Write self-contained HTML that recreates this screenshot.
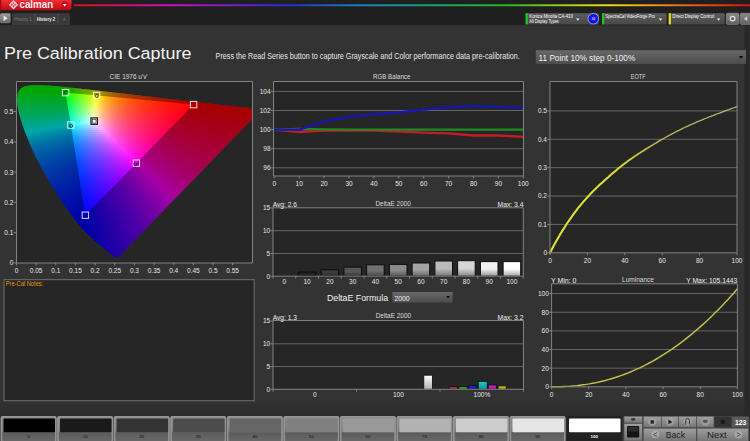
<!DOCTYPE html>
<html lang="en"><head><meta charset="utf-8"><title>Pre Calibration Capture</title>
<style>
html,body{margin:0;padding:0;background:#333333;overflow:hidden}
svg{display:block;font-family:"Liberation Sans", sans-serif}
</style></head>
<body>
<svg width="750" height="441" viewBox="0 0 750 441">
<defs>
<linearGradient id="botg" x1="0" y1="0" x2="0" y2="1"><stop offset="0" stop-color="#333333"/><stop offset="1" stop-color="#2a2a2a"/></linearGradient>
<linearGradient id="rain" x1="74" y1="0" x2="750" y2="0" gradientUnits="userSpaceOnUse"><stop offset="0" stop-color="#e01020"/><stop offset="0.15" stop-color="#d010c0"/><stop offset="0.24" stop-color="#7020d0"/><stop offset="0.32" stop-color="#2030d0"/><stop offset="0.42" stop-color="#2080c0"/><stop offset="0.50" stop-color="#10a090"/><stop offset="0.64" stop-color="#20c020"/><stop offset="0.72" stop-color="#a0d010"/><stop offset="0.79" stop-color="#f0e010"/><stop offset="0.90" stop-color="#f07010"/><stop offset="1" stop-color="#e01010"/></linearGradient>
<linearGradient id="redg" x1="0" y1="0" x2="0" y2="1"><stop offset="0" stop-color="#f03038"/><stop offset="0.5" stop-color="#e01822"/><stop offset="1" stop-color="#b80c14"/></linearGradient>
<linearGradient id="playg" x1="0" y1="0" x2="0" y2="1"><stop offset="0" stop-color="#9a9a9a"/><stop offset="1" stop-color="#6a6a6a"/></linearGradient>
<linearGradient id="mbg" x1="0" y1="0" x2="0" y2="1"><stop offset="0" stop-color="#5c5c5c"/><stop offset="1" stop-color="#484848"/></linearGradient>
<linearGradient id="tbg" x1="0" y1="0" x2="0" y2="1"><stop offset="0" stop-color="#8a8a8a"/><stop offset="1" stop-color="#606060"/></linearGradient>
<linearGradient id="ddg" x1="0" y1="0" x2="0" y2="1"><stop offset="0" stop-color="#686868"/><stop offset="1" stop-color="#4c4c4c"/></linearGradient>
<clipPath id="plotclip"><rect x="16.5" y="81.5" width="236.0" height="181.5"/></clipPath>
<clipPath id="locclip" clip-path="url(#plotclip)"><path d="M117.4 258.0L116.3 258.1L115.1 257.6L114.2 257.0L113.4 256.3L112.6 255.6L111.8 254.9L110.9 254.2L110.1 253.5L109.2 252.8L108.4 252.1L107.5 251.4L106.7 250.7L105.8 250.0L105.0 249.3L104.2 248.6L103.3 247.9L102.5 247.2L101.6 246.5L100.8 245.8L100.0 245.1L99.1 244.4L98.3 243.7L97.5 243.0L96.7 242.3L95.8 241.6L95.0 240.9L94.2 240.2L93.4 239.5L92.6 238.7L91.8 238.0L91.0 237.3L90.2 236.6L89.4 235.8L88.7 235.1L87.9 234.3L87.2 233.6L86.4 232.8L85.7 232.0L84.9 231.3L84.2 230.5L83.5 229.7L82.8 229.0L82.1 228.2L81.4 227.4L80.7 226.6L80.0 225.8L79.3 225.0L78.7 224.2L78.0 223.4L77.3 222.6L76.7 221.8L76.0 221.0L75.4 220.2L74.8 219.4L74.1 218.5L73.5 217.7L72.9 216.9L72.2 216.1L71.6 215.3L71.0 214.4L70.4 213.6L69.8 212.8L69.2 212.0L68.6 211.1L68.0 210.3L67.4 209.5L66.8 208.6L66.2 207.8L65.6 207.0L65.0 206.1L64.4 205.3L63.8 204.4L63.3 203.6L62.7 202.7L62.1 201.9L61.6 201.1L61.0 200.2L60.4 199.4L59.9 198.5L59.3 197.7L58.8 196.8L58.2 196.0L57.7 195.1L57.1 194.2L56.6 193.4L56.1 192.5L55.5 191.7L55.0 190.8L54.5 190.0L53.9 189.1L53.4 188.2L52.9 187.4L52.4 186.5L51.9 185.6L51.3 184.8L50.8 183.9L50.3 183.1L49.8 182.2L49.3 181.3L48.8 180.5L48.3 179.6L47.7 178.7L47.2 177.9L46.7 177.0L46.2 176.1L45.7 175.2L45.2 174.4L44.7 173.5L44.2 172.6L43.7 171.8L43.2 170.9L42.8 170.0L42.3 169.1L41.8 168.3L41.3 167.4L40.8 166.5L40.4 165.6L39.9 164.7L39.4 163.9L39.0 163.0L38.5 162.1L38.0 161.2L37.6 160.3L37.1 159.4L36.7 158.6L36.2 157.7L35.8 156.8L35.4 155.9L34.9 155.0L34.5 154.1L34.1 153.2L33.7 152.3L33.3 151.4L32.8 150.5L32.4 149.6L32.0 148.7L31.6 147.8L31.2 146.9L30.8 146.0L30.4 145.1L30.0 144.2L29.7 143.3L29.3 142.4L28.9 141.5L28.5 140.6L28.1 139.7L27.8 138.8L27.4 137.9L27.0 137.0L26.7 136.1L26.3 135.1L26.0 134.2L25.6 133.3L25.3 132.4L24.9 131.5L24.6 130.6L24.2 129.7L23.9 128.7L23.6 127.8L23.3 126.9L22.9 126.0L22.6 125.1L22.3 124.1L22.0 123.2L21.7 122.3L21.4 121.4L21.1 120.5L20.8 119.5L20.6 118.6L20.3 117.7L20.0 116.7L19.8 115.8L19.5 114.9L19.3 113.9L19.0 113.0L18.8 112.1L18.6 111.1L18.4 110.2L18.2 109.3L18.0 108.3L17.8 107.4L17.7 106.4L17.5 105.5L17.4 104.5L17.3 103.6L17.2 102.6L17.1 101.7L17.1 100.7L17.0 99.8L17.1 98.8L17.1 97.9L17.2 96.9L17.3 96.0L17.4 95.0L17.7 94.1L17.9 93.2L18.3 92.2L18.7 91.3L19.2 90.4L19.9 89.6L20.6 88.8L21.4 88.1L22.3 87.5L23.4 87.0L24.5 86.5L25.6 86.1L26.8 85.9L28.0 85.7L29.2 85.5L30.5 85.4L31.7 85.3L32.9 85.3L34.2 85.2L35.4 85.2L36.6 85.2L37.9 85.2L39.1 85.2L40.3 85.2L41.6 85.3L42.8 85.3L44.0 85.4L45.3 85.4L46.5 85.5L47.7 85.6L49.0 85.6L50.2 85.7L51.4 85.8L52.6 85.9L53.9 86.0L55.1 86.1L56.3 86.2L57.6 86.3L58.8 86.4L60.0 86.6L61.2 86.7L62.5 86.8L63.7 86.9L64.9 87.0L66.1 87.2L67.4 87.3L68.6 87.4L69.8 87.5L71.0 87.7L72.2 87.8L73.5 87.9L74.7 88.1L75.9 88.2L77.1 88.3L78.4 88.5L79.6 88.6L80.8 88.7L82.0 88.9L83.2 89.0L84.5 89.2L85.7 89.3L86.9 89.4L88.1 89.6L89.3 89.7L90.6 89.8L91.8 90.0L93.0 90.1L94.2 90.3L95.5 90.4L96.7 90.5L97.9 90.7L99.1 90.8L100.3 91.0L101.6 91.1L102.8 91.2L104.0 91.4L105.2 91.5L106.4 91.7L107.7 91.8L108.9 92.0L110.1 92.1L111.3 92.2L112.5 92.4L113.8 92.5L115.0 92.7L116.2 92.8L117.4 92.9L118.7 93.1L119.9 93.2L121.1 93.4L122.3 93.5L123.5 93.6L124.8 93.8L126.0 93.9L127.2 94.1L128.4 94.2L129.6 94.3L130.9 94.5L132.1 94.6L133.3 94.8L134.5 94.9L135.7 95.0L137.0 95.2L138.2 95.3L139.4 95.5L140.6 95.6L141.8 95.7L143.1 95.9L144.3 96.0L145.5 96.2L146.7 96.3L148.0 96.4L149.2 96.6L150.4 96.7L151.6 96.9L152.8 97.0L154.1 97.2L155.3 97.3L156.5 97.4L157.7 97.6L158.9 97.7L160.2 97.9L161.4 98.0L162.6 98.1L163.8 98.3L165.0 98.4L166.3 98.6L167.5 98.7L168.7 98.8L169.9 99.0L171.1 99.1L172.4 99.3L173.6 99.4L174.8 99.6L176.0 99.7L177.3 99.8L178.5 100.0L179.7 100.1L180.9 100.3L182.1 100.4L183.4 100.5L184.6 100.7L185.8 100.8L187.0 101.0L188.2 101.1L189.5 101.2L190.7 101.4L191.9 101.5L193.1 101.7L194.3 101.8L195.6 101.9L196.8 102.1L198.0 102.2L199.2 102.4L200.5 102.5L201.7 102.6L202.9 102.8L204.1 102.9L205.3 103.1L206.6 103.2L207.8 103.3L209.0 103.5L210.2 103.6L211.4 103.8L212.7 103.9L213.9 104.0L215.1 104.2L216.3 104.3L217.5 104.5L218.8 104.6L220.0 104.8L221.2 104.9L222.4 105.0L223.6 105.2L224.9 105.3L226.1 105.5L227.3 105.6L228.5 105.7L229.8 105.9L231.0 106.0L232.2 106.2L233.4 106.3L234.6 106.4L235.9 106.6L237.1 106.7L238.3 106.9L239.5 107.0L240.7 107.1L242.0 107.3L243.2 107.4L244.4 107.6L245.6 107.7L246.8 107.8L248.1 108.0L249.3 108.1L250.5 108.3L251.7 108.4L252.9 108.5L254.2 108.7L255.4 108.8L256.6 109.0L257.8 109.1L259.1 109.3L260.3 109.4L261.5 109.5Z"/></clipPath>
<linearGradient id="r0" gradientUnits="userSpaceOnUse" x1="25.5" y1="0" x2="54.5" y2="0"><stop offset="0.000" stop-color="#00ff00"/><stop offset="0.125" stop-color="#00ff00"/><stop offset="0.250" stop-color="#00ff00"/><stop offset="0.375" stop-color="#00ff00"/><stop offset="0.500" stop-color="#00ff00"/><stop offset="0.625" stop-color="#00ff00"/><stop offset="0.750" stop-color="#00ff00"/><stop offset="0.875" stop-color="#00ff00"/><stop offset="1.000" stop-color="#00ff00"/></linearGradient>
<linearGradient id="r1" gradientUnits="userSpaceOnUse" x1="21.0" y1="0" x2="74.5" y2="0"><stop offset="0.000" stop-color="#00ff00"/><stop offset="0.071" stop-color="#00ff00"/><stop offset="0.143" stop-color="#00ff00"/><stop offset="0.214" stop-color="#00ff00"/><stop offset="0.286" stop-color="#00ff00"/><stop offset="0.357" stop-color="#00ff00"/><stop offset="0.429" stop-color="#00ff00"/><stop offset="0.500" stop-color="#00ff00"/><stop offset="0.571" stop-color="#00ff00"/><stop offset="0.643" stop-color="#00ff00"/><stop offset="0.714" stop-color="#00ff00"/><stop offset="0.786" stop-color="#00ff00"/><stop offset="0.857" stop-color="#12ff00"/><stop offset="0.929" stop-color="#2dff00"/><stop offset="1.000" stop-color="#49ff00"/></linearGradient>
<linearGradient id="r2" gradientUnits="userSpaceOnUse" x1="19.0" y1="0" x2="92.5" y2="0"><stop offset="0.000" stop-color="#00ff05"/><stop offset="0.053" stop-color="#00ff03"/><stop offset="0.105" stop-color="#00ff01"/><stop offset="0.158" stop-color="#00ff00"/><stop offset="0.211" stop-color="#00ff00"/><stop offset="0.263" stop-color="#00ff00"/><stop offset="0.316" stop-color="#00ff00"/><stop offset="0.368" stop-color="#00ff00"/><stop offset="0.421" stop-color="#00ff00"/><stop offset="0.474" stop-color="#00ff00"/><stop offset="0.526" stop-color="#00ff00"/><stop offset="0.579" stop-color="#00ff00"/><stop offset="0.632" stop-color="#04ff00"/><stop offset="0.684" stop-color="#22ff00"/><stop offset="0.737" stop-color="#3eff00"/><stop offset="0.789" stop-color="#5aff00"/><stop offset="0.842" stop-color="#77ff00"/><stop offset="0.895" stop-color="#95ff00"/><stop offset="0.947" stop-color="#b4ff00"/><stop offset="1.000" stop-color="#d5ff00"/></linearGradient>
<linearGradient id="r3" gradientUnits="userSpaceOnUse" x1="17.5" y1="0" x2="110.0" y2="0"><stop offset="0.000" stop-color="#00ff11"/><stop offset="0.042" stop-color="#00ff10"/><stop offset="0.083" stop-color="#00ff0e"/><stop offset="0.125" stop-color="#00ff0c"/><stop offset="0.167" stop-color="#00ff0a"/><stop offset="0.208" stop-color="#00ff08"/><stop offset="0.250" stop-color="#00ff06"/><stop offset="0.292" stop-color="#00ff03"/><stop offset="0.333" stop-color="#00ff01"/><stop offset="0.375" stop-color="#00ff00"/><stop offset="0.417" stop-color="#00ff00"/><stop offset="0.458" stop-color="#00ff00"/><stop offset="0.500" stop-color="#00ff00"/><stop offset="0.542" stop-color="#13ff00"/><stop offset="0.583" stop-color="#30ff00"/><stop offset="0.625" stop-color="#4cff00"/><stop offset="0.667" stop-color="#69ff00"/><stop offset="0.708" stop-color="#87ff00"/><stop offset="0.750" stop-color="#a6ff00"/><stop offset="0.792" stop-color="#c6ff00"/><stop offset="0.833" stop-color="#e8ff00"/><stop offset="0.875" stop-color="#fff300"/><stop offset="0.917" stop-color="#ffd500"/><stop offset="0.958" stop-color="#ffbc00"/><stop offset="1.000" stop-color="#ffa700"/></linearGradient>
<linearGradient id="r4" gradientUnits="userSpaceOnUse" x1="17.0" y1="0" x2="127.5" y2="0"><stop offset="0.000" stop-color="#00ff1c"/><stop offset="0.036" stop-color="#00ff1b"/><stop offset="0.071" stop-color="#00ff19"/><stop offset="0.107" stop-color="#00ff18"/><stop offset="0.143" stop-color="#00ff16"/><stop offset="0.179" stop-color="#00ff14"/><stop offset="0.214" stop-color="#00ff13"/><stop offset="0.250" stop-color="#00ff11"/><stop offset="0.286" stop-color="#00ff0f"/><stop offset="0.321" stop-color="#00ff0d"/><stop offset="0.357" stop-color="#00ff0a"/><stop offset="0.393" stop-color="#00ff08"/><stop offset="0.429" stop-color="#00ff05"/><stop offset="0.464" stop-color="#16ff02"/><stop offset="0.500" stop-color="#34ff00"/><stop offset="0.536" stop-color="#52ff00"/><stop offset="0.571" stop-color="#70ff00"/><stop offset="0.607" stop-color="#8fff00"/><stop offset="0.643" stop-color="#b0ff00"/><stop offset="0.679" stop-color="#d2ff00"/><stop offset="0.714" stop-color="#f6ff00"/><stop offset="0.750" stop-color="#ffe500"/><stop offset="0.786" stop-color="#ffc800"/><stop offset="0.821" stop-color="#ffb100"/><stop offset="0.857" stop-color="#ff9d00"/><stop offset="0.893" stop-color="#ff8d00"/><stop offset="0.929" stop-color="#ff7e00"/><stop offset="0.964" stop-color="#ff7100"/><stop offset="1.000" stop-color="#ff6600"/></linearGradient>
<linearGradient id="r5" gradientUnits="userSpaceOnUse" x1="16.5" y1="0" x2="145.0" y2="0"><stop offset="0.000" stop-color="#00ff26"/><stop offset="0.030" stop-color="#00ff25"/><stop offset="0.061" stop-color="#00ff24"/><stop offset="0.091" stop-color="#00ff23"/><stop offset="0.121" stop-color="#00ff22"/><stop offset="0.152" stop-color="#00ff20"/><stop offset="0.182" stop-color="#00ff1f"/><stop offset="0.212" stop-color="#00ff1d"/><stop offset="0.242" stop-color="#00ff1c"/><stop offset="0.273" stop-color="#00ff1a"/><stop offset="0.303" stop-color="#00ff18"/><stop offset="0.333" stop-color="#00ff17"/><stop offset="0.364" stop-color="#00ff15"/><stop offset="0.394" stop-color="#0aff13"/><stop offset="0.424" stop-color="#29ff10"/><stop offset="0.455" stop-color="#47ff0e"/><stop offset="0.485" stop-color="#65ff0b"/><stop offset="0.515" stop-color="#84ff08"/><stop offset="0.545" stop-color="#a4ff05"/><stop offset="0.576" stop-color="#c6ff01"/><stop offset="0.606" stop-color="#e9ff00"/><stop offset="0.636" stop-color="#fff000"/><stop offset="0.667" stop-color="#ffd200"/><stop offset="0.697" stop-color="#ffb900"/><stop offset="0.727" stop-color="#ffa400"/><stop offset="0.758" stop-color="#ff9200"/><stop offset="0.788" stop-color="#ff8300"/><stop offset="0.818" stop-color="#ff7500"/><stop offset="0.848" stop-color="#ff6a00"/><stop offset="0.879" stop-color="#ff5f00"/><stop offset="0.909" stop-color="#ff5600"/><stop offset="0.939" stop-color="#ff4e00"/><stop offset="0.970" stop-color="#ff4600"/><stop offset="1.000" stop-color="#ff3f00"/></linearGradient>
<linearGradient id="r6" gradientUnits="userSpaceOnUse" x1="16.5" y1="0" x2="162.0" y2="0"><stop offset="0.000" stop-color="#00ff30"/><stop offset="0.027" stop-color="#00ff30"/><stop offset="0.054" stop-color="#00ff2f"/><stop offset="0.081" stop-color="#00ff2e"/><stop offset="0.108" stop-color="#00ff2d"/><stop offset="0.135" stop-color="#00ff2c"/><stop offset="0.162" stop-color="#00ff2b"/><stop offset="0.189" stop-color="#00ff29"/><stop offset="0.216" stop-color="#00ff28"/><stop offset="0.243" stop-color="#00ff27"/><stop offset="0.270" stop-color="#00ff25"/><stop offset="0.297" stop-color="#00ff24"/><stop offset="0.324" stop-color="#00ff22"/><stop offset="0.351" stop-color="#0cff21"/><stop offset="0.378" stop-color="#2bff1f"/><stop offset="0.405" stop-color="#4aff1d"/><stop offset="0.432" stop-color="#69ff1b"/><stop offset="0.459" stop-color="#89ff19"/><stop offset="0.486" stop-color="#aaff17"/><stop offset="0.514" stop-color="#cdff14"/><stop offset="0.541" stop-color="#f2ff11"/><stop offset="0.568" stop-color="#ffe80d"/><stop offset="0.595" stop-color="#ffca09"/><stop offset="0.622" stop-color="#ffb205"/><stop offset="0.649" stop-color="#ff9d02"/><stop offset="0.676" stop-color="#ff8c00"/><stop offset="0.703" stop-color="#ff7d00"/><stop offset="0.730" stop-color="#ff7000"/><stop offset="0.757" stop-color="#ff6500"/><stop offset="0.784" stop-color="#ff5b00"/><stop offset="0.811" stop-color="#ff5200"/><stop offset="0.838" stop-color="#ff4900"/><stop offset="0.865" stop-color="#ff4200"/><stop offset="0.892" stop-color="#ff3b00"/><stop offset="0.919" stop-color="#ff3500"/><stop offset="0.946" stop-color="#ff2f00"/><stop offset="0.973" stop-color="#ff2a00"/><stop offset="1.000" stop-color="#ff2500"/></linearGradient>
<linearGradient id="r7" gradientUnits="userSpaceOnUse" x1="16.5" y1="0" x2="179.5" y2="0"><stop offset="0.000" stop-color="#00ff3a"/><stop offset="0.024" stop-color="#00ff3a"/><stop offset="0.049" stop-color="#00ff39"/><stop offset="0.073" stop-color="#00ff38"/><stop offset="0.098" stop-color="#00ff38"/><stop offset="0.122" stop-color="#00ff37"/><stop offset="0.146" stop-color="#00ff36"/><stop offset="0.171" stop-color="#00ff35"/><stop offset="0.195" stop-color="#00ff34"/><stop offset="0.220" stop-color="#00ff33"/><stop offset="0.244" stop-color="#00ff32"/><stop offset="0.268" stop-color="#00ff31"/><stop offset="0.293" stop-color="#00ff30"/><stop offset="0.317" stop-color="#0eff2f"/><stop offset="0.341" stop-color="#2eff2e"/><stop offset="0.366" stop-color="#4eff2c"/><stop offset="0.390" stop-color="#6eff2b"/><stop offset="0.415" stop-color="#8fff29"/><stop offset="0.439" stop-color="#b1ff27"/><stop offset="0.463" stop-color="#d6ff26"/><stop offset="0.488" stop-color="#fcff24"/><stop offset="0.512" stop-color="#ffde1d"/><stop offset="0.537" stop-color="#ffc218"/><stop offset="0.561" stop-color="#ffaa13"/><stop offset="0.585" stop-color="#ff960f"/><stop offset="0.610" stop-color="#ff860c"/><stop offset="0.634" stop-color="#ff7709"/><stop offset="0.659" stop-color="#ff6b06"/><stop offset="0.683" stop-color="#ff6004"/><stop offset="0.707" stop-color="#ff5602"/><stop offset="0.732" stop-color="#ff4d00"/><stop offset="0.756" stop-color="#ff4500"/><stop offset="0.780" stop-color="#ff3e00"/><stop offset="0.805" stop-color="#ff3700"/><stop offset="0.829" stop-color="#ff3100"/><stop offset="0.854" stop-color="#ff2c00"/><stop offset="0.878" stop-color="#ff2700"/><stop offset="0.902" stop-color="#ff2200"/><stop offset="0.927" stop-color="#ff1d00"/><stop offset="0.951" stop-color="#ff1900"/><stop offset="0.976" stop-color="#ff1500"/><stop offset="1.000" stop-color="#ff1100"/></linearGradient>
<linearGradient id="r8" gradientUnits="userSpaceOnUse" x1="16.5" y1="0" x2="197.0" y2="0"><stop offset="0.000" stop-color="#00ff45"/><stop offset="0.022" stop-color="#00ff44"/><stop offset="0.043" stop-color="#00ff44"/><stop offset="0.065" stop-color="#00ff43"/><stop offset="0.087" stop-color="#00ff43"/><stop offset="0.109" stop-color="#00ff42"/><stop offset="0.130" stop-color="#00ff42"/><stop offset="0.152" stop-color="#00ff41"/><stop offset="0.174" stop-color="#00ff41"/><stop offset="0.196" stop-color="#00ff40"/><stop offset="0.217" stop-color="#00ff3f"/><stop offset="0.239" stop-color="#00ff3f"/><stop offset="0.261" stop-color="#00ff3e"/><stop offset="0.283" stop-color="#05ff3d"/><stop offset="0.304" stop-color="#27ff3c"/><stop offset="0.326" stop-color="#46ff3c"/><stop offset="0.348" stop-color="#66ff3b"/><stop offset="0.370" stop-color="#87ff3a"/><stop offset="0.391" stop-color="#a9ff39"/><stop offset="0.413" stop-color="#cdff37"/><stop offset="0.435" stop-color="#f3ff36"/><stop offset="0.457" stop-color="#ffe530"/><stop offset="0.478" stop-color="#ffc728"/><stop offset="0.500" stop-color="#ffae22"/><stop offset="0.522" stop-color="#ff9a1d"/><stop offset="0.543" stop-color="#ff8919"/><stop offset="0.565" stop-color="#ff7a15"/><stop offset="0.587" stop-color="#ff6d12"/><stop offset="0.609" stop-color="#ff620f"/><stop offset="0.630" stop-color="#ff580c"/><stop offset="0.652" stop-color="#ff4f0a"/><stop offset="0.674" stop-color="#ff4608"/><stop offset="0.696" stop-color="#ff3f06"/><stop offset="0.717" stop-color="#ff3804"/><stop offset="0.739" stop-color="#ff3203"/><stop offset="0.761" stop-color="#ff2d01"/><stop offset="0.783" stop-color="#ff2700"/><stop offset="0.804" stop-color="#ff2200"/><stop offset="0.826" stop-color="#ff1e00"/><stop offset="0.848" stop-color="#ff1a00"/><stop offset="0.870" stop-color="#ff1600"/><stop offset="0.891" stop-color="#ff1200"/><stop offset="0.913" stop-color="#ff0e00"/><stop offset="0.935" stop-color="#ff0b00"/><stop offset="0.957" stop-color="#ff0700"/><stop offset="0.978" stop-color="#ff0400"/><stop offset="1.000" stop-color="#ff0000"/></linearGradient>
<linearGradient id="r9" gradientUnits="userSpaceOnUse" x1="16.5" y1="0" x2="214.0" y2="0"><stop offset="0.000" stop-color="#00ff4f"/><stop offset="0.020" stop-color="#00ff4f"/><stop offset="0.040" stop-color="#00ff4e"/><stop offset="0.060" stop-color="#00ff4e"/><stop offset="0.080" stop-color="#00ff4e"/><stop offset="0.100" stop-color="#00ff4e"/><stop offset="0.120" stop-color="#00ff4e"/><stop offset="0.140" stop-color="#00ff4d"/><stop offset="0.160" stop-color="#00ff4d"/><stop offset="0.180" stop-color="#00ff4d"/><stop offset="0.200" stop-color="#00ff4c"/><stop offset="0.220" stop-color="#00ff4c"/><stop offset="0.240" stop-color="#00ff4c"/><stop offset="0.260" stop-color="#06ff4b"/><stop offset="0.280" stop-color="#28ff4b"/><stop offset="0.300" stop-color="#48ff4b"/><stop offset="0.320" stop-color="#69ff4a"/><stop offset="0.340" stop-color="#8bff4a"/><stop offset="0.360" stop-color="#aeff49"/><stop offset="0.380" stop-color="#d3ff49"/><stop offset="0.400" stop-color="#faff48"/><stop offset="0.420" stop-color="#ffdf3f"/><stop offset="0.440" stop-color="#ffc136"/><stop offset="0.460" stop-color="#ffa92f"/><stop offset="0.480" stop-color="#ff9529"/><stop offset="0.500" stop-color="#ff8424"/><stop offset="0.520" stop-color="#ff751f"/><stop offset="0.540" stop-color="#ff691b"/><stop offset="0.560" stop-color="#ff5e18"/><stop offset="0.580" stop-color="#ff5415"/><stop offset="0.600" stop-color="#ff4b12"/><stop offset="0.620" stop-color="#ff4310"/><stop offset="0.640" stop-color="#ff3c0e"/><stop offset="0.660" stop-color="#ff350c"/><stop offset="0.680" stop-color="#ff2f0a"/><stop offset="0.700" stop-color="#ff2a08"/><stop offset="0.720" stop-color="#ff2407"/><stop offset="0.740" stop-color="#ff2005"/><stop offset="0.760" stop-color="#ff1b04"/><stop offset="0.780" stop-color="#ff1702"/><stop offset="0.800" stop-color="#ff1301"/><stop offset="0.820" stop-color="#ff0f00"/><stop offset="0.840" stop-color="#ff0c00"/><stop offset="0.860" stop-color="#ff0800"/><stop offset="0.880" stop-color="#ff0500"/><stop offset="0.900" stop-color="#ff0100"/><stop offset="0.920" stop-color="#ff0000"/><stop offset="0.940" stop-color="#ff0000"/><stop offset="0.960" stop-color="#ff0000"/><stop offset="0.980" stop-color="#ff0000"/><stop offset="1.000" stop-color="#ff0000"/></linearGradient>
<linearGradient id="r10" gradientUnits="userSpaceOnUse" x1="16.5" y1="0" x2="231.5" y2="0"><stop offset="0.000" stop-color="#00ff59"/><stop offset="0.019" stop-color="#00ff59"/><stop offset="0.037" stop-color="#00ff59"/><stop offset="0.056" stop-color="#00ff59"/><stop offset="0.074" stop-color="#00ff59"/><stop offset="0.093" stop-color="#00ff59"/><stop offset="0.111" stop-color="#00ff59"/><stop offset="0.130" stop-color="#00ff59"/><stop offset="0.148" stop-color="#00ff59"/><stop offset="0.167" stop-color="#00ff5a"/><stop offset="0.185" stop-color="#00ff5a"/><stop offset="0.204" stop-color="#00ff5a"/><stop offset="0.222" stop-color="#00ff5a"/><stop offset="0.241" stop-color="#07ff5a"/><stop offset="0.259" stop-color="#29ff5a"/><stop offset="0.278" stop-color="#4aff5a"/><stop offset="0.296" stop-color="#6cff5a"/><stop offset="0.315" stop-color="#8fff5a"/><stop offset="0.333" stop-color="#b4ff5b"/><stop offset="0.352" stop-color="#daff5b"/><stop offset="0.370" stop-color="#fffb59"/><stop offset="0.389" stop-color="#ffd74d"/><stop offset="0.407" stop-color="#ffba43"/><stop offset="0.426" stop-color="#ffa33a"/><stop offset="0.444" stop-color="#ff8f33"/><stop offset="0.463" stop-color="#ff7f2e"/><stop offset="0.481" stop-color="#ff7129"/><stop offset="0.500" stop-color="#ff6424"/><stop offset="0.519" stop-color="#ff5921"/><stop offset="0.537" stop-color="#ff501d"/><stop offset="0.556" stop-color="#ff471a"/><stop offset="0.574" stop-color="#ff3f17"/><stop offset="0.593" stop-color="#ff3815"/><stop offset="0.611" stop-color="#ff3213"/><stop offset="0.630" stop-color="#ff2c11"/><stop offset="0.648" stop-color="#ff260f"/><stop offset="0.667" stop-color="#ff210d"/><stop offset="0.685" stop-color="#ff1d0b"/><stop offset="0.704" stop-color="#ff180a"/><stop offset="0.722" stop-color="#ff1408"/><stop offset="0.741" stop-color="#ff1007"/><stop offset="0.759" stop-color="#ff0c06"/><stop offset="0.778" stop-color="#ff0904"/><stop offset="0.796" stop-color="#ff0503"/><stop offset="0.815" stop-color="#ff0202"/><stop offset="0.833" stop-color="#ff0001"/><stop offset="0.852" stop-color="#ff0000"/><stop offset="0.870" stop-color="#ff0000"/><stop offset="0.889" stop-color="#ff0000"/><stop offset="0.907" stop-color="#ff0000"/><stop offset="0.926" stop-color="#ff0000"/><stop offset="0.944" stop-color="#ff0000"/><stop offset="0.963" stop-color="#ff0000"/><stop offset="0.981" stop-color="#ff0000"/><stop offset="1.000" stop-color="#ff0000"/></linearGradient>
<linearGradient id="r11" gradientUnits="userSpaceOnUse" x1="17.0" y1="0" x2="249.0" y2="0"><stop offset="0.000" stop-color="#00ff63"/><stop offset="0.017" stop-color="#00ff64"/><stop offset="0.034" stop-color="#00ff64"/><stop offset="0.052" stop-color="#00ff64"/><stop offset="0.069" stop-color="#00ff65"/><stop offset="0.086" stop-color="#00ff65"/><stop offset="0.103" stop-color="#00ff65"/><stop offset="0.121" stop-color="#00ff66"/><stop offset="0.138" stop-color="#00ff66"/><stop offset="0.155" stop-color="#00ff67"/><stop offset="0.172" stop-color="#00ff67"/><stop offset="0.190" stop-color="#00ff68"/><stop offset="0.207" stop-color="#00ff68"/><stop offset="0.224" stop-color="#0bff69"/><stop offset="0.241" stop-color="#2eff69"/><stop offset="0.259" stop-color="#50ff6a"/><stop offset="0.276" stop-color="#72ff6b"/><stop offset="0.293" stop-color="#96ff6b"/><stop offset="0.310" stop-color="#bcff6c"/><stop offset="0.328" stop-color="#e4ff6d"/><stop offset="0.345" stop-color="#fff068"/><stop offset="0.362" stop-color="#ffce5a"/><stop offset="0.379" stop-color="#ffb24e"/><stop offset="0.397" stop-color="#ff9c45"/><stop offset="0.414" stop-color="#ff893e"/><stop offset="0.431" stop-color="#ff7937"/><stop offset="0.448" stop-color="#ff6b32"/><stop offset="0.466" stop-color="#ff5f2d"/><stop offset="0.483" stop-color="#ff5528"/><stop offset="0.500" stop-color="#ff4b25"/><stop offset="0.517" stop-color="#ff4321"/><stop offset="0.534" stop-color="#ff3c1e"/><stop offset="0.552" stop-color="#ff351c"/><stop offset="0.569" stop-color="#ff2e19"/><stop offset="0.586" stop-color="#ff2917"/><stop offset="0.603" stop-color="#ff2315"/><stop offset="0.621" stop-color="#ff1e13"/><stop offset="0.638" stop-color="#ff1a11"/><stop offset="0.655" stop-color="#ff150f"/><stop offset="0.672" stop-color="#ff110e"/><stop offset="0.690" stop-color="#ff0d0c"/><stop offset="0.707" stop-color="#ff0a0b"/><stop offset="0.724" stop-color="#ff0609"/><stop offset="0.741" stop-color="#ff0208"/><stop offset="0.759" stop-color="#ff0007"/><stop offset="0.776" stop-color="#ff0006"/><stop offset="0.793" stop-color="#ff0005"/><stop offset="0.810" stop-color="#ff0004"/><stop offset="0.828" stop-color="#ff0003"/><stop offset="0.845" stop-color="#ff0002"/><stop offset="0.862" stop-color="#ff0001"/><stop offset="0.879" stop-color="#ff0000"/><stop offset="0.897" stop-color="#ff0000"/><stop offset="0.914" stop-color="#ff0000"/><stop offset="0.931" stop-color="#ff0000"/><stop offset="0.948" stop-color="#ff0000"/><stop offset="0.966" stop-color="#ff0000"/><stop offset="0.983" stop-color="#ff0000"/><stop offset="1.000" stop-color="#ff0000"/></linearGradient>
<linearGradient id="r12" gradientUnits="userSpaceOnUse" x1="17.0" y1="0" x2="253.0" y2="0"><stop offset="0.000" stop-color="#00ff6e"/><stop offset="0.017" stop-color="#00ff6e"/><stop offset="0.034" stop-color="#00ff6f"/><stop offset="0.051" stop-color="#00ff70"/><stop offset="0.068" stop-color="#00ff70"/><stop offset="0.085" stop-color="#00ff71"/><stop offset="0.102" stop-color="#00ff72"/><stop offset="0.119" stop-color="#00ff72"/><stop offset="0.136" stop-color="#00ff73"/><stop offset="0.153" stop-color="#00ff74"/><stop offset="0.169" stop-color="#00ff75"/><stop offset="0.186" stop-color="#00ff76"/><stop offset="0.203" stop-color="#00ff77"/><stop offset="0.220" stop-color="#08ff78"/><stop offset="0.237" stop-color="#2cff79"/><stop offset="0.254" stop-color="#4eff7a"/><stop offset="0.271" stop-color="#72ff7b"/><stop offset="0.288" stop-color="#96ff7d"/><stop offset="0.305" stop-color="#bdff7e"/><stop offset="0.322" stop-color="#e5ff80"/><stop offset="0.339" stop-color="#ffee79"/><stop offset="0.356" stop-color="#ffcc69"/><stop offset="0.373" stop-color="#ffb05c"/><stop offset="0.390" stop-color="#ff9a52"/><stop offset="0.407" stop-color="#ff8749"/><stop offset="0.424" stop-color="#ff7742"/><stop offset="0.441" stop-color="#ff693b"/><stop offset="0.458" stop-color="#ff5d36"/><stop offset="0.475" stop-color="#ff5331"/><stop offset="0.492" stop-color="#ff4a2d"/><stop offset="0.508" stop-color="#ff4129"/><stop offset="0.525" stop-color="#ff3a26"/><stop offset="0.542" stop-color="#ff3323"/><stop offset="0.559" stop-color="#ff2d20"/><stop offset="0.576" stop-color="#ff271d"/><stop offset="0.593" stop-color="#ff221b"/><stop offset="0.610" stop-color="#ff1d19"/><stop offset="0.627" stop-color="#ff1817"/><stop offset="0.644" stop-color="#ff1415"/><stop offset="0.661" stop-color="#ff1013"/><stop offset="0.678" stop-color="#ff0c12"/><stop offset="0.695" stop-color="#ff0810"/><stop offset="0.712" stop-color="#ff040f"/><stop offset="0.729" stop-color="#ff000d"/><stop offset="0.746" stop-color="#ff000c"/><stop offset="0.763" stop-color="#ff000b"/><stop offset="0.780" stop-color="#ff000a"/><stop offset="0.797" stop-color="#ff0009"/><stop offset="0.814" stop-color="#ff0007"/><stop offset="0.831" stop-color="#ff0006"/><stop offset="0.847" stop-color="#ff0005"/><stop offset="0.864" stop-color="#ff0005"/><stop offset="0.881" stop-color="#ff0004"/><stop offset="0.898" stop-color="#ff0003"/><stop offset="0.915" stop-color="#ff0002"/><stop offset="0.932" stop-color="#ff0001"/><stop offset="0.949" stop-color="#ff0000"/><stop offset="0.966" stop-color="#ff0000"/><stop offset="0.983" stop-color="#ff0000"/><stop offset="1.000" stop-color="#ff0000"/></linearGradient>
<linearGradient id="r13" gradientUnits="userSpaceOnUse" x1="17.5" y1="0" x2="253.0" y2="0"><stop offset="0.000" stop-color="#00ff79"/><stop offset="0.017" stop-color="#00ff79"/><stop offset="0.034" stop-color="#00ff7a"/><stop offset="0.051" stop-color="#00ff7b"/><stop offset="0.068" stop-color="#00ff7c"/><stop offset="0.085" stop-color="#00ff7d"/><stop offset="0.102" stop-color="#00ff7e"/><stop offset="0.119" stop-color="#00ff7f"/><stop offset="0.136" stop-color="#00ff80"/><stop offset="0.153" stop-color="#00ff81"/><stop offset="0.169" stop-color="#00ff83"/><stop offset="0.186" stop-color="#00ff84"/><stop offset="0.203" stop-color="#00ff86"/><stop offset="0.220" stop-color="#09ff87"/><stop offset="0.237" stop-color="#2dff89"/><stop offset="0.254" stop-color="#50ff8a"/><stop offset="0.271" stop-color="#74ff8c"/><stop offset="0.288" stop-color="#9aff8e"/><stop offset="0.305" stop-color="#c1ff91"/><stop offset="0.322" stop-color="#ebff93"/><stop offset="0.339" stop-color="#ffe989"/><stop offset="0.356" stop-color="#ffc777"/><stop offset="0.373" stop-color="#ffac69"/><stop offset="0.390" stop-color="#ff965d"/><stop offset="0.407" stop-color="#ff8354"/><stop offset="0.424" stop-color="#ff744c"/><stop offset="0.441" stop-color="#ff6645"/><stop offset="0.458" stop-color="#ff5a3f"/><stop offset="0.475" stop-color="#ff5039"/><stop offset="0.492" stop-color="#ff4735"/><stop offset="0.508" stop-color="#ff3f31"/><stop offset="0.525" stop-color="#ff372d"/><stop offset="0.542" stop-color="#ff312a"/><stop offset="0.559" stop-color="#ff2a26"/><stop offset="0.576" stop-color="#ff2524"/><stop offset="0.593" stop-color="#ff2021"/><stop offset="0.610" stop-color="#ff1b1f"/><stop offset="0.627" stop-color="#ff161c"/><stop offset="0.644" stop-color="#ff121a"/><stop offset="0.661" stop-color="#ff0e19"/><stop offset="0.678" stop-color="#ff0a17"/><stop offset="0.695" stop-color="#ff0615"/><stop offset="0.712" stop-color="#ff0214"/><stop offset="0.729" stop-color="#ff0012"/><stop offset="0.746" stop-color="#ff0011"/><stop offset="0.763" stop-color="#ff000f"/><stop offset="0.780" stop-color="#ff000e"/><stop offset="0.797" stop-color="#ff000d"/><stop offset="0.814" stop-color="#ff000c"/><stop offset="0.831" stop-color="#ff000b"/><stop offset="0.847" stop-color="#ff000a"/><stop offset="0.864" stop-color="#ff0009"/><stop offset="0.881" stop-color="#ff0008"/><stop offset="0.898" stop-color="#ff0007"/><stop offset="0.915" stop-color="#ff0006"/><stop offset="0.932" stop-color="#ff0005"/><stop offset="0.949" stop-color="#ff0004"/><stop offset="0.966" stop-color="#ff0004"/><stop offset="0.983" stop-color="#ff0003"/><stop offset="1.000" stop-color="#ff0002"/></linearGradient>
<linearGradient id="r14" gradientUnits="userSpaceOnUse" x1="18.0" y1="0" x2="253.0" y2="0"><stop offset="0.000" stop-color="#00ff83"/><stop offset="0.017" stop-color="#00ff85"/><stop offset="0.034" stop-color="#00ff86"/><stop offset="0.051" stop-color="#00ff87"/><stop offset="0.068" stop-color="#00ff88"/><stop offset="0.085" stop-color="#00ff89"/><stop offset="0.102" stop-color="#00ff8b"/><stop offset="0.119" stop-color="#00ff8c"/><stop offset="0.136" stop-color="#00ff8e"/><stop offset="0.153" stop-color="#00ff8f"/><stop offset="0.169" stop-color="#00ff91"/><stop offset="0.186" stop-color="#00ff93"/><stop offset="0.203" stop-color="#00ff95"/><stop offset="0.220" stop-color="#09ff97"/><stop offset="0.237" stop-color="#2eff99"/><stop offset="0.254" stop-color="#52ff9b"/><stop offset="0.271" stop-color="#77ff9e"/><stop offset="0.288" stop-color="#9dffa1"/><stop offset="0.305" stop-color="#c5ffa4"/><stop offset="0.322" stop-color="#f0ffa7"/><stop offset="0.339" stop-color="#ffe498"/><stop offset="0.356" stop-color="#ffc285"/><stop offset="0.373" stop-color="#ffa875"/><stop offset="0.390" stop-color="#ff9269"/><stop offset="0.407" stop-color="#ff805e"/><stop offset="0.424" stop-color="#ff7056"/><stop offset="0.441" stop-color="#ff634e"/><stop offset="0.458" stop-color="#ff5847"/><stop offset="0.475" stop-color="#ff4d42"/><stop offset="0.492" stop-color="#ff443d"/><stop offset="0.508" stop-color="#ff3c38"/><stop offset="0.525" stop-color="#ff3534"/><stop offset="0.542" stop-color="#ff2e30"/><stop offset="0.559" stop-color="#ff282d"/><stop offset="0.576" stop-color="#ff232a"/><stop offset="0.593" stop-color="#ff1e27"/><stop offset="0.610" stop-color="#ff1924"/><stop offset="0.627" stop-color="#ff1422"/><stop offset="0.644" stop-color="#ff1020"/><stop offset="0.661" stop-color="#ff0c1e"/><stop offset="0.678" stop-color="#ff081c"/><stop offset="0.695" stop-color="#ff041a"/><stop offset="0.712" stop-color="#ff0018"/><stop offset="0.729" stop-color="#ff0017"/><stop offset="0.746" stop-color="#ff0015"/><stop offset="0.763" stop-color="#ff0014"/><stop offset="0.780" stop-color="#ff0013"/><stop offset="0.797" stop-color="#ff0011"/><stop offset="0.814" stop-color="#ff0010"/><stop offset="0.831" stop-color="#ff000f"/><stop offset="0.847" stop-color="#ff000e"/><stop offset="0.864" stop-color="#ff000d"/><stop offset="0.881" stop-color="#ff000c"/><stop offset="0.898" stop-color="#ff000b"/><stop offset="0.915" stop-color="#ff000a"/><stop offset="0.932" stop-color="#ff0009"/><stop offset="0.949" stop-color="#ff0008"/><stop offset="0.966" stop-color="#ff0007"/><stop offset="0.983" stop-color="#ff0006"/><stop offset="1.000" stop-color="#ff0006"/></linearGradient>
<linearGradient id="r15" gradientUnits="userSpaceOnUse" x1="18.5" y1="0" x2="253.0" y2="0"><stop offset="0.000" stop-color="#00ff8f"/><stop offset="0.017" stop-color="#00ff90"/><stop offset="0.034" stop-color="#00ff91"/><stop offset="0.051" stop-color="#00ff93"/><stop offset="0.068" stop-color="#00ff94"/><stop offset="0.085" stop-color="#00ff96"/><stop offset="0.102" stop-color="#00ff98"/><stop offset="0.119" stop-color="#00ff9a"/><stop offset="0.136" stop-color="#00ff9c"/><stop offset="0.153" stop-color="#00ff9e"/><stop offset="0.169" stop-color="#00ffa0"/><stop offset="0.186" stop-color="#00ffa2"/><stop offset="0.203" stop-color="#00ffa5"/><stop offset="0.220" stop-color="#0affa7"/><stop offset="0.237" stop-color="#30ffaa"/><stop offset="0.254" stop-color="#54ffad"/><stop offset="0.271" stop-color="#7affb0"/><stop offset="0.288" stop-color="#a1ffb4"/><stop offset="0.305" stop-color="#caffb8"/><stop offset="0.322" stop-color="#f6ffbc"/><stop offset="0.339" stop-color="#ffdea8"/><stop offset="0.356" stop-color="#ffbd93"/><stop offset="0.373" stop-color="#ffa382"/><stop offset="0.390" stop-color="#ff8e74"/><stop offset="0.407" stop-color="#ff7c69"/><stop offset="0.424" stop-color="#ff6d5f"/><stop offset="0.441" stop-color="#ff6057"/><stop offset="0.458" stop-color="#ff5550"/><stop offset="0.475" stop-color="#ff4b4a"/><stop offset="0.492" stop-color="#ff4244"/><stop offset="0.508" stop-color="#ff3a3f"/><stop offset="0.525" stop-color="#ff333b"/><stop offset="0.542" stop-color="#ff2c37"/><stop offset="0.559" stop-color="#ff2633"/><stop offset="0.576" stop-color="#ff2130"/><stop offset="0.593" stop-color="#ff1c2d"/><stop offset="0.610" stop-color="#ff172a"/><stop offset="0.627" stop-color="#ff1228"/><stop offset="0.644" stop-color="#ff0e25"/><stop offset="0.661" stop-color="#ff0a23"/><stop offset="0.678" stop-color="#ff0621"/><stop offset="0.695" stop-color="#ff021f"/><stop offset="0.712" stop-color="#ff001d"/><stop offset="0.729" stop-color="#ff001b"/><stop offset="0.746" stop-color="#ff001a"/><stop offset="0.763" stop-color="#ff0018"/><stop offset="0.780" stop-color="#ff0017"/><stop offset="0.797" stop-color="#ff0015"/><stop offset="0.814" stop-color="#ff0014"/><stop offset="0.831" stop-color="#ff0013"/><stop offset="0.847" stop-color="#ff0012"/><stop offset="0.864" stop-color="#ff0011"/><stop offset="0.881" stop-color="#ff0010"/><stop offset="0.898" stop-color="#ff000e"/><stop offset="0.915" stop-color="#ff000d"/><stop offset="0.932" stop-color="#ff000d"/><stop offset="0.949" stop-color="#ff000c"/><stop offset="0.966" stop-color="#ff000b"/><stop offset="0.983" stop-color="#ff000a"/><stop offset="1.000" stop-color="#ff0009"/></linearGradient>
<linearGradient id="r16" gradientUnits="userSpaceOnUse" x1="19.0" y1="0" x2="253.0" y2="0"><stop offset="0.000" stop-color="#00ff9a"/><stop offset="0.017" stop-color="#00ff9c"/><stop offset="0.034" stop-color="#00ff9d"/><stop offset="0.051" stop-color="#00ff9f"/><stop offset="0.068" stop-color="#00ffa1"/><stop offset="0.085" stop-color="#00ffa3"/><stop offset="0.102" stop-color="#00ffa5"/><stop offset="0.119" stop-color="#00ffa7"/><stop offset="0.136" stop-color="#00ffaa"/><stop offset="0.153" stop-color="#00ffac"/><stop offset="0.169" stop-color="#00ffaf"/><stop offset="0.186" stop-color="#00ffb2"/><stop offset="0.203" stop-color="#00ffb5"/><stop offset="0.220" stop-color="#0bffb8"/><stop offset="0.237" stop-color="#31ffbb"/><stop offset="0.254" stop-color="#56ffbf"/><stop offset="0.271" stop-color="#7cffc3"/><stop offset="0.288" stop-color="#a4ffc8"/><stop offset="0.305" stop-color="#cfffcc"/><stop offset="0.322" stop-color="#fcffd1"/><stop offset="0.339" stop-color="#ffd9b7"/><stop offset="0.356" stop-color="#ffb9a0"/><stop offset="0.373" stop-color="#ff9f8e"/><stop offset="0.390" stop-color="#ff8a7f"/><stop offset="0.407" stop-color="#ff7973"/><stop offset="0.424" stop-color="#ff6a69"/><stop offset="0.441" stop-color="#ff5d60"/><stop offset="0.458" stop-color="#ff5258"/><stop offset="0.475" stop-color="#ff4852"/><stop offset="0.492" stop-color="#ff3f4c"/><stop offset="0.508" stop-color="#ff3747"/><stop offset="0.525" stop-color="#ff3042"/><stop offset="0.542" stop-color="#ff2a3d"/><stop offset="0.559" stop-color="#ff243a"/><stop offset="0.576" stop-color="#ff1f36"/><stop offset="0.593" stop-color="#ff1a33"/><stop offset="0.610" stop-color="#ff1530"/><stop offset="0.627" stop-color="#ff102d"/><stop offset="0.644" stop-color="#ff0c2a"/><stop offset="0.661" stop-color="#ff0828"/><stop offset="0.678" stop-color="#ff0426"/><stop offset="0.695" stop-color="#ff0024"/><stop offset="0.712" stop-color="#ff0022"/><stop offset="0.729" stop-color="#ff0020"/><stop offset="0.746" stop-color="#ff001e"/><stop offset="0.763" stop-color="#ff001d"/><stop offset="0.780" stop-color="#ff001b"/><stop offset="0.797" stop-color="#ff001a"/><stop offset="0.814" stop-color="#ff0018"/><stop offset="0.831" stop-color="#ff0017"/><stop offset="0.847" stop-color="#ff0016"/><stop offset="0.864" stop-color="#ff0014"/><stop offset="0.881" stop-color="#ff0013"/><stop offset="0.898" stop-color="#ff0012"/><stop offset="0.915" stop-color="#ff0011"/><stop offset="0.932" stop-color="#ff0010"/><stop offset="0.949" stop-color="#ff000f"/><stop offset="0.966" stop-color="#ff000e"/><stop offset="0.983" stop-color="#ff000d"/><stop offset="1.000" stop-color="#ff000c"/></linearGradient>
<linearGradient id="r17" gradientUnits="userSpaceOnUse" x1="19.5" y1="0" x2="253.0" y2="0"><stop offset="0.000" stop-color="#00ffa6"/><stop offset="0.017" stop-color="#00ffa8"/><stop offset="0.034" stop-color="#00ffaa"/><stop offset="0.051" stop-color="#00ffac"/><stop offset="0.068" stop-color="#00ffae"/><stop offset="0.085" stop-color="#00ffb0"/><stop offset="0.102" stop-color="#00ffb3"/><stop offset="0.119" stop-color="#00ffb5"/><stop offset="0.136" stop-color="#00ffb8"/><stop offset="0.153" stop-color="#00ffbb"/><stop offset="0.169" stop-color="#00ffbe"/><stop offset="0.186" stop-color="#00ffc2"/><stop offset="0.203" stop-color="#00ffc5"/><stop offset="0.220" stop-color="#0cffc9"/><stop offset="0.237" stop-color="#33ffcd"/><stop offset="0.254" stop-color="#59ffd2"/><stop offset="0.271" stop-color="#80ffd7"/><stop offset="0.288" stop-color="#a8ffdc"/><stop offset="0.305" stop-color="#d4ffe2"/><stop offset="0.322" stop-color="#fffce5"/><stop offset="0.339" stop-color="#ffd3c6"/><stop offset="0.356" stop-color="#ffb4ae"/><stop offset="0.373" stop-color="#ff9b9a"/><stop offset="0.390" stop-color="#ff868b"/><stop offset="0.407" stop-color="#ff757e"/><stop offset="0.424" stop-color="#ff6673"/><stop offset="0.441" stop-color="#ff5a69"/><stop offset="0.458" stop-color="#ff4f61"/><stop offset="0.475" stop-color="#ff455a"/><stop offset="0.492" stop-color="#ff3d53"/><stop offset="0.508" stop-color="#ff354e"/><stop offset="0.525" stop-color="#ff2e49"/><stop offset="0.542" stop-color="#ff2844"/><stop offset="0.559" stop-color="#ff2240"/><stop offset="0.576" stop-color="#ff1c3c"/><stop offset="0.593" stop-color="#ff1738"/><stop offset="0.610" stop-color="#ff1335"/><stop offset="0.627" stop-color="#ff0e32"/><stop offset="0.644" stop-color="#ff0a30"/><stop offset="0.661" stop-color="#ff062d"/><stop offset="0.678" stop-color="#ff022b"/><stop offset="0.695" stop-color="#ff0028"/><stop offset="0.712" stop-color="#ff0026"/><stop offset="0.729" stop-color="#ff0024"/><stop offset="0.746" stop-color="#ff0023"/><stop offset="0.763" stop-color="#ff0021"/><stop offset="0.780" stop-color="#ff001f"/><stop offset="0.797" stop-color="#ff001e"/><stop offset="0.814" stop-color="#ff001c"/><stop offset="0.831" stop-color="#ff001b"/><stop offset="0.847" stop-color="#ff0019"/><stop offset="0.864" stop-color="#ff0018"/><stop offset="0.881" stop-color="#ff0017"/><stop offset="0.898" stop-color="#ff0016"/><stop offset="0.915" stop-color="#ff0015"/><stop offset="0.932" stop-color="#ff0014"/><stop offset="0.949" stop-color="#ff0012"/><stop offset="0.966" stop-color="#ff0012"/><stop offset="0.983" stop-color="#ff0011"/><stop offset="1.000" stop-color="#ff0010"/></linearGradient>
<linearGradient id="r18" gradientUnits="userSpaceOnUse" x1="20.0" y1="0" x2="252.0" y2="0"><stop offset="0.000" stop-color="#00ffb1"/><stop offset="0.017" stop-color="#00ffb4"/><stop offset="0.034" stop-color="#00ffb6"/><stop offset="0.052" stop-color="#00ffb9"/><stop offset="0.069" stop-color="#00ffbb"/><stop offset="0.086" stop-color="#00ffbe"/><stop offset="0.103" stop-color="#00ffc1"/><stop offset="0.121" stop-color="#00ffc4"/><stop offset="0.138" stop-color="#00ffc8"/><stop offset="0.155" stop-color="#00ffcb"/><stop offset="0.172" stop-color="#00ffcf"/><stop offset="0.190" stop-color="#00ffd3"/><stop offset="0.207" stop-color="#00ffd7"/><stop offset="0.224" stop-color="#14ffdc"/><stop offset="0.241" stop-color="#3bffe1"/><stop offset="0.259" stop-color="#62ffe6"/><stop offset="0.276" stop-color="#8bffec"/><stop offset="0.293" stop-color="#b6fff3"/><stop offset="0.310" stop-color="#e4fffa"/><stop offset="0.328" stop-color="#ffebed"/><stop offset="0.345" stop-color="#ffc5cd"/><stop offset="0.362" stop-color="#ffa8b5"/><stop offset="0.379" stop-color="#ff90a1"/><stop offset="0.397" stop-color="#ff7d91"/><stop offset="0.414" stop-color="#ff6d84"/><stop offset="0.431" stop-color="#ff5f79"/><stop offset="0.448" stop-color="#ff536f"/><stop offset="0.466" stop-color="#ff4966"/><stop offset="0.483" stop-color="#ff3f5f"/><stop offset="0.500" stop-color="#ff3758"/><stop offset="0.517" stop-color="#ff3053"/><stop offset="0.534" stop-color="#ff294d"/><stop offset="0.552" stop-color="#ff2349"/><stop offset="0.569" stop-color="#ff1d44"/><stop offset="0.586" stop-color="#ff1840"/><stop offset="0.603" stop-color="#ff133d"/><stop offset="0.621" stop-color="#ff0f39"/><stop offset="0.638" stop-color="#ff0a36"/><stop offset="0.655" stop-color="#ff0633"/><stop offset="0.672" stop-color="#ff0231"/><stop offset="0.690" stop-color="#ff002e"/><stop offset="0.707" stop-color="#ff002c"/><stop offset="0.724" stop-color="#ff002a"/><stop offset="0.741" stop-color="#ff0028"/><stop offset="0.759" stop-color="#ff0026"/><stop offset="0.776" stop-color="#ff0024"/><stop offset="0.793" stop-color="#ff0022"/><stop offset="0.810" stop-color="#ff0021"/><stop offset="0.828" stop-color="#ff001f"/><stop offset="0.845" stop-color="#ff001e"/><stop offset="0.862" stop-color="#ff001c"/><stop offset="0.879" stop-color="#ff001b"/><stop offset="0.897" stop-color="#ff001a"/><stop offset="0.914" stop-color="#ff0018"/><stop offset="0.931" stop-color="#ff0017"/><stop offset="0.948" stop-color="#ff0016"/><stop offset="0.966" stop-color="#ff0015"/><stop offset="0.983" stop-color="#ff0014"/><stop offset="1.000" stop-color="#ff0013"/></linearGradient>
<linearGradient id="r19" gradientUnits="userSpaceOnUse" x1="21.0" y1="0" x2="250.0" y2="0"><stop offset="0.000" stop-color="#00ffbe"/><stop offset="0.017" stop-color="#00ffc1"/><stop offset="0.034" stop-color="#00ffc3"/><stop offset="0.052" stop-color="#00ffc6"/><stop offset="0.069" stop-color="#00ffc9"/><stop offset="0.086" stop-color="#00ffcc"/><stop offset="0.103" stop-color="#00ffd0"/><stop offset="0.121" stop-color="#00ffd3"/><stop offset="0.138" stop-color="#00ffd7"/><stop offset="0.155" stop-color="#00ffdb"/><stop offset="0.172" stop-color="#00ffe0"/><stop offset="0.190" stop-color="#00ffe4"/><stop offset="0.207" stop-color="#00ffe9"/><stop offset="0.224" stop-color="#14ffef"/><stop offset="0.241" stop-color="#3cfff4"/><stop offset="0.259" stop-color="#64fffb"/><stop offset="0.276" stop-color="#8bfdff"/><stop offset="0.293" stop-color="#b1f6ff"/><stop offset="0.310" stop-color="#d7eeff"/><stop offset="0.328" stop-color="#fee7ff"/><stop offset="0.345" stop-color="#ffc3de"/><stop offset="0.362" stop-color="#ffa6c4"/><stop offset="0.379" stop-color="#ff8faf"/><stop offset="0.397" stop-color="#ff7b9e"/><stop offset="0.414" stop-color="#ff6b90"/><stop offset="0.431" stop-color="#ff5e84"/><stop offset="0.448" stop-color="#ff5279"/><stop offset="0.466" stop-color="#ff4770"/><stop offset="0.483" stop-color="#ff3e68"/><stop offset="0.500" stop-color="#ff3661"/><stop offset="0.517" stop-color="#ff2f5b"/><stop offset="0.534" stop-color="#ff2855"/><stop offset="0.552" stop-color="#ff2250"/><stop offset="0.569" stop-color="#ff1c4b"/><stop offset="0.586" stop-color="#ff1747"/><stop offset="0.603" stop-color="#ff1243"/><stop offset="0.621" stop-color="#ff0e40"/><stop offset="0.638" stop-color="#ff093c"/><stop offset="0.655" stop-color="#ff0539"/><stop offset="0.672" stop-color="#ff0136"/><stop offset="0.690" stop-color="#ff0034"/><stop offset="0.707" stop-color="#ff0031"/><stop offset="0.724" stop-color="#ff002f"/><stop offset="0.741" stop-color="#ff002d"/><stop offset="0.759" stop-color="#ff002b"/><stop offset="0.776" stop-color="#ff0029"/><stop offset="0.793" stop-color="#ff0027"/><stop offset="0.810" stop-color="#ff0025"/><stop offset="0.828" stop-color="#ff0024"/><stop offset="0.845" stop-color="#ff0022"/><stop offset="0.862" stop-color="#ff0020"/><stop offset="0.879" stop-color="#ff001f"/><stop offset="0.897" stop-color="#ff001e"/><stop offset="0.914" stop-color="#ff001c"/><stop offset="0.931" stop-color="#ff001b"/><stop offset="0.948" stop-color="#ff001a"/><stop offset="0.966" stop-color="#ff0019"/><stop offset="0.983" stop-color="#ff0018"/><stop offset="1.000" stop-color="#ff0017"/></linearGradient>
<linearGradient id="r20" gradientUnits="userSpaceOnUse" x1="21.5" y1="0" x2="248.0" y2="0"><stop offset="0.000" stop-color="#00ffca"/><stop offset="0.018" stop-color="#00ffcd"/><stop offset="0.035" stop-color="#00ffd1"/><stop offset="0.053" stop-color="#00ffd4"/><stop offset="0.070" stop-color="#00ffd7"/><stop offset="0.088" stop-color="#00ffdb"/><stop offset="0.105" stop-color="#00ffdf"/><stop offset="0.123" stop-color="#00ffe3"/><stop offset="0.140" stop-color="#00ffe8"/><stop offset="0.158" stop-color="#00ffec"/><stop offset="0.175" stop-color="#00fff1"/><stop offset="0.193" stop-color="#00fff7"/><stop offset="0.211" stop-color="#00fffd"/><stop offset="0.228" stop-color="#1afbff"/><stop offset="0.246" stop-color="#40f5ff"/><stop offset="0.263" stop-color="#65eeff"/><stop offset="0.281" stop-color="#89e8ff"/><stop offset="0.298" stop-color="#ace1ff"/><stop offset="0.316" stop-color="#d0daff"/><stop offset="0.333" stop-color="#f4d2ff"/><stop offset="0.351" stop-color="#ffb8e8"/><stop offset="0.368" stop-color="#ff9dcd"/><stop offset="0.386" stop-color="#ff86b7"/><stop offset="0.404" stop-color="#ff74a6"/><stop offset="0.421" stop-color="#ff6597"/><stop offset="0.439" stop-color="#ff588a"/><stop offset="0.456" stop-color="#ff4c80"/><stop offset="0.474" stop-color="#ff4276"/><stop offset="0.491" stop-color="#ff396e"/><stop offset="0.509" stop-color="#ff3167"/><stop offset="0.526" stop-color="#ff2a60"/><stop offset="0.544" stop-color="#ff245a"/><stop offset="0.561" stop-color="#ff1e55"/><stop offset="0.579" stop-color="#ff1950"/><stop offset="0.596" stop-color="#ff134c"/><stop offset="0.614" stop-color="#ff0f48"/><stop offset="0.632" stop-color="#ff0a44"/><stop offset="0.649" stop-color="#ff0640"/><stop offset="0.667" stop-color="#ff023d"/><stop offset="0.684" stop-color="#ff003a"/><stop offset="0.702" stop-color="#ff0037"/><stop offset="0.719" stop-color="#ff0035"/><stop offset="0.737" stop-color="#ff0032"/><stop offset="0.754" stop-color="#ff0030"/><stop offset="0.772" stop-color="#ff002e"/><stop offset="0.789" stop-color="#ff002c"/><stop offset="0.807" stop-color="#ff002a"/><stop offset="0.825" stop-color="#ff0028"/><stop offset="0.842" stop-color="#ff0027"/><stop offset="0.860" stop-color="#ff0025"/><stop offset="0.877" stop-color="#ff0023"/><stop offset="0.895" stop-color="#ff0022"/><stop offset="0.912" stop-color="#ff0021"/><stop offset="0.930" stop-color="#ff001f"/><stop offset="0.947" stop-color="#ff001e"/><stop offset="0.965" stop-color="#ff001d"/><stop offset="0.982" stop-color="#ff001c"/><stop offset="1.000" stop-color="#ff001a"/></linearGradient>
<linearGradient id="r21" gradientUnits="userSpaceOnUse" x1="22.0" y1="0" x2="246.5" y2="0"><stop offset="0.000" stop-color="#00ffd7"/><stop offset="0.018" stop-color="#00ffdb"/><stop offset="0.035" stop-color="#00ffde"/><stop offset="0.053" stop-color="#00ffe2"/><stop offset="0.070" stop-color="#00ffe6"/><stop offset="0.088" stop-color="#00ffea"/><stop offset="0.105" stop-color="#00ffee"/><stop offset="0.123" stop-color="#00fff3"/><stop offset="0.140" stop-color="#00fff8"/><stop offset="0.158" stop-color="#00fffd"/><stop offset="0.175" stop-color="#00fbff"/><stop offset="0.193" stop-color="#00f6ff"/><stop offset="0.211" stop-color="#00f0ff"/><stop offset="0.228" stop-color="#16eaff"/><stop offset="0.246" stop-color="#3ae3ff"/><stop offset="0.263" stop-color="#5cddff"/><stop offset="0.281" stop-color="#7ed7ff"/><stop offset="0.298" stop-color="#9fd0ff"/><stop offset="0.316" stop-color="#c1c9ff"/><stop offset="0.333" stop-color="#e2c2ff"/><stop offset="0.351" stop-color="#ffb7fa"/><stop offset="0.368" stop-color="#ff9bdd"/><stop offset="0.386" stop-color="#ff85c6"/><stop offset="0.404" stop-color="#ff73b3"/><stop offset="0.421" stop-color="#ff63a3"/><stop offset="0.439" stop-color="#ff5695"/><stop offset="0.456" stop-color="#ff4b8a"/><stop offset="0.474" stop-color="#ff4180"/><stop offset="0.491" stop-color="#ff3877"/><stop offset="0.509" stop-color="#ff306f"/><stop offset="0.526" stop-color="#ff2968"/><stop offset="0.544" stop-color="#ff2362"/><stop offset="0.561" stop-color="#ff1d5c"/><stop offset="0.579" stop-color="#ff1757"/><stop offset="0.596" stop-color="#ff1252"/><stop offset="0.614" stop-color="#ff0e4e"/><stop offset="0.632" stop-color="#ff094a"/><stop offset="0.649" stop-color="#ff0546"/><stop offset="0.667" stop-color="#ff0043"/><stop offset="0.684" stop-color="#ff0040"/><stop offset="0.702" stop-color="#ff003d"/><stop offset="0.719" stop-color="#ff003a"/><stop offset="0.737" stop-color="#ff0038"/><stop offset="0.754" stop-color="#ff0035"/><stop offset="0.772" stop-color="#ff0033"/><stop offset="0.789" stop-color="#ff0031"/><stop offset="0.807" stop-color="#ff002f"/><stop offset="0.825" stop-color="#ff002d"/><stop offset="0.842" stop-color="#ff002b"/><stop offset="0.860" stop-color="#ff0029"/><stop offset="0.877" stop-color="#ff0028"/><stop offset="0.895" stop-color="#ff0026"/><stop offset="0.912" stop-color="#ff0025"/><stop offset="0.930" stop-color="#ff0023"/><stop offset="0.947" stop-color="#ff0022"/><stop offset="0.965" stop-color="#ff0020"/><stop offset="0.982" stop-color="#ff001f"/><stop offset="1.000" stop-color="#ff001e"/></linearGradient>
<linearGradient id="r22" gradientUnits="userSpaceOnUse" x1="23.0" y1="0" x2="244.5" y2="0"><stop offset="0.000" stop-color="#00ffe5"/><stop offset="0.018" stop-color="#00ffe9"/><stop offset="0.036" stop-color="#00ffed"/><stop offset="0.054" stop-color="#00fff1"/><stop offset="0.071" stop-color="#00fff5"/><stop offset="0.089" stop-color="#00fffa"/><stop offset="0.107" stop-color="#00ffff"/><stop offset="0.125" stop-color="#00faff"/><stop offset="0.143" stop-color="#00f4ff"/><stop offset="0.161" stop-color="#00efff"/><stop offset="0.179" stop-color="#00e9ff"/><stop offset="0.196" stop-color="#00e4ff"/><stop offset="0.214" stop-color="#00deff"/><stop offset="0.232" stop-color="#1dd8ff"/><stop offset="0.250" stop-color="#3ed2ff"/><stop offset="0.268" stop-color="#5fccff"/><stop offset="0.286" stop-color="#7fc5ff"/><stop offset="0.304" stop-color="#9fbfff"/><stop offset="0.321" stop-color="#bfb8ff"/><stop offset="0.339" stop-color="#deb1ff"/><stop offset="0.357" stop-color="#feaaff"/><stop offset="0.375" stop-color="#ff90e3"/><stop offset="0.393" stop-color="#ff7ccc"/><stop offset="0.411" stop-color="#ff6bb9"/><stop offset="0.429" stop-color="#ff5ca9"/><stop offset="0.446" stop-color="#ff509b"/><stop offset="0.464" stop-color="#ff458f"/><stop offset="0.482" stop-color="#ff3b85"/><stop offset="0.500" stop-color="#ff337c"/><stop offset="0.518" stop-color="#ff2b74"/><stop offset="0.536" stop-color="#ff256d"/><stop offset="0.554" stop-color="#ff1e66"/><stop offset="0.571" stop-color="#ff1961"/><stop offset="0.589" stop-color="#ff135b"/><stop offset="0.607" stop-color="#ff0e56"/><stop offset="0.625" stop-color="#ff0a52"/><stop offset="0.643" stop-color="#ff054e"/><stop offset="0.661" stop-color="#ff014a"/><stop offset="0.679" stop-color="#ff0047"/><stop offset="0.696" stop-color="#ff0043"/><stop offset="0.714" stop-color="#ff0040"/><stop offset="0.732" stop-color="#ff003e"/><stop offset="0.750" stop-color="#ff003b"/><stop offset="0.768" stop-color="#ff0038"/><stop offset="0.786" stop-color="#ff0036"/><stop offset="0.804" stop-color="#ff0034"/><stop offset="0.821" stop-color="#ff0032"/><stop offset="0.839" stop-color="#ff0030"/><stop offset="0.857" stop-color="#ff002e"/><stop offset="0.875" stop-color="#ff002c"/><stop offset="0.893" stop-color="#ff002a"/><stop offset="0.911" stop-color="#ff0029"/><stop offset="0.929" stop-color="#ff0027"/><stop offset="0.946" stop-color="#ff0026"/><stop offset="0.964" stop-color="#ff0024"/><stop offset="0.982" stop-color="#ff0023"/><stop offset="1.000" stop-color="#ff0022"/></linearGradient>
<linearGradient id="r23" gradientUnits="userSpaceOnUse" x1="23.5" y1="0" x2="242.5" y2="0"><stop offset="0.000" stop-color="#00fff3"/><stop offset="0.018" stop-color="#00fff7"/><stop offset="0.036" stop-color="#00fffb"/><stop offset="0.055" stop-color="#00feff"/><stop offset="0.073" stop-color="#00f9ff"/><stop offset="0.091" stop-color="#00f4ff"/><stop offset="0.109" stop-color="#00efff"/><stop offset="0.127" stop-color="#00eaff"/><stop offset="0.145" stop-color="#00e5ff"/><stop offset="0.164" stop-color="#00dfff"/><stop offset="0.182" stop-color="#00daff"/><stop offset="0.200" stop-color="#00d4ff"/><stop offset="0.218" stop-color="#00ceff"/><stop offset="0.236" stop-color="#20c9ff"/><stop offset="0.255" stop-color="#40c3ff"/><stop offset="0.273" stop-color="#5fbcff"/><stop offset="0.291" stop-color="#7db6ff"/><stop offset="0.309" stop-color="#9cafff"/><stop offset="0.327" stop-color="#baa9ff"/><stop offset="0.345" stop-color="#d8a2ff"/><stop offset="0.364" stop-color="#f79bff"/><stop offset="0.382" stop-color="#ff88ea"/><stop offset="0.400" stop-color="#ff74d3"/><stop offset="0.418" stop-color="#ff64bf"/><stop offset="0.436" stop-color="#ff56af"/><stop offset="0.455" stop-color="#ff4aa1"/><stop offset="0.473" stop-color="#ff3f95"/><stop offset="0.491" stop-color="#ff368a"/><stop offset="0.509" stop-color="#ff2e81"/><stop offset="0.527" stop-color="#ff2779"/><stop offset="0.545" stop-color="#ff2072"/><stop offset="0.564" stop-color="#ff1a6b"/><stop offset="0.582" stop-color="#ff1565"/><stop offset="0.600" stop-color="#ff1060"/><stop offset="0.618" stop-color="#ff0b5b"/><stop offset="0.636" stop-color="#ff0656"/><stop offset="0.655" stop-color="#ff0152"/><stop offset="0.673" stop-color="#ff004e"/><stop offset="0.691" stop-color="#ff004a"/><stop offset="0.709" stop-color="#ff0047"/><stop offset="0.727" stop-color="#ff0044"/><stop offset="0.745" stop-color="#ff0041"/><stop offset="0.764" stop-color="#ff003e"/><stop offset="0.782" stop-color="#ff003c"/><stop offset="0.800" stop-color="#ff0039"/><stop offset="0.818" stop-color="#ff0037"/><stop offset="0.836" stop-color="#ff0035"/><stop offset="0.855" stop-color="#ff0033"/><stop offset="0.873" stop-color="#ff0031"/><stop offset="0.891" stop-color="#ff002f"/><stop offset="0.909" stop-color="#ff002d"/><stop offset="0.927" stop-color="#ff002c"/><stop offset="0.945" stop-color="#ff002a"/><stop offset="0.964" stop-color="#ff0028"/><stop offset="0.982" stop-color="#ff0027"/><stop offset="1.000" stop-color="#ff0026"/></linearGradient>
<linearGradient id="r24" gradientUnits="userSpaceOnUse" x1="24.5" y1="0" x2="240.5" y2="0"><stop offset="0.000" stop-color="#00fdff"/><stop offset="0.019" stop-color="#00f8ff"/><stop offset="0.037" stop-color="#00f4ff"/><stop offset="0.056" stop-color="#00efff"/><stop offset="0.074" stop-color="#00eaff"/><stop offset="0.093" stop-color="#00e5ff"/><stop offset="0.111" stop-color="#00e0ff"/><stop offset="0.130" stop-color="#00dbff"/><stop offset="0.148" stop-color="#00d6ff"/><stop offset="0.167" stop-color="#00d1ff"/><stop offset="0.185" stop-color="#00cbff"/><stop offset="0.204" stop-color="#00c5ff"/><stop offset="0.222" stop-color="#04c0ff"/><stop offset="0.241" stop-color="#25baff"/><stop offset="0.259" stop-color="#44b4ff"/><stop offset="0.278" stop-color="#61aeff"/><stop offset="0.296" stop-color="#7fa8ff"/><stop offset="0.315" stop-color="#9ca1ff"/><stop offset="0.333" stop-color="#b89bff"/><stop offset="0.352" stop-color="#d594ff"/><stop offset="0.370" stop-color="#f38dff"/><stop offset="0.389" stop-color="#ff7eef"/><stop offset="0.407" stop-color="#ff6bd8"/><stop offset="0.426" stop-color="#ff5cc4"/><stop offset="0.444" stop-color="#ff4fb4"/><stop offset="0.463" stop-color="#ff43a6"/><stop offset="0.481" stop-color="#ff3a9a"/><stop offset="0.500" stop-color="#ff318f"/><stop offset="0.519" stop-color="#ff2986"/><stop offset="0.537" stop-color="#ff227d"/><stop offset="0.556" stop-color="#ff1c76"/><stop offset="0.574" stop-color="#ff166f"/><stop offset="0.593" stop-color="#ff1169"/><stop offset="0.611" stop-color="#ff0c64"/><stop offset="0.630" stop-color="#ff075e"/><stop offset="0.648" stop-color="#ff025a"/><stop offset="0.667" stop-color="#ff0055"/><stop offset="0.685" stop-color="#ff0052"/><stop offset="0.704" stop-color="#ff004e"/><stop offset="0.722" stop-color="#ff004a"/><stop offset="0.741" stop-color="#ff0047"/><stop offset="0.759" stop-color="#ff0044"/><stop offset="0.778" stop-color="#ff0041"/><stop offset="0.796" stop-color="#ff003f"/><stop offset="0.815" stop-color="#ff003c"/><stop offset="0.833" stop-color="#ff003a"/><stop offset="0.852" stop-color="#ff0038"/><stop offset="0.870" stop-color="#ff0036"/><stop offset="0.889" stop-color="#ff0034"/><stop offset="0.907" stop-color="#ff0032"/><stop offset="0.926" stop-color="#ff0030"/><stop offset="0.944" stop-color="#ff002e"/><stop offset="0.963" stop-color="#ff002c"/><stop offset="0.981" stop-color="#ff002b"/><stop offset="1.000" stop-color="#ff0029"/></linearGradient>
<linearGradient id="r25" gradientUnits="userSpaceOnUse" x1="25.0" y1="0" x2="238.5" y2="0"><stop offset="0.000" stop-color="#00f0ff"/><stop offset="0.019" stop-color="#00ebff"/><stop offset="0.037" stop-color="#00e7ff"/><stop offset="0.056" stop-color="#00e2ff"/><stop offset="0.074" stop-color="#00ddff"/><stop offset="0.093" stop-color="#00d8ff"/><stop offset="0.111" stop-color="#00d4ff"/><stop offset="0.130" stop-color="#00cfff"/><stop offset="0.148" stop-color="#00c9ff"/><stop offset="0.167" stop-color="#00c4ff"/><stop offset="0.185" stop-color="#00bfff"/><stop offset="0.204" stop-color="#00baff"/><stop offset="0.222" stop-color="#00b4ff"/><stop offset="0.241" stop-color="#21aeff"/><stop offset="0.259" stop-color="#3ea9ff"/><stop offset="0.278" stop-color="#5aa3ff"/><stop offset="0.296" stop-color="#759dff"/><stop offset="0.315" stop-color="#9097ff"/><stop offset="0.333" stop-color="#ac90ff"/><stop offset="0.352" stop-color="#c78aff"/><stop offset="0.370" stop-color="#e283ff"/><stop offset="0.389" stop-color="#fe7dff"/><stop offset="0.407" stop-color="#ff6be7"/><stop offset="0.426" stop-color="#ff5bd2"/><stop offset="0.444" stop-color="#ff4ec1"/><stop offset="0.463" stop-color="#ff43b2"/><stop offset="0.481" stop-color="#ff39a5"/><stop offset="0.500" stop-color="#ff3099"/><stop offset="0.519" stop-color="#ff288f"/><stop offset="0.537" stop-color="#ff2186"/><stop offset="0.556" stop-color="#ff1b7e"/><stop offset="0.574" stop-color="#ff1577"/><stop offset="0.593" stop-color="#ff1071"/><stop offset="0.611" stop-color="#ff0b6b"/><stop offset="0.630" stop-color="#ff0666"/><stop offset="0.648" stop-color="#ff0161"/><stop offset="0.667" stop-color="#ff005c"/><stop offset="0.685" stop-color="#ff0058"/><stop offset="0.704" stop-color="#ff0054"/><stop offset="0.722" stop-color="#ff0050"/><stop offset="0.741" stop-color="#ff004d"/><stop offset="0.759" stop-color="#ff004a"/><stop offset="0.778" stop-color="#ff0047"/><stop offset="0.796" stop-color="#ff0044"/><stop offset="0.815" stop-color="#ff0041"/><stop offset="0.833" stop-color="#ff003f"/><stop offset="0.852" stop-color="#ff003c"/><stop offset="0.870" stop-color="#ff003a"/><stop offset="0.889" stop-color="#ff0038"/><stop offset="0.907" stop-color="#ff0036"/><stop offset="0.926" stop-color="#ff0034"/><stop offset="0.944" stop-color="#ff0032"/><stop offset="0.963" stop-color="#ff0031"/><stop offset="0.981" stop-color="#ff002f"/><stop offset="1.000" stop-color="#ff002d"/></linearGradient>
<linearGradient id="r26" gradientUnits="userSpaceOnUse" x1="26.0" y1="0" x2="236.5" y2="0"><stop offset="0.000" stop-color="#00e3ff"/><stop offset="0.019" stop-color="#00deff"/><stop offset="0.038" stop-color="#00daff"/><stop offset="0.057" stop-color="#00d5ff"/><stop offset="0.075" stop-color="#00d0ff"/><stop offset="0.094" stop-color="#00ccff"/><stop offset="0.113" stop-color="#00c7ff"/><stop offset="0.132" stop-color="#00c2ff"/><stop offset="0.151" stop-color="#00bdff"/><stop offset="0.170" stop-color="#00b8ff"/><stop offset="0.189" stop-color="#00b2ff"/><stop offset="0.208" stop-color="#00adff"/><stop offset="0.226" stop-color="#08a8ff"/><stop offset="0.245" stop-color="#26a2ff"/><stop offset="0.264" stop-color="#419cff"/><stop offset="0.283" stop-color="#5c97ff"/><stop offset="0.302" stop-color="#7791ff"/><stop offset="0.321" stop-color="#918bff"/><stop offset="0.340" stop-color="#ab84ff"/><stop offset="0.358" stop-color="#c57eff"/><stop offset="0.377" stop-color="#df78ff"/><stop offset="0.396" stop-color="#fa71ff"/><stop offset="0.415" stop-color="#ff62eb"/><stop offset="0.434" stop-color="#ff53d7"/><stop offset="0.453" stop-color="#ff47c5"/><stop offset="0.472" stop-color="#ff3cb6"/><stop offset="0.491" stop-color="#ff33a9"/><stop offset="0.509" stop-color="#ff2b9e"/><stop offset="0.528" stop-color="#ff2393"/><stop offset="0.547" stop-color="#ff1c8a"/><stop offset="0.566" stop-color="#ff1682"/><stop offset="0.585" stop-color="#ff117b"/><stop offset="0.604" stop-color="#ff0b75"/><stop offset="0.623" stop-color="#ff066f"/><stop offset="0.642" stop-color="#ff0169"/><stop offset="0.660" stop-color="#ff0064"/><stop offset="0.679" stop-color="#ff005f"/><stop offset="0.698" stop-color="#ff005b"/><stop offset="0.717" stop-color="#ff0057"/><stop offset="0.736" stop-color="#ff0053"/><stop offset="0.755" stop-color="#ff0050"/><stop offset="0.774" stop-color="#ff004d"/><stop offset="0.792" stop-color="#ff004a"/><stop offset="0.811" stop-color="#ff0047"/><stop offset="0.830" stop-color="#ff0044"/><stop offset="0.849" stop-color="#ff0042"/><stop offset="0.868" stop-color="#ff003f"/><stop offset="0.887" stop-color="#ff003d"/><stop offset="0.906" stop-color="#ff003b"/><stop offset="0.925" stop-color="#ff0039"/><stop offset="0.943" stop-color="#ff0037"/><stop offset="0.962" stop-color="#ff0035"/><stop offset="0.981" stop-color="#ff0033"/><stop offset="1.000" stop-color="#ff0031"/></linearGradient>
<linearGradient id="r27" gradientUnits="userSpaceOnUse" x1="26.5" y1="0" x2="234.5" y2="0"><stop offset="0.000" stop-color="#00d7ff"/><stop offset="0.019" stop-color="#00d3ff"/><stop offset="0.038" stop-color="#00ceff"/><stop offset="0.058" stop-color="#00caff"/><stop offset="0.077" stop-color="#00c5ff"/><stop offset="0.096" stop-color="#00c0ff"/><stop offset="0.115" stop-color="#00bbff"/><stop offset="0.135" stop-color="#00b7ff"/><stop offset="0.154" stop-color="#00b2ff"/><stop offset="0.173" stop-color="#00adff"/><stop offset="0.192" stop-color="#00a7ff"/><stop offset="0.212" stop-color="#00a2ff"/><stop offset="0.231" stop-color="#0c9dff"/><stop offset="0.250" stop-color="#2897ff"/><stop offset="0.269" stop-color="#4392ff"/><stop offset="0.288" stop-color="#5c8cff"/><stop offset="0.308" stop-color="#7686ff"/><stop offset="0.327" stop-color="#8f80ff"/><stop offset="0.346" stop-color="#a87aff"/><stop offset="0.365" stop-color="#c174ff"/><stop offset="0.385" stop-color="#db6dff"/><stop offset="0.404" stop-color="#f467ff"/><stop offset="0.423" stop-color="#ff5bf1"/><stop offset="0.442" stop-color="#ff4ddc"/><stop offset="0.462" stop-color="#ff41ca"/><stop offset="0.481" stop-color="#ff37bb"/><stop offset="0.500" stop-color="#ff2eae"/><stop offset="0.519" stop-color="#ff26a2"/><stop offset="0.538" stop-color="#ff1f98"/><stop offset="0.558" stop-color="#ff188f"/><stop offset="0.577" stop-color="#ff1287"/><stop offset="0.596" stop-color="#ff0d7f"/><stop offset="0.615" stop-color="#ff0779"/><stop offset="0.635" stop-color="#ff0272"/><stop offset="0.654" stop-color="#ff006d"/><stop offset="0.673" stop-color="#ff0068"/><stop offset="0.692" stop-color="#ff0063"/><stop offset="0.712" stop-color="#ff005f"/><stop offset="0.731" stop-color="#ff005a"/><stop offset="0.750" stop-color="#ff0057"/><stop offset="0.769" stop-color="#ff0053"/><stop offset="0.788" stop-color="#ff0050"/><stop offset="0.808" stop-color="#ff004d"/><stop offset="0.827" stop-color="#ff004a"/><stop offset="0.846" stop-color="#ff0047"/><stop offset="0.865" stop-color="#ff0044"/><stop offset="0.885" stop-color="#ff0042"/><stop offset="0.904" stop-color="#ff0040"/><stop offset="0.923" stop-color="#ff003d"/><stop offset="0.942" stop-color="#ff003b"/><stop offset="0.962" stop-color="#ff0039"/><stop offset="0.981" stop-color="#ff0037"/><stop offset="1.000" stop-color="#ff0035"/></linearGradient>
<linearGradient id="r28" gradientUnits="userSpaceOnUse" x1="27.5" y1="0" x2="232.5" y2="0"><stop offset="0.000" stop-color="#00ccff"/><stop offset="0.019" stop-color="#00c7ff"/><stop offset="0.038" stop-color="#00c3ff"/><stop offset="0.058" stop-color="#00bfff"/><stop offset="0.077" stop-color="#00baff"/><stop offset="0.096" stop-color="#00b6ff"/><stop offset="0.115" stop-color="#00b1ff"/><stop offset="0.135" stop-color="#00acff"/><stop offset="0.154" stop-color="#00a7ff"/><stop offset="0.173" stop-color="#00a3ff"/><stop offset="0.192" stop-color="#009eff"/><stop offset="0.212" stop-color="#0098ff"/><stop offset="0.231" stop-color="#0b93ff"/><stop offset="0.250" stop-color="#268eff"/><stop offset="0.269" stop-color="#3f89ff"/><stop offset="0.288" stop-color="#5883ff"/><stop offset="0.308" stop-color="#707dff"/><stop offset="0.327" stop-color="#8878ff"/><stop offset="0.346" stop-color="#9f72ff"/><stop offset="0.365" stop-color="#b76cff"/><stop offset="0.385" stop-color="#cf66ff"/><stop offset="0.404" stop-color="#e75fff"/><stop offset="0.423" stop-color="#ff59ff"/><stop offset="0.442" stop-color="#ff4be9"/><stop offset="0.462" stop-color="#ff3fd6"/><stop offset="0.481" stop-color="#ff35c6"/><stop offset="0.500" stop-color="#ff2cb8"/><stop offset="0.519" stop-color="#ff24ac"/><stop offset="0.538" stop-color="#ff1da1"/><stop offset="0.558" stop-color="#ff1798"/><stop offset="0.577" stop-color="#ff118f"/><stop offset="0.596" stop-color="#ff0b87"/><stop offset="0.615" stop-color="#ff0680"/><stop offset="0.635" stop-color="#ff017a"/><stop offset="0.654" stop-color="#ff0074"/><stop offset="0.673" stop-color="#ff006e"/><stop offset="0.692" stop-color="#ff0069"/><stop offset="0.712" stop-color="#ff0065"/><stop offset="0.731" stop-color="#ff0060"/><stop offset="0.750" stop-color="#ff005c"/><stop offset="0.769" stop-color="#ff0059"/><stop offset="0.788" stop-color="#ff0055"/><stop offset="0.808" stop-color="#ff0052"/><stop offset="0.827" stop-color="#ff004f"/><stop offset="0.846" stop-color="#ff004c"/><stop offset="0.865" stop-color="#ff0049"/><stop offset="0.885" stop-color="#ff0047"/><stop offset="0.904" stop-color="#ff0044"/><stop offset="0.923" stop-color="#ff0042"/><stop offset="0.942" stop-color="#ff0040"/><stop offset="0.962" stop-color="#ff003e"/><stop offset="0.981" stop-color="#ff003c"/><stop offset="1.000" stop-color="#ff003a"/></linearGradient>
<linearGradient id="r29" gradientUnits="userSpaceOnUse" x1="28.5" y1="0" x2="230.5" y2="0"><stop offset="0.000" stop-color="#00c1ff"/><stop offset="0.020" stop-color="#00bdff"/><stop offset="0.039" stop-color="#00b9ff"/><stop offset="0.059" stop-color="#00b4ff"/><stop offset="0.078" stop-color="#00b0ff"/><stop offset="0.098" stop-color="#00abff"/><stop offset="0.118" stop-color="#00a7ff"/><stop offset="0.137" stop-color="#00a2ff"/><stop offset="0.157" stop-color="#009dff"/><stop offset="0.176" stop-color="#0098ff"/><stop offset="0.196" stop-color="#0093ff"/><stop offset="0.216" stop-color="#008eff"/><stop offset="0.235" stop-color="#1189ff"/><stop offset="0.255" stop-color="#2a84ff"/><stop offset="0.275" stop-color="#437fff"/><stop offset="0.294" stop-color="#5a79ff"/><stop offset="0.314" stop-color="#7174ff"/><stop offset="0.333" stop-color="#886eff"/><stop offset="0.353" stop-color="#9f68ff"/><stop offset="0.373" stop-color="#b662ff"/><stop offset="0.392" stop-color="#cd5cff"/><stop offset="0.412" stop-color="#e456ff"/><stop offset="0.431" stop-color="#fc50ff"/><stop offset="0.451" stop-color="#ff44ed"/><stop offset="0.471" stop-color="#ff39da"/><stop offset="0.490" stop-color="#ff2fca"/><stop offset="0.510" stop-color="#ff27bc"/><stop offset="0.529" stop-color="#ff1fb0"/><stop offset="0.549" stop-color="#ff18a5"/><stop offset="0.569" stop-color="#ff129b"/><stop offset="0.588" stop-color="#ff0c93"/><stop offset="0.608" stop-color="#ff078b"/><stop offset="0.627" stop-color="#ff0184"/><stop offset="0.647" stop-color="#ff007d"/><stop offset="0.667" stop-color="#ff0077"/><stop offset="0.686" stop-color="#ff0072"/><stop offset="0.706" stop-color="#ff006d"/><stop offset="0.725" stop-color="#ff0068"/><stop offset="0.745" stop-color="#ff0063"/><stop offset="0.765" stop-color="#ff005f"/><stop offset="0.784" stop-color="#ff005c"/><stop offset="0.804" stop-color="#ff0058"/><stop offset="0.824" stop-color="#ff0055"/><stop offset="0.843" stop-color="#ff0052"/><stop offset="0.863" stop-color="#ff004f"/><stop offset="0.882" stop-color="#ff004c"/><stop offset="0.902" stop-color="#ff0049"/><stop offset="0.922" stop-color="#ff0047"/><stop offset="0.941" stop-color="#ff0044"/><stop offset="0.961" stop-color="#ff0042"/><stop offset="0.980" stop-color="#ff0040"/><stop offset="1.000" stop-color="#ff003e"/></linearGradient>
<linearGradient id="r30" gradientUnits="userSpaceOnUse" x1="29.0" y1="0" x2="229.0" y2="0"><stop offset="0.000" stop-color="#00b8ff"/><stop offset="0.020" stop-color="#00b4ff"/><stop offset="0.040" stop-color="#00afff"/><stop offset="0.060" stop-color="#00abff"/><stop offset="0.080" stop-color="#00a7ff"/><stop offset="0.100" stop-color="#00a2ff"/><stop offset="0.120" stop-color="#009eff"/><stop offset="0.140" stop-color="#0099ff"/><stop offset="0.160" stop-color="#0094ff"/><stop offset="0.180" stop-color="#008fff"/><stop offset="0.200" stop-color="#008aff"/><stop offset="0.220" stop-color="#0085ff"/><stop offset="0.240" stop-color="#1480ff"/><stop offset="0.260" stop-color="#2d7bff"/><stop offset="0.280" stop-color="#4476ff"/><stop offset="0.300" stop-color="#5b70ff"/><stop offset="0.320" stop-color="#726bff"/><stop offset="0.340" stop-color="#8865ff"/><stop offset="0.360" stop-color="#9e5fff"/><stop offset="0.380" stop-color="#b55aff"/><stop offset="0.400" stop-color="#cb54ff"/><stop offset="0.420" stop-color="#e24dff"/><stop offset="0.440" stop-color="#f847ff"/><stop offset="0.460" stop-color="#ff3df0"/><stop offset="0.480" stop-color="#ff32de"/><stop offset="0.500" stop-color="#ff29cd"/><stop offset="0.520" stop-color="#ff21bf"/><stop offset="0.540" stop-color="#ff1ab3"/><stop offset="0.560" stop-color="#ff13a8"/><stop offset="0.580" stop-color="#ff0d9e"/><stop offset="0.600" stop-color="#ff0796"/><stop offset="0.620" stop-color="#ff028e"/><stop offset="0.640" stop-color="#ff0087"/><stop offset="0.660" stop-color="#ff0080"/><stop offset="0.680" stop-color="#ff007a"/><stop offset="0.700" stop-color="#ff0074"/><stop offset="0.720" stop-color="#ff006f"/><stop offset="0.740" stop-color="#ff006b"/><stop offset="0.760" stop-color="#ff0066"/><stop offset="0.780" stop-color="#ff0062"/><stop offset="0.800" stop-color="#ff005e"/><stop offset="0.820" stop-color="#ff005b"/><stop offset="0.840" stop-color="#ff0057"/><stop offset="0.860" stop-color="#ff0054"/><stop offset="0.880" stop-color="#ff0051"/><stop offset="0.900" stop-color="#ff004e"/><stop offset="0.920" stop-color="#ff004b"/><stop offset="0.940" stop-color="#ff0049"/><stop offset="0.960" stop-color="#ff0046"/><stop offset="0.980" stop-color="#ff0044"/><stop offset="1.000" stop-color="#ff0042"/></linearGradient>
<linearGradient id="r31" gradientUnits="userSpaceOnUse" x1="30.0" y1="0" x2="227.0" y2="0"><stop offset="0.000" stop-color="#00afff"/><stop offset="0.020" stop-color="#00abff"/><stop offset="0.040" stop-color="#00a6ff"/><stop offset="0.060" stop-color="#00a2ff"/><stop offset="0.080" stop-color="#009eff"/><stop offset="0.100" stop-color="#0099ff"/><stop offset="0.120" stop-color="#0095ff"/><stop offset="0.140" stop-color="#0091ff"/><stop offset="0.160" stop-color="#008cff"/><stop offset="0.180" stop-color="#0087ff"/><stop offset="0.200" stop-color="#0083ff"/><stop offset="0.220" stop-color="#007eff"/><stop offset="0.240" stop-color="#1479ff"/><stop offset="0.260" stop-color="#2b74ff"/><stop offset="0.280" stop-color="#416fff"/><stop offset="0.300" stop-color="#5769ff"/><stop offset="0.320" stop-color="#6c64ff"/><stop offset="0.340" stop-color="#825fff"/><stop offset="0.360" stop-color="#9759ff"/><stop offset="0.380" stop-color="#ac54ff"/><stop offset="0.400" stop-color="#c14eff"/><stop offset="0.420" stop-color="#d648ff"/><stop offset="0.440" stop-color="#ec42ff"/><stop offset="0.460" stop-color="#ff3bfd"/><stop offset="0.480" stop-color="#ff31e9"/><stop offset="0.500" stop-color="#ff28d9"/><stop offset="0.520" stop-color="#ff20ca"/><stop offset="0.540" stop-color="#ff18bd"/><stop offset="0.560" stop-color="#ff12b2"/><stop offset="0.580" stop-color="#ff0ca7"/><stop offset="0.600" stop-color="#ff069e"/><stop offset="0.620" stop-color="#ff0096"/><stop offset="0.640" stop-color="#ff008e"/><stop offset="0.660" stop-color="#ff0087"/><stop offset="0.680" stop-color="#ff0081"/><stop offset="0.700" stop-color="#ff007b"/><stop offset="0.720" stop-color="#ff0076"/><stop offset="0.740" stop-color="#ff0071"/><stop offset="0.760" stop-color="#ff006c"/><stop offset="0.780" stop-color="#ff0068"/><stop offset="0.800" stop-color="#ff0064"/><stop offset="0.820" stop-color="#ff0060"/><stop offset="0.840" stop-color="#ff005d"/><stop offset="0.860" stop-color="#ff0059"/><stop offset="0.880" stop-color="#ff0056"/><stop offset="0.900" stop-color="#ff0053"/><stop offset="0.920" stop-color="#ff0050"/><stop offset="0.940" stop-color="#ff004e"/><stop offset="0.960" stop-color="#ff004b"/><stop offset="0.980" stop-color="#ff0049"/><stop offset="1.000" stop-color="#ff0046"/></linearGradient>
<linearGradient id="r32" gradientUnits="userSpaceOnUse" x1="31.0" y1="0" x2="225.0" y2="0"><stop offset="0.000" stop-color="#00a6ff"/><stop offset="0.020" stop-color="#00a2ff"/><stop offset="0.041" stop-color="#009eff"/><stop offset="0.061" stop-color="#009aff"/><stop offset="0.082" stop-color="#0095ff"/><stop offset="0.102" stop-color="#0091ff"/><stop offset="0.122" stop-color="#008dff"/><stop offset="0.143" stop-color="#0088ff"/><stop offset="0.163" stop-color="#0084ff"/><stop offset="0.184" stop-color="#007fff"/><stop offset="0.204" stop-color="#007aff"/><stop offset="0.224" stop-color="#0075ff"/><stop offset="0.245" stop-color="#1871ff"/><stop offset="0.265" stop-color="#2f6cff"/><stop offset="0.286" stop-color="#4467ff"/><stop offset="0.306" stop-color="#5961ff"/><stop offset="0.327" stop-color="#6e5cff"/><stop offset="0.347" stop-color="#8357ff"/><stop offset="0.367" stop-color="#9751ff"/><stop offset="0.388" stop-color="#ac4cff"/><stop offset="0.408" stop-color="#c046ff"/><stop offset="0.429" stop-color="#d540ff"/><stop offset="0.449" stop-color="#e93aff"/><stop offset="0.469" stop-color="#fe34ff"/><stop offset="0.490" stop-color="#ff2aed"/><stop offset="0.510" stop-color="#ff22dc"/><stop offset="0.531" stop-color="#ff1acd"/><stop offset="0.551" stop-color="#ff13c0"/><stop offset="0.571" stop-color="#ff0db5"/><stop offset="0.592" stop-color="#ff07aa"/><stop offset="0.612" stop-color="#ff01a1"/><stop offset="0.633" stop-color="#ff0099"/><stop offset="0.653" stop-color="#ff0091"/><stop offset="0.673" stop-color="#ff008a"/><stop offset="0.694" stop-color="#ff0084"/><stop offset="0.714" stop-color="#ff007e"/><stop offset="0.735" stop-color="#ff0079"/><stop offset="0.755" stop-color="#ff0074"/><stop offset="0.776" stop-color="#ff006f"/><stop offset="0.796" stop-color="#ff006b"/><stop offset="0.816" stop-color="#ff0067"/><stop offset="0.837" stop-color="#ff0063"/><stop offset="0.857" stop-color="#ff005f"/><stop offset="0.878" stop-color="#ff005c"/><stop offset="0.898" stop-color="#ff0059"/><stop offset="0.918" stop-color="#ff0056"/><stop offset="0.939" stop-color="#ff0053"/><stop offset="0.959" stop-color="#ff0050"/><stop offset="0.980" stop-color="#ff004d"/><stop offset="1.000" stop-color="#ff004b"/></linearGradient>
<linearGradient id="r33" gradientUnits="userSpaceOnUse" x1="32.0" y1="0" x2="223.0" y2="0"><stop offset="0.000" stop-color="#009eff"/><stop offset="0.021" stop-color="#009aff"/><stop offset="0.042" stop-color="#0096ff"/><stop offset="0.062" stop-color="#0091ff"/><stop offset="0.083" stop-color="#008dff"/><stop offset="0.104" stop-color="#0089ff"/><stop offset="0.125" stop-color="#0085ff"/><stop offset="0.146" stop-color="#0080ff"/><stop offset="0.167" stop-color="#007cff"/><stop offset="0.188" stop-color="#0077ff"/><stop offset="0.208" stop-color="#0072ff"/><stop offset="0.229" stop-color="#056eff"/><stop offset="0.250" stop-color="#1d69ff"/><stop offset="0.271" stop-color="#3264ff"/><stop offset="0.292" stop-color="#475fff"/><stop offset="0.312" stop-color="#5b5aff"/><stop offset="0.333" stop-color="#6f55ff"/><stop offset="0.354" stop-color="#834fff"/><stop offset="0.375" stop-color="#974aff"/><stop offset="0.396" stop-color="#ab44ff"/><stop offset="0.417" stop-color="#bf3fff"/><stop offset="0.438" stop-color="#d339ff"/><stop offset="0.458" stop-color="#e733ff"/><stop offset="0.479" stop-color="#fb2dff"/><stop offset="0.500" stop-color="#ff24ef"/><stop offset="0.521" stop-color="#ff1cdf"/><stop offset="0.542" stop-color="#ff15d0"/><stop offset="0.562" stop-color="#ff0ec3"/><stop offset="0.583" stop-color="#ff08b8"/><stop offset="0.604" stop-color="#ff02ae"/><stop offset="0.625" stop-color="#ff00a4"/><stop offset="0.646" stop-color="#ff009c"/><stop offset="0.667" stop-color="#ff0094"/><stop offset="0.688" stop-color="#ff008d"/><stop offset="0.708" stop-color="#ff0087"/><stop offset="0.729" stop-color="#ff0081"/><stop offset="0.750" stop-color="#ff007b"/><stop offset="0.771" stop-color="#ff0076"/><stop offset="0.792" stop-color="#ff0072"/><stop offset="0.812" stop-color="#ff006d"/><stop offset="0.833" stop-color="#ff0069"/><stop offset="0.854" stop-color="#ff0065"/><stop offset="0.875" stop-color="#ff0062"/><stop offset="0.896" stop-color="#ff005e"/><stop offset="0.917" stop-color="#ff005b"/><stop offset="0.938" stop-color="#ff0058"/><stop offset="0.958" stop-color="#ff0055"/><stop offset="0.979" stop-color="#ff0052"/><stop offset="1.000" stop-color="#ff0050"/></linearGradient>
<linearGradient id="r34" gradientUnits="userSpaceOnUse" x1="33.0" y1="0" x2="221.0" y2="0"><stop offset="0.000" stop-color="#0096ff"/><stop offset="0.021" stop-color="#0092ff"/><stop offset="0.043" stop-color="#008eff"/><stop offset="0.064" stop-color="#008aff"/><stop offset="0.085" stop-color="#0086ff"/><stop offset="0.106" stop-color="#0081ff"/><stop offset="0.128" stop-color="#007dff"/><stop offset="0.149" stop-color="#0079ff"/><stop offset="0.170" stop-color="#0074ff"/><stop offset="0.191" stop-color="#0070ff"/><stop offset="0.213" stop-color="#006bff"/><stop offset="0.234" stop-color="#0b66ff"/><stop offset="0.255" stop-color="#2162ff"/><stop offset="0.277" stop-color="#355dff"/><stop offset="0.298" stop-color="#4a58ff"/><stop offset="0.319" stop-color="#5d53ff"/><stop offset="0.340" stop-color="#714dff"/><stop offset="0.362" stop-color="#8448ff"/><stop offset="0.383" stop-color="#9843ff"/><stop offset="0.404" stop-color="#ab3dff"/><stop offset="0.426" stop-color="#be38ff"/><stop offset="0.447" stop-color="#d232ff"/><stop offset="0.468" stop-color="#e52cff"/><stop offset="0.489" stop-color="#f926ff"/><stop offset="0.511" stop-color="#ff1ef2"/><stop offset="0.532" stop-color="#ff16e2"/><stop offset="0.553" stop-color="#ff0fd3"/><stop offset="0.574" stop-color="#ff09c6"/><stop offset="0.596" stop-color="#ff02bb"/><stop offset="0.617" stop-color="#ff00b0"/><stop offset="0.638" stop-color="#ff00a7"/><stop offset="0.660" stop-color="#ff009f"/><stop offset="0.681" stop-color="#ff0097"/><stop offset="0.702" stop-color="#ff0090"/><stop offset="0.723" stop-color="#ff008a"/><stop offset="0.745" stop-color="#ff0084"/><stop offset="0.766" stop-color="#ff007e"/><stop offset="0.787" stop-color="#ff0079"/><stop offset="0.809" stop-color="#ff0074"/><stop offset="0.830" stop-color="#ff0070"/><stop offset="0.851" stop-color="#ff006c"/><stop offset="0.872" stop-color="#ff0068"/><stop offset="0.894" stop-color="#ff0064"/><stop offset="0.915" stop-color="#ff0060"/><stop offset="0.936" stop-color="#ff005d"/><stop offset="0.957" stop-color="#ff005a"/><stop offset="0.979" stop-color="#ff0057"/><stop offset="1.000" stop-color="#ff0054"/></linearGradient>
<linearGradient id="r35" gradientUnits="userSpaceOnUse" x1="33.5" y1="0" x2="219.0" y2="0"><stop offset="0.000" stop-color="#008fff"/><stop offset="0.021" stop-color="#008bff"/><stop offset="0.043" stop-color="#0087ff"/><stop offset="0.064" stop-color="#0083ff"/><stop offset="0.085" stop-color="#007fff"/><stop offset="0.106" stop-color="#007bff"/><stop offset="0.128" stop-color="#0077ff"/><stop offset="0.149" stop-color="#0073ff"/><stop offset="0.170" stop-color="#006eff"/><stop offset="0.191" stop-color="#006aff"/><stop offset="0.213" stop-color="#0065ff"/><stop offset="0.234" stop-color="#0861ff"/><stop offset="0.255" stop-color="#1d5cff"/><stop offset="0.277" stop-color="#3158ff"/><stop offset="0.298" stop-color="#4553ff"/><stop offset="0.319" stop-color="#584eff"/><stop offset="0.340" stop-color="#6a49ff"/><stop offset="0.362" stop-color="#7d44ff"/><stop offset="0.383" stop-color="#8f3fff"/><stop offset="0.404" stop-color="#a239ff"/><stop offset="0.426" stop-color="#b434ff"/><stop offset="0.447" stop-color="#c72eff"/><stop offset="0.468" stop-color="#da29ff"/><stop offset="0.489" stop-color="#ec23ff"/><stop offset="0.511" stop-color="#ff1dff"/><stop offset="0.532" stop-color="#ff15ee"/><stop offset="0.553" stop-color="#ff0ede"/><stop offset="0.574" stop-color="#ff07d1"/><stop offset="0.596" stop-color="#ff01c5"/><stop offset="0.617" stop-color="#ff00ba"/><stop offset="0.638" stop-color="#ff00b0"/><stop offset="0.660" stop-color="#ff00a7"/><stop offset="0.681" stop-color="#ff009f"/><stop offset="0.702" stop-color="#ff0098"/><stop offset="0.723" stop-color="#ff0091"/><stop offset="0.745" stop-color="#ff008b"/><stop offset="0.766" stop-color="#ff0085"/><stop offset="0.787" stop-color="#ff0080"/><stop offset="0.809" stop-color="#ff007b"/><stop offset="0.830" stop-color="#ff0076"/><stop offset="0.851" stop-color="#ff0071"/><stop offset="0.872" stop-color="#ff006d"/><stop offset="0.894" stop-color="#ff006a"/><stop offset="0.915" stop-color="#ff0066"/><stop offset="0.936" stop-color="#ff0062"/><stop offset="0.957" stop-color="#ff005f"/><stop offset="0.979" stop-color="#ff005c"/><stop offset="1.000" stop-color="#ff0059"/></linearGradient>
<linearGradient id="r36" gradientUnits="userSpaceOnUse" x1="34.5" y1="0" x2="217.0" y2="0"><stop offset="0.000" stop-color="#0088ff"/><stop offset="0.022" stop-color="#0084ff"/><stop offset="0.043" stop-color="#0080ff"/><stop offset="0.065" stop-color="#007cff"/><stop offset="0.087" stop-color="#0078ff"/><stop offset="0.109" stop-color="#0074ff"/><stop offset="0.130" stop-color="#0070ff"/><stop offset="0.152" stop-color="#006cff"/><stop offset="0.174" stop-color="#0068ff"/><stop offset="0.196" stop-color="#0063ff"/><stop offset="0.217" stop-color="#005fff"/><stop offset="0.239" stop-color="#0d5aff"/><stop offset="0.261" stop-color="#2156ff"/><stop offset="0.283" stop-color="#3451ff"/><stop offset="0.304" stop-color="#474cff"/><stop offset="0.326" stop-color="#5a47ff"/><stop offset="0.348" stop-color="#6c42ff"/><stop offset="0.370" stop-color="#7e3dff"/><stop offset="0.391" stop-color="#9038ff"/><stop offset="0.413" stop-color="#a233ff"/><stop offset="0.435" stop-color="#b42eff"/><stop offset="0.457" stop-color="#c628ff"/><stop offset="0.478" stop-color="#d822ff"/><stop offset="0.500" stop-color="#ea1dff"/><stop offset="0.522" stop-color="#fc16ff"/><stop offset="0.543" stop-color="#ff0ff0"/><stop offset="0.565" stop-color="#ff08e1"/><stop offset="0.587" stop-color="#ff01d3"/><stop offset="0.609" stop-color="#ff00c7"/><stop offset="0.630" stop-color="#ff00bc"/><stop offset="0.652" stop-color="#ff00b3"/><stop offset="0.674" stop-color="#ff00aa"/><stop offset="0.696" stop-color="#ff00a2"/><stop offset="0.717" stop-color="#ff009a"/><stop offset="0.739" stop-color="#ff0094"/><stop offset="0.761" stop-color="#ff008d"/><stop offset="0.783" stop-color="#ff0087"/><stop offset="0.804" stop-color="#ff0082"/><stop offset="0.826" stop-color="#ff007d"/><stop offset="0.848" stop-color="#ff0078"/><stop offset="0.870" stop-color="#ff0074"/><stop offset="0.891" stop-color="#ff0070"/><stop offset="0.913" stop-color="#ff006c"/><stop offset="0.935" stop-color="#ff0068"/><stop offset="0.957" stop-color="#ff0065"/><stop offset="0.978" stop-color="#ff0061"/><stop offset="1.000" stop-color="#ff005e"/></linearGradient>
<linearGradient id="r37" gradientUnits="userSpaceOnUse" x1="35.5" y1="0" x2="215.0" y2="0"><stop offset="0.000" stop-color="#0081ff"/><stop offset="0.022" stop-color="#007eff"/><stop offset="0.044" stop-color="#007aff"/><stop offset="0.067" stop-color="#0076ff"/><stop offset="0.089" stop-color="#0072ff"/><stop offset="0.111" stop-color="#006eff"/><stop offset="0.133" stop-color="#006aff"/><stop offset="0.156" stop-color="#0065ff"/><stop offset="0.178" stop-color="#0061ff"/><stop offset="0.200" stop-color="#005dff"/><stop offset="0.222" stop-color="#0058ff"/><stop offset="0.244" stop-color="#1154ff"/><stop offset="0.267" stop-color="#254fff"/><stop offset="0.289" stop-color="#374bff"/><stop offset="0.311" stop-color="#4a46ff"/><stop offset="0.333" stop-color="#5c41ff"/><stop offset="0.356" stop-color="#6d3cff"/><stop offset="0.378" stop-color="#7f37ff"/><stop offset="0.400" stop-color="#9132ff"/><stop offset="0.422" stop-color="#a22dff"/><stop offset="0.444" stop-color="#b428ff"/><stop offset="0.467" stop-color="#c522ff"/><stop offset="0.489" stop-color="#d71cff"/><stop offset="0.511" stop-color="#e916ff"/><stop offset="0.533" stop-color="#fa10ff"/><stop offset="0.556" stop-color="#ff09f2"/><stop offset="0.578" stop-color="#ff02e3"/><stop offset="0.600" stop-color="#ff00d6"/><stop offset="0.622" stop-color="#ff00ca"/><stop offset="0.644" stop-color="#ff00bf"/><stop offset="0.667" stop-color="#ff00b5"/><stop offset="0.689" stop-color="#ff00ac"/><stop offset="0.711" stop-color="#ff00a4"/><stop offset="0.733" stop-color="#ff009d"/><stop offset="0.756" stop-color="#ff0096"/><stop offset="0.778" stop-color="#ff0090"/><stop offset="0.800" stop-color="#ff008a"/><stop offset="0.822" stop-color="#ff0084"/><stop offset="0.844" stop-color="#ff007f"/><stop offset="0.867" stop-color="#ff007a"/><stop offset="0.889" stop-color="#ff0076"/><stop offset="0.911" stop-color="#ff0072"/><stop offset="0.933" stop-color="#ff006e"/><stop offset="0.956" stop-color="#ff006a"/><stop offset="0.978" stop-color="#ff0067"/><stop offset="1.000" stop-color="#ff0063"/></linearGradient>
<linearGradient id="r38" gradientUnits="userSpaceOnUse" x1="36.5" y1="0" x2="213.5" y2="0"><stop offset="0.000" stop-color="#007bff"/><stop offset="0.022" stop-color="#0077ff"/><stop offset="0.044" stop-color="#0074ff"/><stop offset="0.067" stop-color="#0070ff"/><stop offset="0.089" stop-color="#006cff"/><stop offset="0.111" stop-color="#0068ff"/><stop offset="0.133" stop-color="#0064ff"/><stop offset="0.156" stop-color="#0060ff"/><stop offset="0.178" stop-color="#005cff"/><stop offset="0.200" stop-color="#0057ff"/><stop offset="0.222" stop-color="#0053ff"/><stop offset="0.244" stop-color="#114fff"/><stop offset="0.267" stop-color="#244aff"/><stop offset="0.289" stop-color="#3646ff"/><stop offset="0.311" stop-color="#4741ff"/><stop offset="0.333" stop-color="#583dff"/><stop offset="0.356" stop-color="#6a38ff"/><stop offset="0.378" stop-color="#7a33ff"/><stop offset="0.400" stop-color="#8b2eff"/><stop offset="0.422" stop-color="#9c29ff"/><stop offset="0.444" stop-color="#ad24ff"/><stop offset="0.467" stop-color="#be1fff"/><stop offset="0.489" stop-color="#cf19ff"/><stop offset="0.511" stop-color="#df13ff"/><stop offset="0.533" stop-color="#f00dff"/><stop offset="0.556" stop-color="#ff07fd"/><stop offset="0.578" stop-color="#ff00ed"/><stop offset="0.600" stop-color="#ff00df"/><stop offset="0.622" stop-color="#ff00d2"/><stop offset="0.644" stop-color="#ff00c7"/><stop offset="0.667" stop-color="#ff00bd"/><stop offset="0.689" stop-color="#ff00b4"/><stop offset="0.711" stop-color="#ff00ac"/><stop offset="0.733" stop-color="#ff00a4"/><stop offset="0.756" stop-color="#ff009d"/><stop offset="0.778" stop-color="#ff0096"/><stop offset="0.800" stop-color="#ff0090"/><stop offset="0.822" stop-color="#ff008a"/><stop offset="0.844" stop-color="#ff0085"/><stop offset="0.867" stop-color="#ff0080"/><stop offset="0.889" stop-color="#ff007c"/><stop offset="0.911" stop-color="#ff0077"/><stop offset="0.933" stop-color="#ff0073"/><stop offset="0.956" stop-color="#ff006f"/><stop offset="0.978" stop-color="#ff006c"/><stop offset="1.000" stop-color="#ff0068"/></linearGradient>
<linearGradient id="r39" gradientUnits="userSpaceOnUse" x1="37.5" y1="0" x2="211.5" y2="0"><stop offset="0.000" stop-color="#0075ff"/><stop offset="0.023" stop-color="#0071ff"/><stop offset="0.045" stop-color="#006eff"/><stop offset="0.068" stop-color="#006aff"/><stop offset="0.091" stop-color="#0066ff"/><stop offset="0.114" stop-color="#0062ff"/><stop offset="0.136" stop-color="#005eff"/><stop offset="0.159" stop-color="#005aff"/><stop offset="0.182" stop-color="#0056ff"/><stop offset="0.205" stop-color="#0052ff"/><stop offset="0.227" stop-color="#004dff"/><stop offset="0.250" stop-color="#1549ff"/><stop offset="0.273" stop-color="#2745ff"/><stop offset="0.295" stop-color="#3940ff"/><stop offset="0.318" stop-color="#4a3cff"/><stop offset="0.341" stop-color="#5a37ff"/><stop offset="0.364" stop-color="#6b32ff"/><stop offset="0.386" stop-color="#7b2eff"/><stop offset="0.409" stop-color="#8c29ff"/><stop offset="0.432" stop-color="#9c24ff"/><stop offset="0.455" stop-color="#ad1eff"/><stop offset="0.477" stop-color="#bd19ff"/><stop offset="0.500" stop-color="#ce13ff"/><stop offset="0.523" stop-color="#de0eff"/><stop offset="0.545" stop-color="#ef07ff"/><stop offset="0.568" stop-color="#ff00ff"/><stop offset="0.591" stop-color="#ff00ef"/><stop offset="0.614" stop-color="#ff00e1"/><stop offset="0.636" stop-color="#ff00d5"/><stop offset="0.659" stop-color="#ff00ca"/><stop offset="0.682" stop-color="#ff00bf"/><stop offset="0.705" stop-color="#ff00b6"/><stop offset="0.727" stop-color="#ff00ae"/><stop offset="0.750" stop-color="#ff00a6"/><stop offset="0.773" stop-color="#ff009f"/><stop offset="0.795" stop-color="#ff0098"/><stop offset="0.818" stop-color="#ff0092"/><stop offset="0.841" stop-color="#ff008d"/><stop offset="0.864" stop-color="#ff0087"/><stop offset="0.886" stop-color="#ff0082"/><stop offset="0.909" stop-color="#ff007e"/><stop offset="0.932" stop-color="#ff0079"/><stop offset="0.955" stop-color="#ff0075"/><stop offset="0.977" stop-color="#ff0071"/><stop offset="1.000" stop-color="#ff006e"/></linearGradient>
<linearGradient id="r40" gradientUnits="userSpaceOnUse" x1="38.5" y1="0" x2="209.5" y2="0"><stop offset="0.000" stop-color="#006fff"/><stop offset="0.023" stop-color="#006cff"/><stop offset="0.047" stop-color="#0068ff"/><stop offset="0.070" stop-color="#0064ff"/><stop offset="0.093" stop-color="#0060ff"/><stop offset="0.116" stop-color="#005cff"/><stop offset="0.140" stop-color="#0058ff"/><stop offset="0.163" stop-color="#0054ff"/><stop offset="0.186" stop-color="#0050ff"/><stop offset="0.209" stop-color="#004cff"/><stop offset="0.233" stop-color="#0548ff"/><stop offset="0.256" stop-color="#1944ff"/><stop offset="0.279" stop-color="#2a3fff"/><stop offset="0.302" stop-color="#3b3bff"/><stop offset="0.326" stop-color="#4c36ff"/><stop offset="0.349" stop-color="#5c32ff"/><stop offset="0.372" stop-color="#6c2dff"/><stop offset="0.395" stop-color="#7d28ff"/><stop offset="0.419" stop-color="#8d23ff"/><stop offset="0.442" stop-color="#9d1eff"/><stop offset="0.465" stop-color="#ad19ff"/><stop offset="0.488" stop-color="#bd14ff"/><stop offset="0.512" stop-color="#cd0eff"/><stop offset="0.535" stop-color="#dd08ff"/><stop offset="0.558" stop-color="#ed01ff"/><stop offset="0.581" stop-color="#fd00ff"/><stop offset="0.605" stop-color="#ff00f1"/><stop offset="0.628" stop-color="#ff00e3"/><stop offset="0.651" stop-color="#ff00d7"/><stop offset="0.674" stop-color="#ff00cc"/><stop offset="0.698" stop-color="#ff00c2"/><stop offset="0.721" stop-color="#ff00b8"/><stop offset="0.744" stop-color="#ff00b0"/><stop offset="0.767" stop-color="#ff00a8"/><stop offset="0.791" stop-color="#ff00a1"/><stop offset="0.814" stop-color="#ff009b"/><stop offset="0.837" stop-color="#ff0094"/><stop offset="0.860" stop-color="#ff008f"/><stop offset="0.884" stop-color="#ff0089"/><stop offset="0.907" stop-color="#ff0084"/><stop offset="0.930" stop-color="#ff0080"/><stop offset="0.953" stop-color="#ff007b"/><stop offset="0.977" stop-color="#ff0077"/><stop offset="1.000" stop-color="#ff0073"/></linearGradient>
<linearGradient id="r41" gradientUnits="userSpaceOnUse" x1="40.0" y1="0" x2="207.5" y2="0"><stop offset="0.000" stop-color="#0069ff"/><stop offset="0.024" stop-color="#0066ff"/><stop offset="0.048" stop-color="#0062ff"/><stop offset="0.071" stop-color="#005eff"/><stop offset="0.095" stop-color="#005aff"/><stop offset="0.119" stop-color="#0057ff"/><stop offset="0.143" stop-color="#0053ff"/><stop offset="0.167" stop-color="#004fff"/><stop offset="0.190" stop-color="#004bff"/><stop offset="0.214" stop-color="#0046ff"/><stop offset="0.238" stop-color="#0c42ff"/><stop offset="0.262" stop-color="#1e3eff"/><stop offset="0.286" stop-color="#2f3aff"/><stop offset="0.310" stop-color="#3f35ff"/><stop offset="0.333" stop-color="#4f31ff"/><stop offset="0.357" stop-color="#5f2cff"/><stop offset="0.381" stop-color="#6f28ff"/><stop offset="0.405" stop-color="#7f23ff"/><stop offset="0.429" stop-color="#8f1eff"/><stop offset="0.452" stop-color="#9e19ff"/><stop offset="0.476" stop-color="#ae13ff"/><stop offset="0.500" stop-color="#be0eff"/><stop offset="0.524" stop-color="#cd08ff"/><stop offset="0.548" stop-color="#dd02ff"/><stop offset="0.571" stop-color="#ed00ff"/><stop offset="0.595" stop-color="#fd00ff"/><stop offset="0.619" stop-color="#ff00f2"/><stop offset="0.643" stop-color="#ff00e5"/><stop offset="0.667" stop-color="#ff00d8"/><stop offset="0.690" stop-color="#ff00cd"/><stop offset="0.714" stop-color="#ff00c3"/><stop offset="0.738" stop-color="#ff00ba"/><stop offset="0.762" stop-color="#ff00b2"/><stop offset="0.786" stop-color="#ff00aa"/><stop offset="0.810" stop-color="#ff00a3"/><stop offset="0.833" stop-color="#ff009c"/><stop offset="0.857" stop-color="#ff0096"/><stop offset="0.881" stop-color="#ff0091"/><stop offset="0.905" stop-color="#ff008b"/><stop offset="0.929" stop-color="#ff0086"/><stop offset="0.952" stop-color="#ff0082"/><stop offset="0.976" stop-color="#ff007d"/><stop offset="1.000" stop-color="#ff0079"/></linearGradient>
<linearGradient id="r42" gradientUnits="userSpaceOnUse" x1="41.0" y1="0" x2="205.5" y2="0"><stop offset="0.000" stop-color="#0064ff"/><stop offset="0.024" stop-color="#0060ff"/><stop offset="0.048" stop-color="#005dff"/><stop offset="0.071" stop-color="#0059ff"/><stop offset="0.095" stop-color="#0056ff"/><stop offset="0.119" stop-color="#0052ff"/><stop offset="0.143" stop-color="#004eff"/><stop offset="0.167" stop-color="#004aff"/><stop offset="0.190" stop-color="#0046ff"/><stop offset="0.214" stop-color="#0042ff"/><stop offset="0.238" stop-color="#0b3eff"/><stop offset="0.262" stop-color="#1d3aff"/><stop offset="0.286" stop-color="#2d36ff"/><stop offset="0.310" stop-color="#3d32ff"/><stop offset="0.333" stop-color="#4c2dff"/><stop offset="0.357" stop-color="#5b29ff"/><stop offset="0.381" stop-color="#6b24ff"/><stop offset="0.405" stop-color="#7a20ff"/><stop offset="0.429" stop-color="#891bff"/><stop offset="0.452" stop-color="#9816ff"/><stop offset="0.476" stop-color="#a711ff"/><stop offset="0.500" stop-color="#b60cff"/><stop offset="0.524" stop-color="#c506ff"/><stop offset="0.548" stop-color="#d400ff"/><stop offset="0.571" stop-color="#e300ff"/><stop offset="0.595" stop-color="#f200ff"/><stop offset="0.619" stop-color="#ff00fd"/><stop offset="0.643" stop-color="#ff00ef"/><stop offset="0.667" stop-color="#ff00e2"/><stop offset="0.690" stop-color="#ff00d7"/><stop offset="0.714" stop-color="#ff00cc"/><stop offset="0.738" stop-color="#ff00c3"/><stop offset="0.762" stop-color="#ff00ba"/><stop offset="0.786" stop-color="#ff00b2"/><stop offset="0.810" stop-color="#ff00ab"/><stop offset="0.833" stop-color="#ff00a4"/><stop offset="0.857" stop-color="#ff009d"/><stop offset="0.881" stop-color="#ff0098"/><stop offset="0.905" stop-color="#ff0092"/><stop offset="0.929" stop-color="#ff008d"/><stop offset="0.952" stop-color="#ff0088"/><stop offset="0.976" stop-color="#ff0083"/><stop offset="1.000" stop-color="#ff007f"/></linearGradient>
<linearGradient id="r43" gradientUnits="userSpaceOnUse" x1="42.0" y1="0" x2="203.5" y2="0"><stop offset="0.000" stop-color="#005fff"/><stop offset="0.024" stop-color="#005bff"/><stop offset="0.049" stop-color="#0058ff"/><stop offset="0.073" stop-color="#0054ff"/><stop offset="0.098" stop-color="#0051ff"/><stop offset="0.122" stop-color="#004dff"/><stop offset="0.146" stop-color="#0049ff"/><stop offset="0.171" stop-color="#0045ff"/><stop offset="0.195" stop-color="#0041ff"/><stop offset="0.220" stop-color="#003dff"/><stop offset="0.244" stop-color="#0f39ff"/><stop offset="0.268" stop-color="#2035ff"/><stop offset="0.293" stop-color="#3031ff"/><stop offset="0.317" stop-color="#3f2dff"/><stop offset="0.341" stop-color="#4e29ff"/><stop offset="0.366" stop-color="#5d24ff"/><stop offset="0.390" stop-color="#6c20ff"/><stop offset="0.415" stop-color="#7b1bff"/><stop offset="0.439" stop-color="#8916ff"/><stop offset="0.463" stop-color="#9811ff"/><stop offset="0.488" stop-color="#a70cff"/><stop offset="0.512" stop-color="#b606ff"/><stop offset="0.537" stop-color="#c400ff"/><stop offset="0.561" stop-color="#d300ff"/><stop offset="0.585" stop-color="#e200ff"/><stop offset="0.610" stop-color="#f100ff"/><stop offset="0.634" stop-color="#ff00ff"/><stop offset="0.659" stop-color="#ff00f1"/><stop offset="0.683" stop-color="#ff00e4"/><stop offset="0.707" stop-color="#ff00d8"/><stop offset="0.732" stop-color="#ff00ce"/><stop offset="0.756" stop-color="#ff00c5"/><stop offset="0.780" stop-color="#ff00bc"/><stop offset="0.805" stop-color="#ff00b4"/><stop offset="0.829" stop-color="#ff00ad"/><stop offset="0.854" stop-color="#ff00a6"/><stop offset="0.878" stop-color="#ff009f"/><stop offset="0.902" stop-color="#ff0099"/><stop offset="0.927" stop-color="#ff0094"/><stop offset="0.951" stop-color="#ff008f"/><stop offset="0.976" stop-color="#ff008a"/><stop offset="1.000" stop-color="#ff0085"/></linearGradient>
<linearGradient id="r44" gradientUnits="userSpaceOnUse" x1="43.0" y1="0" x2="201.5" y2="0"><stop offset="0.000" stop-color="#005aff"/><stop offset="0.025" stop-color="#0057ff"/><stop offset="0.050" stop-color="#0053ff"/><stop offset="0.075" stop-color="#004fff"/><stop offset="0.100" stop-color="#004cff"/><stop offset="0.125" stop-color="#0048ff"/><stop offset="0.150" stop-color="#0044ff"/><stop offset="0.175" stop-color="#0041ff"/><stop offset="0.200" stop-color="#003dff"/><stop offset="0.225" stop-color="#0039ff"/><stop offset="0.250" stop-color="#1335ff"/><stop offset="0.275" stop-color="#2331ff"/><stop offset="0.300" stop-color="#322dff"/><stop offset="0.325" stop-color="#4128ff"/><stop offset="0.350" stop-color="#5024ff"/><stop offset="0.375" stop-color="#5f1fff"/><stop offset="0.400" stop-color="#6d1bff"/><stop offset="0.425" stop-color="#7c16ff"/><stop offset="0.450" stop-color="#8a11ff"/><stop offset="0.475" stop-color="#990cff"/><stop offset="0.500" stop-color="#a707ff"/><stop offset="0.525" stop-color="#b501ff"/><stop offset="0.550" stop-color="#c400ff"/><stop offset="0.575" stop-color="#d200ff"/><stop offset="0.600" stop-color="#e100ff"/><stop offset="0.625" stop-color="#ef00ff"/><stop offset="0.650" stop-color="#fe00ff"/><stop offset="0.675" stop-color="#ff00f2"/><stop offset="0.700" stop-color="#ff00e6"/><stop offset="0.725" stop-color="#ff00da"/><stop offset="0.750" stop-color="#ff00d0"/><stop offset="0.775" stop-color="#ff00c6"/><stop offset="0.800" stop-color="#ff00be"/><stop offset="0.825" stop-color="#ff00b6"/><stop offset="0.850" stop-color="#ff00ae"/><stop offset="0.875" stop-color="#ff00a8"/><stop offset="0.900" stop-color="#ff00a1"/><stop offset="0.925" stop-color="#ff009b"/><stop offset="0.950" stop-color="#ff0096"/><stop offset="0.975" stop-color="#ff0090"/><stop offset="1.000" stop-color="#ff008c"/></linearGradient>
<linearGradient id="r45" gradientUnits="userSpaceOnUse" x1="44.5" y1="0" x2="199.5" y2="0"><stop offset="0.000" stop-color="#0055ff"/><stop offset="0.026" stop-color="#0052ff"/><stop offset="0.051" stop-color="#004eff"/><stop offset="0.077" stop-color="#004aff"/><stop offset="0.103" stop-color="#0047ff"/><stop offset="0.128" stop-color="#0043ff"/><stop offset="0.154" stop-color="#003fff"/><stop offset="0.179" stop-color="#003cff"/><stop offset="0.205" stop-color="#0038ff"/><stop offset="0.231" stop-color="#0734ff"/><stop offset="0.256" stop-color="#1730ff"/><stop offset="0.282" stop-color="#272cff"/><stop offset="0.308" stop-color="#3628ff"/><stop offset="0.333" stop-color="#4523ff"/><stop offset="0.359" stop-color="#531fff"/><stop offset="0.385" stop-color="#611bff"/><stop offset="0.410" stop-color="#7016ff"/><stop offset="0.436" stop-color="#7e11ff"/><stop offset="0.462" stop-color="#8c0cff"/><stop offset="0.487" stop-color="#9a07ff"/><stop offset="0.513" stop-color="#a801ff"/><stop offset="0.538" stop-color="#b600ff"/><stop offset="0.564" stop-color="#c400ff"/><stop offset="0.590" stop-color="#d300ff"/><stop offset="0.615" stop-color="#e100ff"/><stop offset="0.641" stop-color="#ef00ff"/><stop offset="0.667" stop-color="#fd00ff"/><stop offset="0.692" stop-color="#ff00f3"/><stop offset="0.718" stop-color="#ff00e7"/><stop offset="0.744" stop-color="#ff00db"/><stop offset="0.769" stop-color="#ff00d1"/><stop offset="0.795" stop-color="#ff00c8"/><stop offset="0.821" stop-color="#ff00bf"/><stop offset="0.846" stop-color="#ff00b7"/><stop offset="0.872" stop-color="#ff00b0"/><stop offset="0.897" stop-color="#ff00a9"/><stop offset="0.923" stop-color="#ff00a3"/><stop offset="0.949" stop-color="#ff009d"/><stop offset="0.974" stop-color="#ff0097"/><stop offset="1.000" stop-color="#ff0092"/></linearGradient>
<linearGradient id="r46" gradientUnits="userSpaceOnUse" x1="45.5" y1="0" x2="197.5" y2="0"><stop offset="0.000" stop-color="#0051ff"/><stop offset="0.026" stop-color="#004dff"/><stop offset="0.053" stop-color="#004aff"/><stop offset="0.079" stop-color="#0046ff"/><stop offset="0.105" stop-color="#0042ff"/><stop offset="0.132" stop-color="#003fff"/><stop offset="0.158" stop-color="#003bff"/><stop offset="0.184" stop-color="#0037ff"/><stop offset="0.211" stop-color="#0033ff"/><stop offset="0.237" stop-color="#0a30ff"/><stop offset="0.263" stop-color="#1b2cff"/><stop offset="0.289" stop-color="#2a27ff"/><stop offset="0.316" stop-color="#3823ff"/><stop offset="0.342" stop-color="#471fff"/><stop offset="0.368" stop-color="#551bff"/><stop offset="0.395" stop-color="#6316ff"/><stop offset="0.421" stop-color="#7112ff"/><stop offset="0.447" stop-color="#7f0dff"/><stop offset="0.474" stop-color="#8d08ff"/><stop offset="0.500" stop-color="#9b02ff"/><stop offset="0.526" stop-color="#a900ff"/><stop offset="0.553" stop-color="#b600ff"/><stop offset="0.579" stop-color="#c400ff"/><stop offset="0.605" stop-color="#d200ff"/><stop offset="0.632" stop-color="#e000ff"/><stop offset="0.658" stop-color="#ee00ff"/><stop offset="0.684" stop-color="#fc00ff"/><stop offset="0.711" stop-color="#ff00f4"/><stop offset="0.737" stop-color="#ff00e8"/><stop offset="0.763" stop-color="#ff00dd"/><stop offset="0.789" stop-color="#ff00d3"/><stop offset="0.816" stop-color="#ff00c9"/><stop offset="0.842" stop-color="#ff00c1"/><stop offset="0.868" stop-color="#ff00b9"/><stop offset="0.895" stop-color="#ff00b1"/><stop offset="0.921" stop-color="#ff00ab"/><stop offset="0.947" stop-color="#ff00a4"/><stop offset="0.974" stop-color="#ff009e"/><stop offset="1.000" stop-color="#ff0099"/></linearGradient>
<linearGradient id="r47" gradientUnits="userSpaceOnUse" x1="46.5" y1="0" x2="196.0" y2="0"><stop offset="0.000" stop-color="#004cff"/><stop offset="0.026" stop-color="#0049ff"/><stop offset="0.053" stop-color="#0046ff"/><stop offset="0.079" stop-color="#0042ff"/><stop offset="0.105" stop-color="#003fff"/><stop offset="0.132" stop-color="#003bff"/><stop offset="0.158" stop-color="#0037ff"/><stop offset="0.184" stop-color="#0034ff"/><stop offset="0.211" stop-color="#0030ff"/><stop offset="0.237" stop-color="#0b2cff"/><stop offset="0.263" stop-color="#1a28ff"/><stop offset="0.289" stop-color="#2924ff"/><stop offset="0.316" stop-color="#3720ff"/><stop offset="0.342" stop-color="#451cff"/><stop offset="0.368" stop-color="#5218ff"/><stop offset="0.395" stop-color="#6014ff"/><stop offset="0.421" stop-color="#6d0fff"/><stop offset="0.447" stop-color="#7b0aff"/><stop offset="0.474" stop-color="#8805ff"/><stop offset="0.500" stop-color="#9500ff"/><stop offset="0.526" stop-color="#a300ff"/><stop offset="0.553" stop-color="#b000ff"/><stop offset="0.579" stop-color="#bd00ff"/><stop offset="0.605" stop-color="#cb00ff"/><stop offset="0.632" stop-color="#d800ff"/><stop offset="0.658" stop-color="#e500ff"/><stop offset="0.684" stop-color="#f300ff"/><stop offset="0.711" stop-color="#ff00fe"/><stop offset="0.737" stop-color="#ff00f1"/><stop offset="0.763" stop-color="#ff00e5"/><stop offset="0.789" stop-color="#ff00db"/><stop offset="0.816" stop-color="#ff00d1"/><stop offset="0.842" stop-color="#ff00c8"/><stop offset="0.868" stop-color="#ff00c0"/><stop offset="0.895" stop-color="#ff00b9"/><stop offset="0.921" stop-color="#ff00b2"/><stop offset="0.947" stop-color="#ff00ab"/><stop offset="0.974" stop-color="#ff00a5"/><stop offset="1.000" stop-color="#ff009f"/></linearGradient>
<linearGradient id="r48" gradientUnits="userSpaceOnUse" x1="47.5" y1="0" x2="194.0" y2="0"><stop offset="0.000" stop-color="#0048ff"/><stop offset="0.027" stop-color="#0045ff"/><stop offset="0.054" stop-color="#0041ff"/><stop offset="0.081" stop-color="#003eff"/><stop offset="0.108" stop-color="#003aff"/><stop offset="0.135" stop-color="#0037ff"/><stop offset="0.162" stop-color="#0033ff"/><stop offset="0.189" stop-color="#0030ff"/><stop offset="0.216" stop-color="#002cff"/><stop offset="0.243" stop-color="#0e28ff"/><stop offset="0.270" stop-color="#1d24ff"/><stop offset="0.297" stop-color="#2b20ff"/><stop offset="0.324" stop-color="#391cff"/><stop offset="0.351" stop-color="#4718ff"/><stop offset="0.378" stop-color="#5414ff"/><stop offset="0.405" stop-color="#610fff"/><stop offset="0.432" stop-color="#6f0bff"/><stop offset="0.459" stop-color="#7c06ff"/><stop offset="0.486" stop-color="#8900ff"/><stop offset="0.514" stop-color="#9600ff"/><stop offset="0.541" stop-color="#a300ff"/><stop offset="0.568" stop-color="#b000ff"/><stop offset="0.595" stop-color="#bd00ff"/><stop offset="0.622" stop-color="#ca00ff"/><stop offset="0.649" stop-color="#d800ff"/><stop offset="0.676" stop-color="#e500ff"/><stop offset="0.703" stop-color="#f200ff"/><stop offset="0.730" stop-color="#ff00ff"/><stop offset="0.757" stop-color="#ff00f2"/><stop offset="0.784" stop-color="#ff00e7"/><stop offset="0.811" stop-color="#ff00dc"/><stop offset="0.838" stop-color="#ff00d3"/><stop offset="0.865" stop-color="#ff00ca"/><stop offset="0.892" stop-color="#ff00c2"/><stop offset="0.919" stop-color="#ff00ba"/><stop offset="0.946" stop-color="#ff00b3"/><stop offset="0.973" stop-color="#ff00ac"/><stop offset="1.000" stop-color="#ff00a6"/></linearGradient>
<linearGradient id="r49" gradientUnits="userSpaceOnUse" x1="49.0" y1="0" x2="192.0" y2="0"><stop offset="0.000" stop-color="#0044ff"/><stop offset="0.028" stop-color="#0040ff"/><stop offset="0.056" stop-color="#003dff"/><stop offset="0.083" stop-color="#003aff"/><stop offset="0.111" stop-color="#0036ff"/><stop offset="0.139" stop-color="#0033ff"/><stop offset="0.167" stop-color="#002fff"/><stop offset="0.194" stop-color="#002bff"/><stop offset="0.222" stop-color="#0328ff"/><stop offset="0.250" stop-color="#1324ff"/><stop offset="0.278" stop-color="#2120ff"/><stop offset="0.306" stop-color="#2f1cff"/><stop offset="0.333" stop-color="#3c18ff"/><stop offset="0.361" stop-color="#4a14ff"/><stop offset="0.389" stop-color="#570fff"/><stop offset="0.417" stop-color="#640bff"/><stop offset="0.444" stop-color="#7106ff"/><stop offset="0.472" stop-color="#7e01ff"/><stop offset="0.500" stop-color="#8b00ff"/><stop offset="0.528" stop-color="#9700ff"/><stop offset="0.556" stop-color="#a400ff"/><stop offset="0.583" stop-color="#b100ff"/><stop offset="0.611" stop-color="#be00ff"/><stop offset="0.639" stop-color="#cb00ff"/><stop offset="0.667" stop-color="#d800ff"/><stop offset="0.694" stop-color="#e500ff"/><stop offset="0.722" stop-color="#f200ff"/><stop offset="0.750" stop-color="#ff00ff"/><stop offset="0.778" stop-color="#ff00f3"/><stop offset="0.806" stop-color="#ff00e8"/><stop offset="0.833" stop-color="#ff00dd"/><stop offset="0.861" stop-color="#ff00d4"/><stop offset="0.889" stop-color="#ff00cb"/><stop offset="0.917" stop-color="#ff00c3"/><stop offset="0.944" stop-color="#ff00bb"/><stop offset="0.972" stop-color="#ff00b4"/><stop offset="1.000" stop-color="#ff00ae"/></linearGradient>
<linearGradient id="r50" gradientUnits="userSpaceOnUse" x1="50.0" y1="0" x2="190.0" y2="0"><stop offset="0.000" stop-color="#0040ff"/><stop offset="0.029" stop-color="#003dff"/><stop offset="0.057" stop-color="#0039ff"/><stop offset="0.086" stop-color="#0036ff"/><stop offset="0.114" stop-color="#0032ff"/><stop offset="0.143" stop-color="#002fff"/><stop offset="0.171" stop-color="#002bff"/><stop offset="0.200" stop-color="#0027ff"/><stop offset="0.229" stop-color="#0624ff"/><stop offset="0.257" stop-color="#1620ff"/><stop offset="0.286" stop-color="#241cff"/><stop offset="0.314" stop-color="#3118ff"/><stop offset="0.343" stop-color="#3f14ff"/><stop offset="0.371" stop-color="#4c10ff"/><stop offset="0.400" stop-color="#590bff"/><stop offset="0.429" stop-color="#6507ff"/><stop offset="0.457" stop-color="#7202ff"/><stop offset="0.486" stop-color="#7f00ff"/><stop offset="0.514" stop-color="#8c00ff"/><stop offset="0.543" stop-color="#9800ff"/><stop offset="0.571" stop-color="#a500ff"/><stop offset="0.600" stop-color="#b200ff"/><stop offset="0.629" stop-color="#be00ff"/><stop offset="0.657" stop-color="#cb00ff"/><stop offset="0.686" stop-color="#d800ff"/><stop offset="0.714" stop-color="#e400ff"/><stop offset="0.743" stop-color="#f100ff"/><stop offset="0.771" stop-color="#fe00ff"/><stop offset="0.800" stop-color="#ff00f4"/><stop offset="0.829" stop-color="#ff00e9"/><stop offset="0.857" stop-color="#ff00de"/><stop offset="0.886" stop-color="#ff00d5"/><stop offset="0.914" stop-color="#ff00cc"/><stop offset="0.943" stop-color="#ff00c4"/><stop offset="0.971" stop-color="#ff00bd"/><stop offset="1.000" stop-color="#ff00b6"/></linearGradient>
<linearGradient id="r51" gradientUnits="userSpaceOnUse" x1="51.5" y1="0" x2="188.0" y2="0"><stop offset="0.000" stop-color="#003cff"/><stop offset="0.029" stop-color="#0039ff"/><stop offset="0.057" stop-color="#0035ff"/><stop offset="0.086" stop-color="#0032ff"/><stop offset="0.114" stop-color="#002fff"/><stop offset="0.143" stop-color="#002bff"/><stop offset="0.171" stop-color="#0028ff"/><stop offset="0.200" stop-color="#0024ff"/><stop offset="0.229" stop-color="#0820ff"/><stop offset="0.257" stop-color="#161dff"/><stop offset="0.286" stop-color="#2419ff"/><stop offset="0.314" stop-color="#3115ff"/><stop offset="0.343" stop-color="#3d11ff"/><stop offset="0.371" stop-color="#4a0dff"/><stop offset="0.400" stop-color="#5609ff"/><stop offset="0.429" stop-color="#6204ff"/><stop offset="0.457" stop-color="#6f00ff"/><stop offset="0.486" stop-color="#7b00ff"/><stop offset="0.514" stop-color="#8700ff"/><stop offset="0.543" stop-color="#9300ff"/><stop offset="0.571" stop-color="#9f00ff"/><stop offset="0.600" stop-color="#ab00ff"/><stop offset="0.629" stop-color="#b700ff"/><stop offset="0.657" stop-color="#c300ff"/><stop offset="0.686" stop-color="#cf00ff"/><stop offset="0.714" stop-color="#db00ff"/><stop offset="0.743" stop-color="#e800ff"/><stop offset="0.771" stop-color="#f400ff"/><stop offset="0.800" stop-color="#ff00fe"/><stop offset="0.829" stop-color="#ff00f2"/><stop offset="0.857" stop-color="#ff00e8"/><stop offset="0.886" stop-color="#ff00de"/><stop offset="0.914" stop-color="#ff00d5"/><stop offset="0.943" stop-color="#ff00cd"/><stop offset="0.971" stop-color="#ff00c5"/><stop offset="1.000" stop-color="#ff00be"/></linearGradient>
<linearGradient id="r52" gradientUnits="userSpaceOnUse" x1="52.5" y1="0" x2="186.0" y2="0"><stop offset="0.000" stop-color="#0038ff"/><stop offset="0.029" stop-color="#0035ff"/><stop offset="0.059" stop-color="#0032ff"/><stop offset="0.088" stop-color="#002eff"/><stop offset="0.118" stop-color="#002bff"/><stop offset="0.147" stop-color="#0028ff"/><stop offset="0.176" stop-color="#0024ff"/><stop offset="0.206" stop-color="#0021ff"/><stop offset="0.235" stop-color="#0b1dff"/><stop offset="0.265" stop-color="#1919ff"/><stop offset="0.294" stop-color="#2615ff"/><stop offset="0.324" stop-color="#3311ff"/><stop offset="0.353" stop-color="#3f0dff"/><stop offset="0.382" stop-color="#4c09ff"/><stop offset="0.412" stop-color="#5805ff"/><stop offset="0.441" stop-color="#6400ff"/><stop offset="0.471" stop-color="#7000ff"/><stop offset="0.500" stop-color="#7c00ff"/><stop offset="0.529" stop-color="#8800ff"/><stop offset="0.559" stop-color="#9400ff"/><stop offset="0.588" stop-color="#a000ff"/><stop offset="0.618" stop-color="#ab00ff"/><stop offset="0.647" stop-color="#b700ff"/><stop offset="0.676" stop-color="#c300ff"/><stop offset="0.706" stop-color="#cf00ff"/><stop offset="0.735" stop-color="#db00ff"/><stop offset="0.765" stop-color="#e700ff"/><stop offset="0.794" stop-color="#f300ff"/><stop offset="0.824" stop-color="#ff00ff"/><stop offset="0.853" stop-color="#ff00f3"/><stop offset="0.882" stop-color="#ff00e9"/><stop offset="0.912" stop-color="#ff00df"/><stop offset="0.941" stop-color="#ff00d6"/><stop offset="0.971" stop-color="#ff00ce"/><stop offset="1.000" stop-color="#ff00c6"/></linearGradient>
<linearGradient id="r53" gradientUnits="userSpaceOnUse" x1="54.0" y1="0" x2="184.0" y2="0"><stop offset="0.000" stop-color="#0034ff"/><stop offset="0.030" stop-color="#0031ff"/><stop offset="0.061" stop-color="#002eff"/><stop offset="0.091" stop-color="#002aff"/><stop offset="0.121" stop-color="#0027ff"/><stop offset="0.152" stop-color="#0024ff"/><stop offset="0.182" stop-color="#0020ff"/><stop offset="0.212" stop-color="#001dff"/><stop offset="0.242" stop-color="#0f19ff"/><stop offset="0.273" stop-color="#1d15ff"/><stop offset="0.303" stop-color="#2a11ff"/><stop offset="0.333" stop-color="#360eff"/><stop offset="0.364" stop-color="#4209ff"/><stop offset="0.394" stop-color="#4e05ff"/><stop offset="0.424" stop-color="#5a00ff"/><stop offset="0.455" stop-color="#6600ff"/><stop offset="0.485" stop-color="#7200ff"/><stop offset="0.515" stop-color="#7e00ff"/><stop offset="0.545" stop-color="#8900ff"/><stop offset="0.576" stop-color="#9500ff"/><stop offset="0.606" stop-color="#a100ff"/><stop offset="0.636" stop-color="#ac00ff"/><stop offset="0.667" stop-color="#b800ff"/><stop offset="0.697" stop-color="#c400ff"/><stop offset="0.727" stop-color="#d000ff"/><stop offset="0.758" stop-color="#db00ff"/><stop offset="0.788" stop-color="#e700ff"/><stop offset="0.818" stop-color="#f300ff"/><stop offset="0.848" stop-color="#ff00ff"/><stop offset="0.879" stop-color="#ff00f4"/><stop offset="0.909" stop-color="#ff00e9"/><stop offset="0.939" stop-color="#ff00e0"/><stop offset="0.970" stop-color="#ff00d7"/><stop offset="1.000" stop-color="#ff00cf"/></linearGradient>
<linearGradient id="r54" gradientUnits="userSpaceOnUse" x1="55.0" y1="0" x2="182.0" y2="0"><stop offset="0.000" stop-color="#0031ff"/><stop offset="0.031" stop-color="#002eff"/><stop offset="0.062" stop-color="#002aff"/><stop offset="0.094" stop-color="#0027ff"/><stop offset="0.125" stop-color="#0024ff"/><stop offset="0.156" stop-color="#0020ff"/><stop offset="0.188" stop-color="#001dff"/><stop offset="0.219" stop-color="#0419ff"/><stop offset="0.250" stop-color="#1216ff"/><stop offset="0.281" stop-color="#1f12ff"/><stop offset="0.312" stop-color="#2c0eff"/><stop offset="0.344" stop-color="#380aff"/><stop offset="0.375" stop-color="#4406ff"/><stop offset="0.406" stop-color="#5001ff"/><stop offset="0.438" stop-color="#5c00ff"/><stop offset="0.469" stop-color="#6700ff"/><stop offset="0.500" stop-color="#7300ff"/><stop offset="0.531" stop-color="#7f00ff"/><stop offset="0.562" stop-color="#8a00ff"/><stop offset="0.594" stop-color="#9600ff"/><stop offset="0.625" stop-color="#a100ff"/><stop offset="0.656" stop-color="#ad00ff"/><stop offset="0.688" stop-color="#b800ff"/><stop offset="0.719" stop-color="#c400ff"/><stop offset="0.750" stop-color="#d000ff"/><stop offset="0.781" stop-color="#db00ff"/><stop offset="0.812" stop-color="#e700ff"/><stop offset="0.844" stop-color="#f300ff"/><stop offset="0.875" stop-color="#fe00ff"/><stop offset="0.906" stop-color="#ff00f4"/><stop offset="0.938" stop-color="#ff00ea"/><stop offset="0.969" stop-color="#ff00e1"/><stop offset="1.000" stop-color="#ff00d8"/></linearGradient>
<linearGradient id="r55" gradientUnits="userSpaceOnUse" x1="56.0" y1="0" x2="180.5" y2="0"><stop offset="0.000" stop-color="#002eff"/><stop offset="0.031" stop-color="#002aff"/><stop offset="0.062" stop-color="#0027ff"/><stop offset="0.094" stop-color="#0024ff"/><stop offset="0.125" stop-color="#0021ff"/><stop offset="0.156" stop-color="#001dff"/><stop offset="0.188" stop-color="#001aff"/><stop offset="0.219" stop-color="#0417ff"/><stop offset="0.250" stop-color="#1213ff"/><stop offset="0.281" stop-color="#1f0fff"/><stop offset="0.312" stop-color="#2b0cff"/><stop offset="0.344" stop-color="#3608ff"/><stop offset="0.375" stop-color="#4203ff"/><stop offset="0.406" stop-color="#4e00ff"/><stop offset="0.438" stop-color="#5900ff"/><stop offset="0.469" stop-color="#6400ff"/><stop offset="0.500" stop-color="#6f00ff"/><stop offset="0.531" stop-color="#7a00ff"/><stop offset="0.562" stop-color="#8600ff"/><stop offset="0.594" stop-color="#9100ff"/><stop offset="0.625" stop-color="#9c00ff"/><stop offset="0.656" stop-color="#a700ff"/><stop offset="0.688" stop-color="#b200ff"/><stop offset="0.719" stop-color="#bd00ff"/><stop offset="0.750" stop-color="#c800ff"/><stop offset="0.781" stop-color="#d300ff"/><stop offset="0.812" stop-color="#df00ff"/><stop offset="0.844" stop-color="#ea00ff"/><stop offset="0.875" stop-color="#f500ff"/><stop offset="0.906" stop-color="#ff00fe"/><stop offset="0.938" stop-color="#ff00f3"/><stop offset="0.969" stop-color="#ff00e9"/><stop offset="1.000" stop-color="#ff00e0"/></linearGradient>
<linearGradient id="r56" gradientUnits="userSpaceOnUse" x1="57.5" y1="0" x2="178.5" y2="0"><stop offset="0.000" stop-color="#002aff"/><stop offset="0.032" stop-color="#0027ff"/><stop offset="0.065" stop-color="#0024ff"/><stop offset="0.097" stop-color="#0021ff"/><stop offset="0.129" stop-color="#001dff"/><stop offset="0.161" stop-color="#001aff"/><stop offset="0.194" stop-color="#0016ff"/><stop offset="0.226" stop-color="#0913ff"/><stop offset="0.258" stop-color="#160fff"/><stop offset="0.290" stop-color="#220cff"/><stop offset="0.323" stop-color="#2e08ff"/><stop offset="0.355" stop-color="#3904ff"/><stop offset="0.387" stop-color="#4500ff"/><stop offset="0.419" stop-color="#5000ff"/><stop offset="0.452" stop-color="#5b00ff"/><stop offset="0.484" stop-color="#6600ff"/><stop offset="0.516" stop-color="#7100ff"/><stop offset="0.548" stop-color="#7c00ff"/><stop offset="0.581" stop-color="#8700ff"/><stop offset="0.613" stop-color="#9200ff"/><stop offset="0.645" stop-color="#9d00ff"/><stop offset="0.677" stop-color="#a800ff"/><stop offset="0.710" stop-color="#b300ff"/><stop offset="0.742" stop-color="#be00ff"/><stop offset="0.774" stop-color="#c900ff"/><stop offset="0.806" stop-color="#d400ff"/><stop offset="0.839" stop-color="#df00ff"/><stop offset="0.871" stop-color="#ea00ff"/><stop offset="0.903" stop-color="#f500ff"/><stop offset="0.935" stop-color="#ff00fe"/><stop offset="0.968" stop-color="#ff00f4"/><stop offset="1.000" stop-color="#ff00ea"/></linearGradient>
<linearGradient id="r57" gradientUnits="userSpaceOnUse" x1="59.0" y1="0" x2="176.5" y2="0"><stop offset="0.000" stop-color="#0027ff"/><stop offset="0.033" stop-color="#0023ff"/><stop offset="0.067" stop-color="#0020ff"/><stop offset="0.100" stop-color="#001dff"/><stop offset="0.133" stop-color="#001aff"/><stop offset="0.167" stop-color="#0016ff"/><stop offset="0.200" stop-color="#0013ff"/><stop offset="0.233" stop-color="#0d0fff"/><stop offset="0.267" stop-color="#1a0cff"/><stop offset="0.300" stop-color="#2508ff"/><stop offset="0.333" stop-color="#3104ff"/><stop offset="0.367" stop-color="#3c00ff"/><stop offset="0.400" stop-color="#4700ff"/><stop offset="0.433" stop-color="#5200ff"/><stop offset="0.467" stop-color="#5d00ff"/><stop offset="0.500" stop-color="#6800ff"/><stop offset="0.533" stop-color="#7300ff"/><stop offset="0.567" stop-color="#7e00ff"/><stop offset="0.600" stop-color="#8900ff"/><stop offset="0.633" stop-color="#9300ff"/><stop offset="0.667" stop-color="#9e00ff"/><stop offset="0.700" stop-color="#a900ff"/><stop offset="0.733" stop-color="#b400ff"/><stop offset="0.767" stop-color="#bf00ff"/><stop offset="0.800" stop-color="#c900ff"/><stop offset="0.833" stop-color="#d400ff"/><stop offset="0.867" stop-color="#df00ff"/><stop offset="0.900" stop-color="#ea00ff"/><stop offset="0.933" stop-color="#f500ff"/><stop offset="0.967" stop-color="#ff00fe"/><stop offset="1.000" stop-color="#ff00f4"/></linearGradient>
<linearGradient id="r58" gradientUnits="userSpaceOnUse" x1="60.0" y1="0" x2="174.5" y2="0"><stop offset="0.000" stop-color="#0024ff"/><stop offset="0.034" stop-color="#0020ff"/><stop offset="0.069" stop-color="#001dff"/><stop offset="0.103" stop-color="#001aff"/><stop offset="0.138" stop-color="#0017ff"/><stop offset="0.172" stop-color="#0013ff"/><stop offset="0.207" stop-color="#0210ff"/><stop offset="0.241" stop-color="#100cff"/><stop offset="0.276" stop-color="#1c08ff"/><stop offset="0.310" stop-color="#2804ff"/><stop offset="0.345" stop-color="#3300ff"/><stop offset="0.379" stop-color="#3e00ff"/><stop offset="0.414" stop-color="#4900ff"/><stop offset="0.448" stop-color="#5400ff"/><stop offset="0.483" stop-color="#5f00ff"/><stop offset="0.517" stop-color="#6a00ff"/><stop offset="0.552" stop-color="#7400ff"/><stop offset="0.586" stop-color="#7f00ff"/><stop offset="0.621" stop-color="#8a00ff"/><stop offset="0.655" stop-color="#9400ff"/><stop offset="0.690" stop-color="#9f00ff"/><stop offset="0.724" stop-color="#aa00ff"/><stop offset="0.759" stop-color="#b400ff"/><stop offset="0.793" stop-color="#bf00ff"/><stop offset="0.828" stop-color="#ca00ff"/><stop offset="0.862" stop-color="#d400ff"/><stop offset="0.897" stop-color="#df00ff"/><stop offset="0.931" stop-color="#ea00ff"/><stop offset="0.966" stop-color="#f400ff"/><stop offset="1.000" stop-color="#ff00ff"/></linearGradient>
<linearGradient id="r59" gradientUnits="userSpaceOnUse" x1="61.5" y1="0" x2="172.5" y2="0"><stop offset="0.000" stop-color="#0020ff"/><stop offset="0.036" stop-color="#001dff"/><stop offset="0.071" stop-color="#001aff"/><stop offset="0.107" stop-color="#0017ff"/><stop offset="0.143" stop-color="#0013ff"/><stop offset="0.179" stop-color="#0010ff"/><stop offset="0.214" stop-color="#070cff"/><stop offset="0.250" stop-color="#1309ff"/><stop offset="0.286" stop-color="#1f05ff"/><stop offset="0.321" stop-color="#2b00ff"/><stop offset="0.357" stop-color="#3600ff"/><stop offset="0.393" stop-color="#4100ff"/><stop offset="0.429" stop-color="#4c00ff"/><stop offset="0.464" stop-color="#5600ff"/><stop offset="0.500" stop-color="#6100ff"/><stop offset="0.536" stop-color="#6c00ff"/><stop offset="0.571" stop-color="#7600ff"/><stop offset="0.607" stop-color="#8100ff"/><stop offset="0.643" stop-color="#8b00ff"/><stop offset="0.679" stop-color="#9600ff"/><stop offset="0.714" stop-color="#a000ff"/><stop offset="0.750" stop-color="#ab00ff"/><stop offset="0.786" stop-color="#b500ff"/><stop offset="0.821" stop-color="#c000ff"/><stop offset="0.857" stop-color="#ca00ff"/><stop offset="0.893" stop-color="#d500ff"/><stop offset="0.929" stop-color="#df00ff"/><stop offset="0.964" stop-color="#ea00ff"/><stop offset="1.000" stop-color="#f500ff"/></linearGradient>
<linearGradient id="r60" gradientUnits="userSpaceOnUse" x1="63.0" y1="0" x2="170.5" y2="0"><stop offset="0.000" stop-color="#001dff"/><stop offset="0.037" stop-color="#001aff"/><stop offset="0.074" stop-color="#0017ff"/><stop offset="0.111" stop-color="#0013ff"/><stop offset="0.148" stop-color="#0010ff"/><stop offset="0.185" stop-color="#000cff"/><stop offset="0.222" stop-color="#0b09ff"/><stop offset="0.259" stop-color="#1705ff"/><stop offset="0.296" stop-color="#2301ff"/><stop offset="0.333" stop-color="#2e00ff"/><stop offset="0.370" stop-color="#3900ff"/><stop offset="0.407" stop-color="#4300ff"/><stop offset="0.444" stop-color="#4e00ff"/><stop offset="0.481" stop-color="#5900ff"/><stop offset="0.519" stop-color="#6300ff"/><stop offset="0.556" stop-color="#6e00ff"/><stop offset="0.593" stop-color="#7800ff"/><stop offset="0.630" stop-color="#8200ff"/><stop offset="0.667" stop-color="#8d00ff"/><stop offset="0.704" stop-color="#9700ff"/><stop offset="0.741" stop-color="#a100ff"/><stop offset="0.778" stop-color="#ac00ff"/><stop offset="0.815" stop-color="#b600ff"/><stop offset="0.852" stop-color="#c100ff"/><stop offset="0.889" stop-color="#cb00ff"/><stop offset="0.926" stop-color="#d500ff"/><stop offset="0.963" stop-color="#e000ff"/><stop offset="1.000" stop-color="#ea00ff"/></linearGradient>
<linearGradient id="r61" gradientUnits="userSpaceOnUse" x1="64.0" y1="0" x2="168.5" y2="0"><stop offset="0.000" stop-color="#001aff"/><stop offset="0.037" stop-color="#0017ff"/><stop offset="0.074" stop-color="#0014ff"/><stop offset="0.111" stop-color="#0011ff"/><stop offset="0.148" stop-color="#000eff"/><stop offset="0.185" stop-color="#000aff"/><stop offset="0.222" stop-color="#0b07ff"/><stop offset="0.259" stop-color="#1603ff"/><stop offset="0.296" stop-color="#2100ff"/><stop offset="0.333" stop-color="#2c00ff"/><stop offset="0.370" stop-color="#3700ff"/><stop offset="0.407" stop-color="#4100ff"/><stop offset="0.444" stop-color="#4b00ff"/><stop offset="0.481" stop-color="#5500ff"/><stop offset="0.519" stop-color="#5f00ff"/><stop offset="0.556" stop-color="#6900ff"/><stop offset="0.593" stop-color="#7300ff"/><stop offset="0.630" stop-color="#7d00ff"/><stop offset="0.667" stop-color="#8700ff"/><stop offset="0.704" stop-color="#9100ff"/><stop offset="0.741" stop-color="#9b00ff"/><stop offset="0.778" stop-color="#a500ff"/><stop offset="0.815" stop-color="#af00ff"/><stop offset="0.852" stop-color="#b900ff"/><stop offset="0.889" stop-color="#c200ff"/><stop offset="0.926" stop-color="#cc00ff"/><stop offset="0.963" stop-color="#d600ff"/><stop offset="1.000" stop-color="#e000ff"/></linearGradient>
<linearGradient id="r62" gradientUnits="userSpaceOnUse" x1="65.5" y1="0" x2="166.5" y2="0"><stop offset="0.000" stop-color="#0017ff"/><stop offset="0.038" stop-color="#0014ff"/><stop offset="0.077" stop-color="#0011ff"/><stop offset="0.115" stop-color="#000eff"/><stop offset="0.154" stop-color="#000aff"/><stop offset="0.192" stop-color="#0207ff"/><stop offset="0.231" stop-color="#0e03ff"/><stop offset="0.269" stop-color="#1a00ff"/><stop offset="0.308" stop-color="#2400ff"/><stop offset="0.346" stop-color="#2f00ff"/><stop offset="0.385" stop-color="#3900ff"/><stop offset="0.423" stop-color="#4300ff"/><stop offset="0.462" stop-color="#4d00ff"/><stop offset="0.500" stop-color="#5700ff"/><stop offset="0.538" stop-color="#6100ff"/><stop offset="0.577" stop-color="#6b00ff"/><stop offset="0.615" stop-color="#7500ff"/><stop offset="0.654" stop-color="#7f00ff"/><stop offset="0.692" stop-color="#8800ff"/><stop offset="0.731" stop-color="#9200ff"/><stop offset="0.769" stop-color="#9c00ff"/><stop offset="0.808" stop-color="#a600ff"/><stop offset="0.846" stop-color="#b000ff"/><stop offset="0.885" stop-color="#b900ff"/><stop offset="0.923" stop-color="#c300ff"/><stop offset="0.962" stop-color="#cd00ff"/><stop offset="1.000" stop-color="#d700ff"/></linearGradient>
<linearGradient id="r63" gradientUnits="userSpaceOnUse" x1="67.0" y1="0" x2="164.5" y2="0"><stop offset="0.000" stop-color="#0014ff"/><stop offset="0.040" stop-color="#0011ff"/><stop offset="0.080" stop-color="#000eff"/><stop offset="0.120" stop-color="#000aff"/><stop offset="0.160" stop-color="#0007ff"/><stop offset="0.200" stop-color="#0603ff"/><stop offset="0.240" stop-color="#1200ff"/><stop offset="0.280" stop-color="#1d00ff"/><stop offset="0.320" stop-color="#2700ff"/><stop offset="0.360" stop-color="#3200ff"/><stop offset="0.400" stop-color="#3c00ff"/><stop offset="0.440" stop-color="#4600ff"/><stop offset="0.480" stop-color="#5000ff"/><stop offset="0.520" stop-color="#5900ff"/><stop offset="0.560" stop-color="#6300ff"/><stop offset="0.600" stop-color="#6d00ff"/><stop offset="0.640" stop-color="#7700ff"/><stop offset="0.680" stop-color="#8000ff"/><stop offset="0.720" stop-color="#8a00ff"/><stop offset="0.760" stop-color="#9400ff"/><stop offset="0.800" stop-color="#9d00ff"/><stop offset="0.840" stop-color="#a700ff"/><stop offset="0.880" stop-color="#b000ff"/><stop offset="0.920" stop-color="#ba00ff"/><stop offset="0.960" stop-color="#c400ff"/><stop offset="1.000" stop-color="#cd00ff"/></linearGradient>
<linearGradient id="r64" gradientUnits="userSpaceOnUse" x1="68.5" y1="0" x2="163.0" y2="0"><stop offset="0.000" stop-color="#0011ff"/><stop offset="0.042" stop-color="#000eff"/><stop offset="0.083" stop-color="#000bff"/><stop offset="0.125" stop-color="#0007ff"/><stop offset="0.167" stop-color="#0004ff"/><stop offset="0.208" stop-color="#0a00ff"/><stop offset="0.250" stop-color="#1600ff"/><stop offset="0.292" stop-color="#2000ff"/><stop offset="0.333" stop-color="#2b00ff"/><stop offset="0.375" stop-color="#3500ff"/><stop offset="0.417" stop-color="#3f00ff"/><stop offset="0.458" stop-color="#4900ff"/><stop offset="0.500" stop-color="#5200ff"/><stop offset="0.542" stop-color="#5c00ff"/><stop offset="0.583" stop-color="#6600ff"/><stop offset="0.625" stop-color="#6f00ff"/><stop offset="0.667" stop-color="#7900ff"/><stop offset="0.708" stop-color="#8300ff"/><stop offset="0.750" stop-color="#8c00ff"/><stop offset="0.792" stop-color="#9600ff"/><stop offset="0.833" stop-color="#9f00ff"/><stop offset="0.875" stop-color="#a900ff"/><stop offset="0.917" stop-color="#b300ff"/><stop offset="0.958" stop-color="#bc00ff"/><stop offset="1.000" stop-color="#c600ff"/></linearGradient>
<linearGradient id="r65" gradientUnits="userSpaceOnUse" x1="70.0" y1="0" x2="161.0" y2="0"><stop offset="0.000" stop-color="#000eff"/><stop offset="0.043" stop-color="#000bff"/><stop offset="0.087" stop-color="#0007ff"/><stop offset="0.130" stop-color="#0004ff"/><stop offset="0.174" stop-color="#0200ff"/><stop offset="0.217" stop-color="#0e00ff"/><stop offset="0.261" stop-color="#1900ff"/><stop offset="0.304" stop-color="#2300ff"/><stop offset="0.348" stop-color="#2d00ff"/><stop offset="0.391" stop-color="#3700ff"/><stop offset="0.435" stop-color="#4100ff"/><stop offset="0.478" stop-color="#4b00ff"/><stop offset="0.522" stop-color="#5500ff"/><stop offset="0.565" stop-color="#5e00ff"/><stop offset="0.609" stop-color="#6800ff"/><stop offset="0.652" stop-color="#7100ff"/><stop offset="0.696" stop-color="#7b00ff"/><stop offset="0.739" stop-color="#8400ff"/><stop offset="0.783" stop-color="#8e00ff"/><stop offset="0.826" stop-color="#9700ff"/><stop offset="0.870" stop-color="#a100ff"/><stop offset="0.913" stop-color="#aa00ff"/><stop offset="0.957" stop-color="#b400ff"/><stop offset="1.000" stop-color="#bd00ff"/></linearGradient>
<linearGradient id="r66" gradientUnits="userSpaceOnUse" x1="71.5" y1="0" x2="159.0" y2="0"><stop offset="0.000" stop-color="#000bff"/><stop offset="0.045" stop-color="#0008ff"/><stop offset="0.091" stop-color="#0004ff"/><stop offset="0.136" stop-color="#0000ff"/><stop offset="0.182" stop-color="#0600ff"/><stop offset="0.227" stop-color="#1100ff"/><stop offset="0.273" stop-color="#1c00ff"/><stop offset="0.318" stop-color="#2600ff"/><stop offset="0.364" stop-color="#3000ff"/><stop offset="0.409" stop-color="#3a00ff"/><stop offset="0.455" stop-color="#4400ff"/><stop offset="0.500" stop-color="#4d00ff"/><stop offset="0.545" stop-color="#5700ff"/><stop offset="0.591" stop-color="#6000ff"/><stop offset="0.636" stop-color="#6a00ff"/><stop offset="0.682" stop-color="#7300ff"/><stop offset="0.727" stop-color="#7d00ff"/><stop offset="0.773" stop-color="#8600ff"/><stop offset="0.818" stop-color="#8f00ff"/><stop offset="0.864" stop-color="#9900ff"/><stop offset="0.909" stop-color="#a200ff"/><stop offset="0.955" stop-color="#ab00ff"/><stop offset="1.000" stop-color="#b500ff"/></linearGradient>
<linearGradient id="r67" gradientUnits="userSpaceOnUse" x1="73.0" y1="0" x2="157.0" y2="0"><stop offset="0.000" stop-color="#0008ff"/><stop offset="0.048" stop-color="#0005ff"/><stop offset="0.095" stop-color="#0001ff"/><stop offset="0.143" stop-color="#0000ff"/><stop offset="0.190" stop-color="#0900ff"/><stop offset="0.238" stop-color="#1400ff"/><stop offset="0.286" stop-color="#1f00ff"/><stop offset="0.333" stop-color="#2900ff"/><stop offset="0.381" stop-color="#3300ff"/><stop offset="0.429" stop-color="#3c00ff"/><stop offset="0.476" stop-color="#4600ff"/><stop offset="0.524" stop-color="#4f00ff"/><stop offset="0.571" stop-color="#5900ff"/><stop offset="0.619" stop-color="#6200ff"/><stop offset="0.667" stop-color="#6c00ff"/><stop offset="0.714" stop-color="#7500ff"/><stop offset="0.762" stop-color="#7e00ff"/><stop offset="0.810" stop-color="#8800ff"/><stop offset="0.857" stop-color="#9100ff"/><stop offset="0.905" stop-color="#9a00ff"/><stop offset="0.952" stop-color="#a300ff"/><stop offset="1.000" stop-color="#ad00ff"/></linearGradient>
<linearGradient id="r68" gradientUnits="userSpaceOnUse" x1="74.5" y1="0" x2="155.0" y2="0"><stop offset="0.000" stop-color="#0005ff"/><stop offset="0.048" stop-color="#0002ff"/><stop offset="0.095" stop-color="#0000ff"/><stop offset="0.143" stop-color="#0000ff"/><stop offset="0.190" stop-color="#0b00ff"/><stop offset="0.238" stop-color="#1500ff"/><stop offset="0.286" stop-color="#1f00ff"/><stop offset="0.333" stop-color="#2800ff"/><stop offset="0.381" stop-color="#3200ff"/><stop offset="0.429" stop-color="#3b00ff"/><stop offset="0.476" stop-color="#4400ff"/><stop offset="0.524" stop-color="#4d00ff"/><stop offset="0.571" stop-color="#5600ff"/><stop offset="0.619" stop-color="#5f00ff"/><stop offset="0.667" stop-color="#6700ff"/><stop offset="0.714" stop-color="#7000ff"/><stop offset="0.762" stop-color="#7900ff"/><stop offset="0.810" stop-color="#8200ff"/><stop offset="0.857" stop-color="#8b00ff"/><stop offset="0.905" stop-color="#9300ff"/><stop offset="0.952" stop-color="#9c00ff"/><stop offset="1.000" stop-color="#a500ff"/></linearGradient>
<linearGradient id="r69" gradientUnits="userSpaceOnUse" x1="76.0" y1="0" x2="153.0" y2="0"><stop offset="0.000" stop-color="#0002ff"/><stop offset="0.050" stop-color="#0000ff"/><stop offset="0.100" stop-color="#0000ff"/><stop offset="0.150" stop-color="#0300ff"/><stop offset="0.200" stop-color="#0e00ff"/><stop offset="0.250" stop-color="#1800ff"/><stop offset="0.300" stop-color="#2100ff"/><stop offset="0.350" stop-color="#2b00ff"/><stop offset="0.400" stop-color="#3400ff"/><stop offset="0.450" stop-color="#3d00ff"/><stop offset="0.500" stop-color="#4600ff"/><stop offset="0.550" stop-color="#4f00ff"/><stop offset="0.600" stop-color="#5800ff"/><stop offset="0.650" stop-color="#6000ff"/><stop offset="0.700" stop-color="#6900ff"/><stop offset="0.750" stop-color="#7200ff"/><stop offset="0.800" stop-color="#7b00ff"/><stop offset="0.850" stop-color="#8300ff"/><stop offset="0.900" stop-color="#8c00ff"/><stop offset="0.950" stop-color="#9400ff"/><stop offset="1.000" stop-color="#9d00ff"/></linearGradient>
<linearGradient id="r70" gradientUnits="userSpaceOnUse" x1="77.5" y1="0" x2="151.0" y2="0"><stop offset="0.000" stop-color="#0000ff"/><stop offset="0.053" stop-color="#0000ff"/><stop offset="0.105" stop-color="#0000ff"/><stop offset="0.158" stop-color="#0700ff"/><stop offset="0.211" stop-color="#1100ff"/><stop offset="0.263" stop-color="#1b00ff"/><stop offset="0.316" stop-color="#2400ff"/><stop offset="0.368" stop-color="#2d00ff"/><stop offset="0.421" stop-color="#3600ff"/><stop offset="0.474" stop-color="#3f00ff"/><stop offset="0.526" stop-color="#4800ff"/><stop offset="0.579" stop-color="#5100ff"/><stop offset="0.632" stop-color="#5a00ff"/><stop offset="0.684" stop-color="#6200ff"/><stop offset="0.737" stop-color="#6b00ff"/><stop offset="0.789" stop-color="#7300ff"/><stop offset="0.842" stop-color="#7c00ff"/><stop offset="0.895" stop-color="#8500ff"/><stop offset="0.947" stop-color="#8d00ff"/><stop offset="1.000" stop-color="#9600ff"/></linearGradient>
<linearGradient id="r71" gradientUnits="userSpaceOnUse" x1="79.5" y1="0" x2="149.0" y2="0"><stop offset="0.000" stop-color="#0000ff"/><stop offset="0.056" stop-color="#0000ff"/><stop offset="0.111" stop-color="#0000ff"/><stop offset="0.167" stop-color="#0b00ff"/><stop offset="0.222" stop-color="#1500ff"/><stop offset="0.278" stop-color="#1e00ff"/><stop offset="0.333" stop-color="#2700ff"/><stop offset="0.389" stop-color="#3000ff"/><stop offset="0.444" stop-color="#3900ff"/><stop offset="0.500" stop-color="#4200ff"/><stop offset="0.556" stop-color="#4b00ff"/><stop offset="0.611" stop-color="#5300ff"/><stop offset="0.667" stop-color="#5c00ff"/><stop offset="0.722" stop-color="#6400ff"/><stop offset="0.778" stop-color="#6d00ff"/><stop offset="0.833" stop-color="#7500ff"/><stop offset="0.889" stop-color="#7e00ff"/><stop offset="0.944" stop-color="#8600ff"/><stop offset="1.000" stop-color="#8f00ff"/></linearGradient>
<linearGradient id="r72" gradientUnits="userSpaceOnUse" x1="81.0" y1="0" x2="147.5" y2="0"><stop offset="0.000" stop-color="#0000ff"/><stop offset="0.059" stop-color="#0000ff"/><stop offset="0.118" stop-color="#0400ff"/><stop offset="0.176" stop-color="#0e00ff"/><stop offset="0.235" stop-color="#1800ff"/><stop offset="0.294" stop-color="#2100ff"/><stop offset="0.353" stop-color="#2a00ff"/><stop offset="0.412" stop-color="#3300ff"/><stop offset="0.471" stop-color="#3c00ff"/><stop offset="0.529" stop-color="#4500ff"/><stop offset="0.588" stop-color="#4d00ff"/><stop offset="0.647" stop-color="#5600ff"/><stop offset="0.706" stop-color="#5e00ff"/><stop offset="0.765" stop-color="#6700ff"/><stop offset="0.824" stop-color="#6f00ff"/><stop offset="0.882" stop-color="#7800ff"/><stop offset="0.941" stop-color="#8000ff"/><stop offset="1.000" stop-color="#8900ff"/></linearGradient>
<linearGradient id="r73" gradientUnits="userSpaceOnUse" x1="83.0" y1="0" x2="145.5" y2="0"><stop offset="0.000" stop-color="#0000ff"/><stop offset="0.062" stop-color="#0000ff"/><stop offset="0.125" stop-color="#0800ff"/><stop offset="0.188" stop-color="#1200ff"/><stop offset="0.250" stop-color="#1c00ff"/><stop offset="0.312" stop-color="#2500ff"/><stop offset="0.375" stop-color="#2e00ff"/><stop offset="0.438" stop-color="#3600ff"/><stop offset="0.500" stop-color="#3f00ff"/><stop offset="0.562" stop-color="#4700ff"/><stop offset="0.625" stop-color="#5000ff"/><stop offset="0.688" stop-color="#5800ff"/><stop offset="0.750" stop-color="#6100ff"/><stop offset="0.812" stop-color="#6900ff"/><stop offset="0.875" stop-color="#7100ff"/><stop offset="0.938" stop-color="#7a00ff"/><stop offset="1.000" stop-color="#8200ff"/></linearGradient>
<linearGradient id="r74" gradientUnits="userSpaceOnUse" x1="85.0" y1="0" x2="143.5" y2="0"><stop offset="0.000" stop-color="#0000ff"/><stop offset="0.067" stop-color="#0200ff"/><stop offset="0.133" stop-color="#0c00ff"/><stop offset="0.200" stop-color="#1600ff"/><stop offset="0.267" stop-color="#1f00ff"/><stop offset="0.333" stop-color="#2800ff"/><stop offset="0.400" stop-color="#3100ff"/><stop offset="0.467" stop-color="#3900ff"/><stop offset="0.533" stop-color="#4200ff"/><stop offset="0.600" stop-color="#4a00ff"/><stop offset="0.667" stop-color="#5200ff"/><stop offset="0.733" stop-color="#5b00ff"/><stop offset="0.800" stop-color="#6300ff"/><stop offset="0.867" stop-color="#6b00ff"/><stop offset="0.933" stop-color="#7300ff"/><stop offset="1.000" stop-color="#7b00ff"/></linearGradient>
<linearGradient id="r75" gradientUnits="userSpaceOnUse" x1="87.0" y1="0" x2="141.5" y2="0"><stop offset="0.000" stop-color="#0000ff"/><stop offset="0.071" stop-color="#0700ff"/><stop offset="0.143" stop-color="#1000ff"/><stop offset="0.214" stop-color="#1900ff"/><stop offset="0.286" stop-color="#2200ff"/><stop offset="0.357" stop-color="#2b00ff"/><stop offset="0.429" stop-color="#3300ff"/><stop offset="0.500" stop-color="#3c00ff"/><stop offset="0.571" stop-color="#4400ff"/><stop offset="0.643" stop-color="#4c00ff"/><stop offset="0.714" stop-color="#5500ff"/><stop offset="0.786" stop-color="#5d00ff"/><stop offset="0.857" stop-color="#6500ff"/><stop offset="0.929" stop-color="#6d00ff"/><stop offset="1.000" stop-color="#7500ff"/></linearGradient>
<linearGradient id="r76" gradientUnits="userSpaceOnUse" x1="89.0" y1="0" x2="139.5" y2="0"><stop offset="0.000" stop-color="#0000ff"/><stop offset="0.077" stop-color="#0b00ff"/><stop offset="0.154" stop-color="#1400ff"/><stop offset="0.231" stop-color="#1d00ff"/><stop offset="0.308" stop-color="#2600ff"/><stop offset="0.385" stop-color="#2e00ff"/><stop offset="0.462" stop-color="#3600ff"/><stop offset="0.538" stop-color="#3f00ff"/><stop offset="0.615" stop-color="#4700ff"/><stop offset="0.692" stop-color="#4f00ff"/><stop offset="0.769" stop-color="#5700ff"/><stop offset="0.846" stop-color="#5f00ff"/><stop offset="0.923" stop-color="#6700ff"/><stop offset="1.000" stop-color="#6f00ff"/></linearGradient>
<linearGradient id="r77" gradientUnits="userSpaceOnUse" x1="91.0" y1="0" x2="137.5" y2="0"><stop offset="0.000" stop-color="#0500ff"/><stop offset="0.083" stop-color="#0f00ff"/><stop offset="0.167" stop-color="#1800ff"/><stop offset="0.250" stop-color="#2000ff"/><stop offset="0.333" stop-color="#2900ff"/><stop offset="0.417" stop-color="#3100ff"/><stop offset="0.500" stop-color="#3900ff"/><stop offset="0.583" stop-color="#4100ff"/><stop offset="0.667" stop-color="#4900ff"/><stop offset="0.750" stop-color="#5100ff"/><stop offset="0.833" stop-color="#5900ff"/><stop offset="0.917" stop-color="#6100ff"/><stop offset="1.000" stop-color="#6900ff"/></linearGradient>
<linearGradient id="r78" gradientUnits="userSpaceOnUse" x1="93.0" y1="0" x2="135.5" y2="0"><stop offset="0.000" stop-color="#0900ff"/><stop offset="0.091" stop-color="#1200ff"/><stop offset="0.182" stop-color="#1b00ff"/><stop offset="0.273" stop-color="#2300ff"/><stop offset="0.364" stop-color="#2c00ff"/><stop offset="0.455" stop-color="#3400ff"/><stop offset="0.545" stop-color="#3c00ff"/><stop offset="0.636" stop-color="#4400ff"/><stop offset="0.727" stop-color="#4b00ff"/><stop offset="0.818" stop-color="#5300ff"/><stop offset="0.909" stop-color="#5b00ff"/><stop offset="1.000" stop-color="#6300ff"/></linearGradient>
<linearGradient id="r79" gradientUnits="userSpaceOnUse" x1="95.5" y1="0" x2="133.5" y2="0"><stop offset="0.000" stop-color="#0e00ff"/><stop offset="0.100" stop-color="#1700ff"/><stop offset="0.200" stop-color="#1f00ff"/><stop offset="0.300" stop-color="#2700ff"/><stop offset="0.400" stop-color="#2f00ff"/><stop offset="0.500" stop-color="#3700ff"/><stop offset="0.600" stop-color="#3f00ff"/><stop offset="0.700" stop-color="#4600ff"/><stop offset="0.800" stop-color="#4e00ff"/><stop offset="0.900" stop-color="#5500ff"/><stop offset="1.000" stop-color="#5d00ff"/></linearGradient>
<linearGradient id="r80" gradientUnits="userSpaceOnUse" x1="98.0" y1="0" x2="131.5" y2="0"><stop offset="0.000" stop-color="#1300ff"/><stop offset="0.111" stop-color="#1b00ff"/><stop offset="0.222" stop-color="#2300ff"/><stop offset="0.333" stop-color="#2b00ff"/><stop offset="0.444" stop-color="#3200ff"/><stop offset="0.556" stop-color="#3a00ff"/><stop offset="0.667" stop-color="#4100ff"/><stop offset="0.778" stop-color="#4900ff"/><stop offset="0.889" stop-color="#5000ff"/><stop offset="1.000" stop-color="#5700ff"/></linearGradient>
<linearGradient id="r81" gradientUnits="userSpaceOnUse" x1="100.0" y1="0" x2="130.0" y2="0"><stop offset="0.000" stop-color="#1600ff"/><stop offset="0.125" stop-color="#1e00ff"/><stop offset="0.250" stop-color="#2600ff"/><stop offset="0.375" stop-color="#2e00ff"/><stop offset="0.500" stop-color="#3500ff"/><stop offset="0.625" stop-color="#3d00ff"/><stop offset="0.750" stop-color="#4400ff"/><stop offset="0.875" stop-color="#4b00ff"/><stop offset="1.000" stop-color="#5300ff"/></linearGradient>
<linearGradient id="r82" gradientUnits="userSpaceOnUse" x1="102.5" y1="0" x2="128.0" y2="0"><stop offset="0.000" stop-color="#1b00ff"/><stop offset="0.143" stop-color="#2200ff"/><stop offset="0.286" stop-color="#2a00ff"/><stop offset="0.429" stop-color="#3100ff"/><stop offset="0.571" stop-color="#3800ff"/><stop offset="0.714" stop-color="#3f00ff"/><stop offset="0.857" stop-color="#4600ff"/><stop offset="1.000" stop-color="#4d00ff"/></linearGradient>
<linearGradient id="r83" gradientUnits="userSpaceOnUse" x1="105.0" y1="0" x2="126.0" y2="0"><stop offset="0.000" stop-color="#1f00ff"/><stop offset="0.167" stop-color="#2600ff"/><stop offset="0.333" stop-color="#2d00ff"/><stop offset="0.500" stop-color="#3400ff"/><stop offset="0.667" stop-color="#3a00ff"/><stop offset="0.833" stop-color="#4100ff"/><stop offset="1.000" stop-color="#4800ff"/></linearGradient>
<linearGradient id="r84" gradientUnits="userSpaceOnUse" x1="107.5" y1="0" x2="124.0" y2="0"><stop offset="0.000" stop-color="#2300ff"/><stop offset="0.200" stop-color="#2900ff"/><stop offset="0.400" stop-color="#3000ff"/><stop offset="0.600" stop-color="#3600ff"/><stop offset="0.800" stop-color="#3c00ff"/><stop offset="1.000" stop-color="#4300ff"/></linearGradient>
<linearGradient id="r85" gradientUnits="userSpaceOnUse" x1="110.0" y1="0" x2="122.0" y2="0"><stop offset="0.000" stop-color="#2700ff"/><stop offset="0.333" stop-color="#2e00ff"/><stop offset="0.667" stop-color="#3600ff"/><stop offset="1.000" stop-color="#3e00ff"/></linearGradient>
<linearGradient id="r86" gradientUnits="userSpaceOnUse" x1="112.5" y1="0" x2="120.0" y2="0"><stop offset="0.000" stop-color="#2a00ff"/><stop offset="0.500" stop-color="#3200ff"/><stop offset="1.000" stop-color="#3900ff"/></linearGradient>
<linearGradient id="r87" gradientUnits="userSpaceOnUse" x1="115.0" y1="0" x2="118.0" y2="0"><stop offset="0.000" stop-color="#2e00ff"/><stop offset="1.000" stop-color="#3400ff"/></linearGradient>
<clipPath id="rgbclip"><rect x="273.5" y="81.5" width="250.0" height="94.5"/></clipPath>
<linearGradient id="bg1" x1="0" y1="0" x2="0" y2="1"><stop offset="0" stop-color="rgb(36,36,36)"/><stop offset="0.5" stop-color="rgb(36,36,36)"/><stop offset="1" stop-color="rgb(24,24,24)"/></linearGradient>
<linearGradient id="bg2" x1="0" y1="0" x2="0" y2="1"><stop offset="0" stop-color="rgb(61,61,61)"/><stop offset="0.5" stop-color="rgb(61,61,61)"/><stop offset="1" stop-color="rgb(39,39,39)"/></linearGradient>
<linearGradient id="bg3" x1="0" y1="0" x2="0" y2="1"><stop offset="0" stop-color="rgb(86,86,86)"/><stop offset="0.5" stop-color="rgb(86,86,86)"/><stop offset="1" stop-color="rgb(55,55,55)"/></linearGradient>
<linearGradient id="bg4" x1="0" y1="0" x2="0" y2="1"><stop offset="0" stop-color="rgb(112,112,112)"/><stop offset="0.5" stop-color="rgb(112,112,112)"/><stop offset="1" stop-color="rgb(71,71,71)"/></linearGradient>
<linearGradient id="bg5" x1="0" y1="0" x2="0" y2="1"><stop offset="0" stop-color="rgb(138,138,138)"/><stop offset="0.5" stop-color="rgb(138,138,138)"/><stop offset="1" stop-color="rgb(87,87,87)"/></linearGradient>
<linearGradient id="bg6" x1="0" y1="0" x2="0" y2="1"><stop offset="0" stop-color="rgb(163,163,163)"/><stop offset="0.5" stop-color="rgb(163,163,163)"/><stop offset="1" stop-color="rgb(102,102,102)"/></linearGradient>
<linearGradient id="bg7" x1="0" y1="0" x2="0" y2="1"><stop offset="0" stop-color="rgb(188,188,188)"/><stop offset="0.5" stop-color="rgb(188,188,188)"/><stop offset="1" stop-color="rgb(118,118,118)"/></linearGradient>
<linearGradient id="bg8" x1="0" y1="0" x2="0" y2="1"><stop offset="0" stop-color="rgb(214,214,214)"/><stop offset="0.5" stop-color="rgb(214,214,214)"/><stop offset="1" stop-color="rgb(134,134,134)"/></linearGradient>
<linearGradient id="bg9" x1="0" y1="0" x2="0" y2="1"><stop offset="0" stop-color="rgb(240,240,240)"/><stop offset="0.5" stop-color="rgb(240,240,240)"/><stop offset="1" stop-color="rgb(150,150,150)"/></linearGradient>
<linearGradient id="bg10" x1="0" y1="0" x2="0" y2="1"><stop offset="0" stop-color="rgb(255,255,255)"/><stop offset="0.5" stop-color="rgb(255,255,255)"/><stop offset="1" stop-color="rgb(166,166,166)"/></linearGradient>
<linearGradient id="cb108" x1="0" y1="0" x2="0" y2="1"><stop offset="0" stop-color="#ffffff"/><stop offset="1" stop-color="#b0b0b0"/></linearGradient>
<linearGradient id="cb109" x1="0" y1="0" x2="0" y2="1"><stop offset="0" stop-color="#d02848"/><stop offset="1" stop-color="#902030"/></linearGradient>
<linearGradient id="cb110" x1="0" y1="0" x2="0" y2="1"><stop offset="0" stop-color="#38c038"/><stop offset="1" stop-color="#208020"/></linearGradient>
<linearGradient id="cb111" x1="0" y1="0" x2="0" y2="1"><stop offset="0" stop-color="#2828e0"/><stop offset="1" stop-color="#1818a0"/></linearGradient>
<linearGradient id="cb112" x1="0" y1="0" x2="0" y2="1"><stop offset="0" stop-color="#20c8d0"/><stop offset="1" stop-color="#109098"/></linearGradient>
<linearGradient id="cb113" x1="0" y1="0" x2="0" y2="1"><stop offset="0" stop-color="#d828d8"/><stop offset="1" stop-color="#901890"/></linearGradient>
<linearGradient id="cb114" x1="0" y1="0" x2="0" y2="1"><stop offset="0" stop-color="#d0d028"/><stop offset="1" stop-color="#909018"/></linearGradient>
<linearGradient id="eotfg" gradientUnits="userSpaceOnUse" x1="550" y1="0" x2="737" y2="0"><stop offset="0" stop-color="#e2e230"/><stop offset="0.35" stop-color="#dcdc34"/><stop offset="0.62" stop-color="#dcdc34" stop-opacity="0"/><stop offset="1" stop-color="#dcdc34" stop-opacity="0"/></linearGradient>
<linearGradient id="swg" x1="0" y1="0" x2="0" y2="1"><stop offset="0" stop-color="#8c8c8c"/><stop offset="0.6" stop-color="#7a7a7a"/><stop offset="0.66" stop-color="#5c5c5c"/><stop offset="1" stop-color="#686868"/></linearGradient>
<linearGradient id="btg" x1="0" y1="0" x2="0" y2="1"><stop offset="0" stop-color="#a0a0a0"/><stop offset="1" stop-color="#747474"/></linearGradient>
</defs>
<rect x="0" y="0" width="750" height="441" fill="#333333"/>
<rect x="0" y="400" width="750" height="17" fill="url(#botg)"/>
<rect x="744.5" y="25" width="5.5" height="392" fill="#292929"/>
<rect x="0" y="0" width="750" height="25.2" fill="#1f1f1f"/>
<rect x="74" y="4.3" width="676" height="1.9" fill="url(#rain)"/>
<path d="M0 0H71.5V7.5Q71.5 10.2 68.5 10.2H0Z" fill="url(#redg)"/><rect x="0" y="0" width="1.2" height="10.2" fill="#a00810"/>
<path d="M13.5 0L18.1 4.7L13.5 9.5L8.9 4.7Z" fill="#ffe4e4" fill-opacity="0.93"/>
<g fill="#e84050"><path d="M13.5 1.9l1.2 1.2l-1.2 1.2l-1.2-1.2z"/><path d="M13.5 5.1l1.2 1.2l-1.2 1.2l-1.2-1.2z"/><path d="M11.9 3.5l1.2 1.2l-1.2 1.2l-1.2-1.2z"/><path d="M15.1 3.5l1.2 1.2l-1.2 1.2l-1.2-1.2z"/></g>
<text x="19.5" y="7.5" font-size="10.2" fill="#ffecec" font-weight="bold" textLength="33.6" lengthAdjust="spacingAndGlyphs">calman</text>
<circle cx="64.7" cy="4.9" r="3.6" fill="#c4101a"/><path d="M62.7 4L66.7 4L64.7 6.6Z" fill="#fff"/>
<rect x="0" y="13.2" width="10.6" height="10" rx="1.5" fill="url(#playg)"/><path d="M3.6 15.4L7.6 18.2L3.6 21Z" fill="#eee"/>
<path d="M12 25V15Q12 13.2 13.8 13.2H68.2Q70 13.2 70 15V25Z" fill="#3a3a3a"/>
<rect x="34.3" y="14" width="0.8" height="10" fill="#555"/><rect x="57.6" y="14" width="0.8" height="10" fill="#555"/>
<text x="14.3" y="20.6" font-size="4.6" fill="#7e7e7e" textLength="17.5" lengthAdjust="spacingAndGlyphs">History 1</text>
<text x="36.8" y="20.6" font-size="4.6" fill="#f0f0f0" font-weight="bold" textLength="18.3" lengthAdjust="spacingAndGlyphs">History 2</text>
<path d="M62.6 20.6L64.2 17.2L65.8 20.6Z" fill="#5a5a5a"/>
<rect x="525.6" y="13.2" width="73.2" height="11.2" rx="1" fill="url(#mbg)"/>
<rect x="525.6" y="13.2" width="2.2" height="11.2" fill="#18c828"/>
<path d="M576.0999999999999 18.5h3.4l-1.7 2.2z" fill="#eee"/>
<text x="529.3" y="17.6" font-size="4.9" fill="#ffffff" textLength="43.5" lengthAdjust="spacingAndGlyphs">Konica Minolta CA-410</text>
<text x="529.3" y="22.6" font-size="4.9" fill="#ffffff" textLength="29.5" lengthAdjust="spacingAndGlyphs">All Display Types</text>
<circle cx="593.3" cy="18.7" r="5.3" fill="#1414f0" stroke="#fff" stroke-width="0.5"/>
<text x="593.3" y="20.0" font-size="3.4" fill="#fff" text-anchor="middle">34</text>
<rect x="602" y="13.2" width="64.6" height="11.2" rx="1" fill="url(#mbg)"/>
<rect x="602" y="13.2" width="2.2" height="11.2" fill="#18c828"/>
<path d="M658.8 18.5h3.4l-1.7 2.2z" fill="#eee"/>
<text x="605.2" y="17.6" font-size="4.9" fill="#ffffff" textLength="49.6" lengthAdjust="spacingAndGlyphs">SpectraCal VideoForge Pro</text>
<rect x="668.7" y="13.2" width="56" height="11.2" rx="1" fill="url(#mbg)"/>
<rect x="668.7" y="13.2" width="2.2" height="11.2" fill="#e8e018"/>
<path d="M716.9 18.5h3.4l-1.7 2.2z" fill="#eee"/>
<text x="672.3" y="17.6" font-size="4.9" fill="#ffffff" textLength="41.8" lengthAdjust="spacingAndGlyphs">Direct Display Control</text>
<rect x="726.3" y="13.2" width="12.7" height="11.2" rx="1.5" fill="url(#tbg)" stroke="#9a9a9a" stroke-width="0.5"/><circle cx="732.6" cy="18.6" r="2.3" fill="none" stroke="#dedede" stroke-width="1.3"/><circle cx="732.6" cy="18.6" r="0.9" fill="#444"/>
<rect x="740.2" y="13.2" width="12" height="11.2" rx="1.5" fill="url(#tbg)" stroke="#9a9a9a" stroke-width="0.5"/><path d="M747.2 16.4L744 18.7L747.2 21Z" fill="#d8d8d8"/>
<text x="4" y="58.8" font-size="17.2" fill="#f2f2f2" textLength="187.5" lengthAdjust="spacingAndGlyphs">Pre Calibration Capture</text>
<text x="215.6" y="59" font-size="8.4" fill="#e6e6e6" textLength="304.2" lengthAdjust="spacingAndGlyphs">Press the Read Series button to capture Grayscale and Color performance data pre-calibration.</text>
<rect x="535.8" y="50.2" width="210.2" height="13.8" fill="url(#ddg)"/>
<text x="538.6" y="60.6" font-size="9.6" fill="#f2f2f2" textLength="96.6" lengthAdjust="spacingAndGlyphs">11 Point 10% step 0-100%</text>
<path d="M738.8 56h4.4l-2.2 2.8z" fill="#0a0a0a"/>
<rect x="16.5" y="81.5" width="236.0" height="181.5" fill="#262626"/>
<g clip-path="url(#locclip)" shape-rendering="crispEdges">
<rect x="25.5" y="84" width="29.0" height="2" fill="url(#r0)"/>
<rect x="21.0" y="86" width="53.5" height="2" fill="url(#r1)"/>
<rect x="19.0" y="88" width="73.5" height="2" fill="url(#r2)"/>
<rect x="17.5" y="90" width="92.5" height="2" fill="url(#r3)"/>
<rect x="17.0" y="92" width="110.5" height="2" fill="url(#r4)"/>
<rect x="16.5" y="94" width="128.5" height="2" fill="url(#r5)"/>
<rect x="16.5" y="96" width="145.5" height="2" fill="url(#r6)"/>
<rect x="16.5" y="98" width="163.0" height="2" fill="url(#r7)"/>
<rect x="16.5" y="100" width="180.5" height="2" fill="url(#r8)"/>
<rect x="16.5" y="102" width="197.5" height="2" fill="url(#r9)"/>
<rect x="16.5" y="104" width="215.0" height="2" fill="url(#r10)"/>
<rect x="17.0" y="106" width="232.0" height="2" fill="url(#r11)"/>
<rect x="17.0" y="108" width="236.0" height="2" fill="url(#r12)"/>
<rect x="17.5" y="110" width="235.5" height="2" fill="url(#r13)"/>
<rect x="18.0" y="112" width="235.0" height="2" fill="url(#r14)"/>
<rect x="18.5" y="114" width="234.5" height="2" fill="url(#r15)"/>
<rect x="19.0" y="116" width="234.0" height="2" fill="url(#r16)"/>
<rect x="19.5" y="118" width="233.5" height="2" fill="url(#r17)"/>
<rect x="20.0" y="120" width="232.0" height="2" fill="url(#r18)"/>
<rect x="21.0" y="122" width="229.0" height="2" fill="url(#r19)"/>
<rect x="21.5" y="124" width="226.5" height="2" fill="url(#r20)"/>
<rect x="22.0" y="126" width="224.5" height="2" fill="url(#r21)"/>
<rect x="23.0" y="128" width="221.5" height="2" fill="url(#r22)"/>
<rect x="23.5" y="130" width="219.0" height="2" fill="url(#r23)"/>
<rect x="24.5" y="132" width="216.0" height="2" fill="url(#r24)"/>
<rect x="25.0" y="134" width="213.5" height="2" fill="url(#r25)"/>
<rect x="26.0" y="136" width="210.5" height="2" fill="url(#r26)"/>
<rect x="26.5" y="138" width="208.0" height="2" fill="url(#r27)"/>
<rect x="27.5" y="140" width="205.0" height="2" fill="url(#r28)"/>
<rect x="28.5" y="142" width="202.0" height="2" fill="url(#r29)"/>
<rect x="29.0" y="144" width="200.0" height="2" fill="url(#r30)"/>
<rect x="30.0" y="146" width="197.0" height="2" fill="url(#r31)"/>
<rect x="31.0" y="148" width="194.0" height="2" fill="url(#r32)"/>
<rect x="32.0" y="150" width="191.0" height="2" fill="url(#r33)"/>
<rect x="33.0" y="152" width="188.0" height="2" fill="url(#r34)"/>
<rect x="33.5" y="154" width="185.5" height="2" fill="url(#r35)"/>
<rect x="34.5" y="156" width="182.5" height="2" fill="url(#r36)"/>
<rect x="35.5" y="158" width="179.5" height="2" fill="url(#r37)"/>
<rect x="36.5" y="160" width="177.0" height="2" fill="url(#r38)"/>
<rect x="37.5" y="162" width="174.0" height="2" fill="url(#r39)"/>
<rect x="38.5" y="164" width="171.0" height="2" fill="url(#r40)"/>
<rect x="40.0" y="166" width="167.5" height="2" fill="url(#r41)"/>
<rect x="41.0" y="168" width="164.5" height="2" fill="url(#r42)"/>
<rect x="42.0" y="170" width="161.5" height="2" fill="url(#r43)"/>
<rect x="43.0" y="172" width="158.5" height="2" fill="url(#r44)"/>
<rect x="44.5" y="174" width="155.0" height="2" fill="url(#r45)"/>
<rect x="45.5" y="176" width="152.0" height="2" fill="url(#r46)"/>
<rect x="46.5" y="178" width="149.5" height="2" fill="url(#r47)"/>
<rect x="47.5" y="180" width="146.5" height="2" fill="url(#r48)"/>
<rect x="49.0" y="182" width="143.0" height="2" fill="url(#r49)"/>
<rect x="50.0" y="184" width="140.0" height="2" fill="url(#r50)"/>
<rect x="51.5" y="186" width="136.5" height="2" fill="url(#r51)"/>
<rect x="52.5" y="188" width="133.5" height="2" fill="url(#r52)"/>
<rect x="54.0" y="190" width="130.0" height="2" fill="url(#r53)"/>
<rect x="55.0" y="192" width="127.0" height="2" fill="url(#r54)"/>
<rect x="56.0" y="194" width="124.5" height="2" fill="url(#r55)"/>
<rect x="57.5" y="196" width="121.0" height="2" fill="url(#r56)"/>
<rect x="59.0" y="198" width="117.5" height="2" fill="url(#r57)"/>
<rect x="60.0" y="200" width="114.5" height="2" fill="url(#r58)"/>
<rect x="61.5" y="202" width="111.0" height="2" fill="url(#r59)"/>
<rect x="63.0" y="204" width="107.5" height="2" fill="url(#r60)"/>
<rect x="64.0" y="206" width="104.5" height="2" fill="url(#r61)"/>
<rect x="65.5" y="208" width="101.0" height="2" fill="url(#r62)"/>
<rect x="67.0" y="210" width="97.5" height="2" fill="url(#r63)"/>
<rect x="68.5" y="212" width="94.5" height="2" fill="url(#r64)"/>
<rect x="70.0" y="214" width="91.0" height="2" fill="url(#r65)"/>
<rect x="71.5" y="216" width="87.5" height="2" fill="url(#r66)"/>
<rect x="73.0" y="218" width="84.0" height="2" fill="url(#r67)"/>
<rect x="74.5" y="220" width="80.5" height="2" fill="url(#r68)"/>
<rect x="76.0" y="222" width="77.0" height="2" fill="url(#r69)"/>
<rect x="77.5" y="224" width="73.5" height="2" fill="url(#r70)"/>
<rect x="79.5" y="226" width="69.5" height="2" fill="url(#r71)"/>
<rect x="81.0" y="228" width="66.5" height="2" fill="url(#r72)"/>
<rect x="83.0" y="230" width="62.5" height="2" fill="url(#r73)"/>
<rect x="85.0" y="232" width="58.5" height="2" fill="url(#r74)"/>
<rect x="87.0" y="234" width="54.5" height="2" fill="url(#r75)"/>
<rect x="89.0" y="236" width="50.5" height="2" fill="url(#r76)"/>
<rect x="91.0" y="238" width="46.5" height="2" fill="url(#r77)"/>
<rect x="93.0" y="240" width="42.5" height="2" fill="url(#r78)"/>
<rect x="95.5" y="242" width="38.0" height="2" fill="url(#r79)"/>
<rect x="98.0" y="244" width="33.5" height="2" fill="url(#r80)"/>
<rect x="100.0" y="246" width="30.0" height="2" fill="url(#r81)"/>
<rect x="102.5" y="248" width="25.5" height="2" fill="url(#r82)"/>
<rect x="105.0" y="250" width="21.0" height="2" fill="url(#r83)"/>
<rect x="107.5" y="252" width="16.5" height="2" fill="url(#r84)"/>
<rect x="110.0" y="254" width="12.0" height="2" fill="url(#r85)"/>
<rect x="112.5" y="256" width="7.5" height="2" fill="url(#r86)"/>
<rect x="115.0" y="258" width="3.0" height="2" fill="url(#r87)"/>
</g>
<path d="M117.4 258.0L116.3 258.1L115.1 257.6L114.2 257.0L113.4 256.3L112.6 255.6L111.8 254.9L110.9 254.2L110.1 253.5L109.2 252.8L108.4 252.1L107.5 251.4L106.7 250.7L105.8 250.0L105.0 249.3L104.2 248.6L103.3 247.9L102.5 247.2L101.6 246.5L100.8 245.8L100.0 245.1L99.1 244.4L98.3 243.7L97.5 243.0L96.7 242.3L95.8 241.6L95.0 240.9L94.2 240.2L93.4 239.5L92.6 238.7L91.8 238.0L91.0 237.3L90.2 236.6L89.4 235.8L88.7 235.1L87.9 234.3L87.2 233.6L86.4 232.8L85.7 232.0L84.9 231.3L84.2 230.5L83.5 229.7L82.8 229.0L82.1 228.2L81.4 227.4L80.7 226.6L80.0 225.8L79.3 225.0L78.7 224.2L78.0 223.4L77.3 222.6L76.7 221.8L76.0 221.0L75.4 220.2L74.8 219.4L74.1 218.5L73.5 217.7L72.9 216.9L72.2 216.1L71.6 215.3L71.0 214.4L70.4 213.6L69.8 212.8L69.2 212.0L68.6 211.1L68.0 210.3L67.4 209.5L66.8 208.6L66.2 207.8L65.6 207.0L65.0 206.1L64.4 205.3L63.8 204.4L63.3 203.6L62.7 202.7L62.1 201.9L61.6 201.1L61.0 200.2L60.4 199.4L59.9 198.5L59.3 197.7L58.8 196.8L58.2 196.0L57.7 195.1L57.1 194.2L56.6 193.4L56.1 192.5L55.5 191.7L55.0 190.8L54.5 190.0L53.9 189.1L53.4 188.2L52.9 187.4L52.4 186.5L51.9 185.6L51.3 184.8L50.8 183.9L50.3 183.1L49.8 182.2L49.3 181.3L48.8 180.5L48.3 179.6L47.7 178.7L47.2 177.9L46.7 177.0L46.2 176.1L45.7 175.2L45.2 174.4L44.7 173.5L44.2 172.6L43.7 171.8L43.2 170.9L42.8 170.0L42.3 169.1L41.8 168.3L41.3 167.4L40.8 166.5L40.4 165.6L39.9 164.7L39.4 163.9L39.0 163.0L38.5 162.1L38.0 161.2L37.6 160.3L37.1 159.4L36.7 158.6L36.2 157.7L35.8 156.8L35.4 155.9L34.9 155.0L34.5 154.1L34.1 153.2L33.7 152.3L33.3 151.4L32.8 150.5L32.4 149.6L32.0 148.7L31.6 147.8L31.2 146.9L30.8 146.0L30.4 145.1L30.0 144.2L29.7 143.3L29.3 142.4L28.9 141.5L28.5 140.6L28.1 139.7L27.8 138.8L27.4 137.9L27.0 137.0L26.7 136.1L26.3 135.1L26.0 134.2L25.6 133.3L25.3 132.4L24.9 131.5L24.6 130.6L24.2 129.7L23.9 128.7L23.6 127.8L23.3 126.9L22.9 126.0L22.6 125.1L22.3 124.1L22.0 123.2L21.7 122.3L21.4 121.4L21.1 120.5L20.8 119.5L20.6 118.6L20.3 117.7L20.0 116.7L19.8 115.8L19.5 114.9L19.3 113.9L19.0 113.0L18.8 112.1L18.6 111.1L18.4 110.2L18.2 109.3L18.0 108.3L17.8 107.4L17.7 106.4L17.5 105.5L17.4 104.5L17.3 103.6L17.2 102.6L17.1 101.7L17.1 100.7L17.0 99.8L17.1 98.8L17.1 97.9L17.2 96.9L17.3 96.0L17.4 95.0L17.7 94.1L17.9 93.2L18.3 92.2L18.7 91.3L19.2 90.4L19.9 89.6L20.6 88.8L21.4 88.1L22.3 87.5L23.4 87.0L24.5 86.5L25.6 86.1L26.8 85.9L28.0 85.7L29.2 85.5L30.5 85.4L31.7 85.3L32.9 85.3L34.2 85.2L35.4 85.2L36.6 85.2L37.9 85.2L39.1 85.2L40.3 85.2L41.6 85.3L42.8 85.3L44.0 85.4L45.3 85.4L46.5 85.5L47.7 85.6L49.0 85.6L50.2 85.7L51.4 85.8L52.6 85.9L53.9 86.0L55.1 86.1L56.3 86.2L57.6 86.3L58.8 86.4L60.0 86.6L61.2 86.7L62.5 86.8L63.7 86.9L64.9 87.0L66.1 87.2L67.4 87.3L68.6 87.4L69.8 87.5L71.0 87.7L72.2 87.8L73.5 87.9L74.7 88.1L75.9 88.2L77.1 88.3L78.4 88.5L79.6 88.6L80.8 88.7L82.0 88.9L83.2 89.0L84.5 89.2L85.7 89.3L86.9 89.4L88.1 89.6L89.3 89.7L90.6 89.8L91.8 90.0L93.0 90.1L94.2 90.3L95.5 90.4L96.7 90.5L97.9 90.7L99.1 90.8L100.3 91.0L101.6 91.1L102.8 91.2L104.0 91.4L105.2 91.5L106.4 91.7L107.7 91.8L108.9 92.0L110.1 92.1L111.3 92.2L112.5 92.4L113.8 92.5L115.0 92.7L116.2 92.8L117.4 92.9L118.7 93.1L119.9 93.2L121.1 93.4L122.3 93.5L123.5 93.6L124.8 93.8L126.0 93.9L127.2 94.1L128.4 94.2L129.6 94.3L130.9 94.5L132.1 94.6L133.3 94.8L134.5 94.9L135.7 95.0L137.0 95.2L138.2 95.3L139.4 95.5L140.6 95.6L141.8 95.7L143.1 95.9L144.3 96.0L145.5 96.2L146.7 96.3L148.0 96.4L149.2 96.6L150.4 96.7L151.6 96.9L152.8 97.0L154.1 97.2L155.3 97.3L156.5 97.4L157.7 97.6L158.9 97.7L160.2 97.9L161.4 98.0L162.6 98.1L163.8 98.3L165.0 98.4L166.3 98.6L167.5 98.7L168.7 98.8L169.9 99.0L171.1 99.1L172.4 99.3L173.6 99.4L174.8 99.6L176.0 99.7L177.3 99.8L178.5 100.0L179.7 100.1L180.9 100.3L182.1 100.4L183.4 100.5L184.6 100.7L185.8 100.8L187.0 101.0L188.2 101.1L189.5 101.2L190.7 101.4L191.9 101.5L193.1 101.7L194.3 101.8L195.6 101.9L196.8 102.1L198.0 102.2L199.2 102.4L200.5 102.5L201.7 102.6L202.9 102.8L204.1 102.9L205.3 103.1L206.6 103.2L207.8 103.3L209.0 103.5L210.2 103.6L211.4 103.8L212.7 103.9L213.9 104.0L215.1 104.2L216.3 104.3L217.5 104.5L218.8 104.6L220.0 104.8L221.2 104.9L222.4 105.0L223.6 105.2L224.9 105.3L226.1 105.5L227.3 105.6L228.5 105.7L229.8 105.9L231.0 106.0L232.2 106.2L233.4 106.3L234.6 106.4L235.9 106.6L237.1 106.7L238.3 106.9L239.5 107.0L240.7 107.1L242.0 107.3L243.2 107.4L244.4 107.6L245.6 107.7L246.8 107.8L248.1 108.0L249.3 108.1L250.5 108.3L251.7 108.4L252.9 108.5L254.2 108.7L255.4 108.8L256.6 109.0L257.8 109.1L259.1 109.3L260.3 109.4L261.5 109.5ZM193.6 104.6L65.6 92.6L85.4 215.2Z" fill="#000" fill-opacity="0.35" fill-rule="evenodd" clip-path="url(#plotclip)"/>
<rect x="190.4" y="101.4" width="6.4" height="6.4" fill="none" stroke="#fff" stroke-opacity="0.85" stroke-width="1"/>
<rect x="62.4" y="89.4" width="6.4" height="6.4" fill="none" stroke="#fff" stroke-opacity="0.85" stroke-width="1"/>
<rect x="82.2" y="212.0" width="6.4" height="6.4" fill="none" stroke="#fff" stroke-opacity="0.85" stroke-width="1"/>
<rect x="67.7" y="121.8" width="6.4" height="6.4" fill="none" stroke="#fff" stroke-opacity="0.85" stroke-width="1"/>
<rect x="133.2" y="159.9" width="6.4" height="6.4" fill="none" stroke="#fff" stroke-opacity="0.85" stroke-width="1"/>
<rect x="93.4" y="92.3" width="6.4" height="6.4" fill="none" stroke="#fff" stroke-opacity="0.85" stroke-width="1"/>
<rect x="91.0" y="117.9" width="6.4" height="6.4" fill="none" stroke="#111" stroke-width="1.2"/>
<rect x="92.4" y="119.5" width="3.6" height="3.6" fill="#fff" stroke="#222" stroke-width="0.6"/>
<circle cx="65.9" cy="92.3" r="1.5" fill="none" stroke="#222" stroke-opacity="0.8" stroke-width="0.9"/>
<circle cx="71.1" cy="126.0" r="1.5" fill="none" stroke="#222" stroke-opacity="0.8" stroke-width="0.9"/>
<circle cx="96.9" cy="95.8" r="1.5" fill="none" stroke="#222" stroke-opacity="0.8" stroke-width="0.9"/>
<circle cx="135.2" cy="164.3" r="1.5" fill="none" stroke="#222" stroke-opacity="0.8" stroke-width="0.9"/>
<path d="M16.5 263V81.5H252.5V263" fill="none" stroke="#828282" stroke-width="1"/>
<path d="M16.5 263H252.5" fill="none" stroke="#828282" stroke-width="1"/>
<text x="13.4" y="265.4" font-size="6.5" fill="#e6e6e6" text-anchor="end">0</text>
<rect x="13.700000000000001" y="262.50" width="2.6" height="1" fill="#828282"/>
<text x="13.4" y="235.1" font-size="6.5" fill="#e6e6e6" text-anchor="end">0.1</text>
<rect x="13.700000000000001" y="232.20" width="2.6" height="1" fill="#828282"/>
<text x="13.4" y="204.8" font-size="6.5" fill="#e6e6e6" text-anchor="end">0.2</text>
<rect x="13.700000000000001" y="201.90" width="2.6" height="1" fill="#828282"/>
<text x="13.4" y="174.5" font-size="6.5" fill="#e6e6e6" text-anchor="end">0.3</text>
<rect x="13.700000000000001" y="171.60" width="2.6" height="1" fill="#828282"/>
<text x="13.4" y="144.2" font-size="6.5" fill="#e6e6e6" text-anchor="end">0.4</text>
<rect x="13.700000000000001" y="141.30" width="2.6" height="1" fill="#828282"/>
<text x="13.4" y="113.9" font-size="6.5" fill="#e6e6e6" text-anchor="end">0.5</text>
<rect x="13.700000000000001" y="111.00" width="2.6" height="1" fill="#828282"/>
<rect x="16.00" y="263" width="1" height="2.4" fill="#828282"/>
<rect x="35.65" y="263" width="1" height="2.4" fill="#828282"/>
<rect x="55.30" y="263" width="1" height="2.4" fill="#828282"/>
<rect x="74.95" y="263" width="1" height="2.4" fill="#828282"/>
<rect x="94.60" y="263" width="1" height="2.4" fill="#828282"/>
<rect x="114.25" y="263" width="1" height="2.4" fill="#828282"/>
<rect x="133.90" y="263" width="1" height="2.4" fill="#828282"/>
<rect x="153.55" y="263" width="1" height="2.4" fill="#828282"/>
<rect x="173.20" y="263" width="1" height="2.4" fill="#828282"/>
<rect x="192.85" y="263" width="1" height="2.4" fill="#828282"/>
<rect x="212.50" y="263" width="1" height="2.4" fill="#828282"/>
<rect x="232.15" y="263" width="1" height="2.4" fill="#828282"/>
<text x="16.5" y="273.2" font-size="6.5" fill="#e6e6e6" text-anchor="middle">0</text>
<text x="36.15" y="273.2" font-size="6.5" fill="#e6e6e6" text-anchor="middle">0.05</text>
<text x="55.8" y="273.2" font-size="6.5" fill="#e6e6e6" text-anchor="middle">0.1</text>
<text x="75.45" y="273.2" font-size="6.5" fill="#e6e6e6" text-anchor="middle">0.15</text>
<text x="95.1" y="273.2" font-size="6.5" fill="#e6e6e6" text-anchor="middle">0.2</text>
<text x="114.75" y="273.2" font-size="6.5" fill="#e6e6e6" text-anchor="middle">0.25</text>
<text x="134.4" y="273.2" font-size="6.5" fill="#e6e6e6" text-anchor="middle">0.3</text>
<text x="154.05" y="273.2" font-size="6.5" fill="#e6e6e6" text-anchor="middle">0.35</text>
<text x="173.7" y="273.2" font-size="6.5" fill="#e6e6e6" text-anchor="middle">0.4</text>
<text x="193.35" y="273.2" font-size="6.5" fill="#e6e6e6" text-anchor="middle">0.45</text>
<text x="213.0" y="273.2" font-size="6.5" fill="#e6e6e6" text-anchor="middle">0.5</text>
<text x="232.65" y="273.2" font-size="6.5" fill="#e6e6e6" text-anchor="middle">0.55</text>
<text x="128.6" y="79" font-size="6.9" fill="#dcdcdc" text-anchor="middle" textLength="38" lengthAdjust="spacingAndGlyphs">CIE 1976 u'v'</text>
<rect x="4" y="279.7" width="250.2" height="121" fill="#262626" stroke="#707070" stroke-width="1"/>
<text x="5.7" y="286" font-size="6.5" fill="#e8960c" textLength="37.6" lengthAdjust="spacingAndGlyphs">Pre-Cal Notes:</text>
<rect x="273.5" y="81.5" width="250.0" height="94.5" fill="#262626"/>
<rect x="273.5" y="167.30" width="250.0" height="1" fill="#666666"/>
<rect x="273.5" y="148.20" width="250.0" height="1" fill="#666666"/>
<rect x="273.5" y="129.10" width="250.0" height="1" fill="#666666"/>
<rect x="273.5" y="110.00" width="250.0" height="1" fill="#666666"/>
<rect x="273.5" y="90.90" width="250.0" height="1" fill="#666666"/>
<g clip-path="url(#rgbclip)">
<polyline points="274.3,129.6 299.2,132.0 324.1,130.7 349.0,130.6 373.9,130.7 398.8,131.5 423.7,132.7 448.6,133.4 473.5,135.5 498.4,135.5 523.3,136.8" fill="none" stroke="#c41c24" stroke-width="2.3" stroke-linejoin="round" stroke-linecap="round"/>
<polyline points="274.3,129.6 299.2,128.8 324.1,129.4 349.0,129.6 373.9,129.6 398.8,129.6 423.7,129.6 448.6,129.6 473.5,129.6 498.4,129.6 523.3,129.6" fill="none" stroke="#1e8a24" stroke-width="2.3" stroke-linejoin="round" stroke-linecap="round"/>
<polyline points="274.3,129.6 299.2,129.6 324.1,121.7 349.0,116.7 373.9,114.3 398.8,112.4 423.7,109.7 448.6,107.3 473.5,105.9 498.4,107.1 523.3,107.6" fill="none" stroke="#1616b8" stroke-width="2.3" stroke-linejoin="round" stroke-linecap="round"/>
</g>
<path d="M273.5 176V81.5H523.5V176" fill="none" stroke="#828282" stroke-width="1"/>
<path d="M273.5 176H523.5" fill="none" stroke="#828282" stroke-width="1"/>
<text x="270.6" y="170.2" font-size="6.5" fill="#e6e6e6" text-anchor="end">96</text>
<rect x="270.90000000000003" y="167.30" width="2.6" height="1" fill="#828282"/>
<text x="270.6" y="151.1" font-size="6.5" fill="#e6e6e6" text-anchor="end">98</text>
<rect x="270.90000000000003" y="148.20" width="2.6" height="1" fill="#828282"/>
<text x="270.6" y="132.0" font-size="6.5" fill="#e6e6e6" text-anchor="end">100</text>
<rect x="270.90000000000003" y="129.10" width="2.6" height="1" fill="#828282"/>
<text x="270.6" y="112.9" font-size="6.5" fill="#e6e6e6" text-anchor="end">102</text>
<rect x="270.90000000000003" y="110.00" width="2.6" height="1" fill="#828282"/>
<text x="270.6" y="93.8" font-size="6.5" fill="#e6e6e6" text-anchor="end">104</text>
<rect x="270.90000000000003" y="90.90" width="2.6" height="1" fill="#828282"/>
<rect x="273.80" y="176" width="1" height="2.4" fill="#828282"/>
<rect x="298.70" y="176" width="1" height="2.4" fill="#828282"/>
<rect x="323.60" y="176" width="1" height="2.4" fill="#828282"/>
<rect x="348.50" y="176" width="1" height="2.4" fill="#828282"/>
<rect x="373.40" y="176" width="1" height="2.4" fill="#828282"/>
<rect x="398.30" y="176" width="1" height="2.4" fill="#828282"/>
<rect x="423.20" y="176" width="1" height="2.4" fill="#828282"/>
<rect x="448.10" y="176" width="1" height="2.4" fill="#828282"/>
<rect x="473.00" y="176" width="1" height="2.4" fill="#828282"/>
<rect x="497.90" y="176" width="1" height="2.4" fill="#828282"/>
<rect x="522.80" y="176" width="1" height="2.4" fill="#828282"/>
<text x="274.3" y="186.3" font-size="6.5" fill="#e6e6e6" text-anchor="middle">0</text>
<text x="299.2" y="186.3" font-size="6.5" fill="#e6e6e6" text-anchor="middle">10</text>
<text x="324.1" y="186.3" font-size="6.5" fill="#e6e6e6" text-anchor="middle">20</text>
<text x="349.0" y="186.3" font-size="6.5" fill="#e6e6e6" text-anchor="middle">30</text>
<text x="373.9" y="186.3" font-size="6.5" fill="#e6e6e6" text-anchor="middle">40</text>
<text x="398.8" y="186.3" font-size="6.5" fill="#e6e6e6" text-anchor="middle">50</text>
<text x="423.7" y="186.3" font-size="6.5" fill="#e6e6e6" text-anchor="middle">60</text>
<text x="448.6" y="186.3" font-size="6.5" fill="#e6e6e6" text-anchor="middle">70</text>
<text x="473.5" y="186.3" font-size="6.5" fill="#e6e6e6" text-anchor="middle">80</text>
<text x="498.4" y="186.3" font-size="6.5" fill="#e6e6e6" text-anchor="middle">90</text>
<text x="523.3" y="186.3" font-size="6.5" fill="#e6e6e6" text-anchor="middle">100</text>
<text x="391.7" y="79" font-size="6.9" fill="#dcdcdc" text-anchor="middle" textLength="37.3" lengthAdjust="spacingAndGlyphs">RGB Balance</text>
<rect x="273" y="207.8" width="250.29999999999995" height="68.39999999999998" fill="#262626"/>
<rect x="273" y="252.95" width="250.29999999999995" height="1" fill="#666666"/>
<rect x="273" y="230.20" width="250.29999999999995" height="1" fill="#666666"/>
<rect x="298.4" y="272.1" width="17.6" height="4.1" fill="url(#bg1)" stroke="#0c0c0c" stroke-width="1"/>
<rect x="321.1" y="269.8" width="17.6" height="6.4" fill="url(#bg2)" stroke="#0c0c0c" stroke-width="1"/>
<rect x="343.9" y="267.1" width="17.6" height="9.1" fill="url(#bg3)" stroke="#0c0c0c" stroke-width="1"/>
<rect x="366.6" y="264.8" width="17.6" height="11.4" fill="url(#bg4)" stroke="#0c0c0c" stroke-width="1"/>
<rect x="389.4" y="264.4" width="17.6" height="11.8" fill="url(#bg5)" stroke="#0c0c0c" stroke-width="1"/>
<rect x="412.1" y="263.0" width="17.6" height="13.2" fill="url(#bg6)" stroke="#0c0c0c" stroke-width="1"/>
<rect x="434.9" y="261.0" width="17.6" height="15.2" fill="url(#bg7)" stroke="#0c0c0c" stroke-width="1"/>
<rect x="457.6" y="260.7" width="17.6" height="15.5" fill="url(#bg8)" stroke="#0c0c0c" stroke-width="1"/>
<rect x="480.4" y="261.6" width="17.6" height="14.6" fill="url(#bg9)" stroke="#0c0c0c" stroke-width="1"/>
<rect x="503.1" y="261.6" width="17.6" height="14.6" fill="url(#bg10)" stroke="#0c0c0c" stroke-width="1"/>
<path d="M273 276.2V207.8H523.3V276.2" fill="none" stroke="#828282" stroke-width="1"/>
<path d="M273 276.2H523.3" fill="none" stroke="#828282" stroke-width="1"/>
<text x="270.2" y="278.6" font-size="6.5" fill="#e6e6e6" text-anchor="end">0</text>
<rect x="270.5" y="275.70" width="2.6" height="1" fill="#828282"/>
<text x="270.2" y="255.85" font-size="6.5" fill="#e6e6e6" text-anchor="end">5</text>
<rect x="270.5" y="252.95" width="2.6" height="1" fill="#828282"/>
<text x="270.2" y="233.1" font-size="6.5" fill="#e6e6e6" text-anchor="end">10</text>
<rect x="270.5" y="230.20" width="2.6" height="1" fill="#828282"/>
<text x="270.2" y="210.35" font-size="6.5" fill="#e6e6e6" text-anchor="end">15</text>
<rect x="270.5" y="207.45" width="2.6" height="1" fill="#828282"/>
<rect x="272.50" y="276.2" width="1" height="2.4" fill="#828282"/>
<rect x="295.25" y="276.2" width="1" height="2.4" fill="#828282"/>
<rect x="318.01" y="276.2" width="1" height="2.4" fill="#828282"/>
<rect x="340.76" y="276.2" width="1" height="2.4" fill="#828282"/>
<rect x="363.52" y="276.2" width="1" height="2.4" fill="#828282"/>
<rect x="386.27" y="276.2" width="1" height="2.4" fill="#828282"/>
<rect x="409.03" y="276.2" width="1" height="2.4" fill="#828282"/>
<rect x="431.78" y="276.2" width="1" height="2.4" fill="#828282"/>
<rect x="454.54" y="276.2" width="1" height="2.4" fill="#828282"/>
<rect x="477.29" y="276.2" width="1" height="2.4" fill="#828282"/>
<rect x="500.05" y="276.2" width="1" height="2.4" fill="#828282"/>
<rect x="522.80" y="276.2" width="1" height="2.4" fill="#828282"/>
<text x="284.38" y="283.8" font-size="6.5" fill="#e6e6e6" text-anchor="middle">0</text>
<text x="307.13" y="283.8" font-size="6.5" fill="#e6e6e6" text-anchor="middle">10</text>
<text x="329.89" y="283.8" font-size="6.5" fill="#e6e6e6" text-anchor="middle">20</text>
<text x="352.64" y="283.8" font-size="6.5" fill="#e6e6e6" text-anchor="middle">30</text>
<text x="375.4" y="283.8" font-size="6.5" fill="#e6e6e6" text-anchor="middle">40</text>
<text x="398.15" y="283.8" font-size="6.5" fill="#e6e6e6" text-anchor="middle">50</text>
<text x="420.9" y="283.8" font-size="6.5" fill="#e6e6e6" text-anchor="middle">60</text>
<text x="443.66" y="283.8" font-size="6.5" fill="#e6e6e6" text-anchor="middle">70</text>
<text x="466.41" y="283.8" font-size="6.5" fill="#e6e6e6" text-anchor="middle">80</text>
<text x="489.17" y="283.8" font-size="6.5" fill="#e6e6e6" text-anchor="middle">90</text>
<text x="511.92" y="283.8" font-size="6.5" fill="#e6e6e6" text-anchor="middle">100</text>
<text x="393.2" y="205.6" font-size="6.9" fill="#dcdcdc" text-anchor="middle" textLength="35.5" lengthAdjust="spacingAndGlyphs">DeltaE 2000</text>
<text x="272.8" y="207.1" font-size="6.9" fill="#f0f0f0" textLength="24" lengthAdjust="spacingAndGlyphs">Avg: 2.6</text>
<text x="523.5" y="207.1" font-size="6.9" fill="#f0f0f0" text-anchor="end" textLength="26" lengthAdjust="spacingAndGlyphs">Max: 3.4</text>
<text x="326.9" y="300.9" font-size="9.9" fill="#f2f2f2" textLength="61.2" lengthAdjust="spacingAndGlyphs">DeltaE Formula</text>
<rect x="392.4" y="292" width="60.2" height="10.6" fill="url(#ddg)"/>
<text x="394.4" y="300.9" font-size="7.2" fill="#f2f2f2" textLength="15.3" lengthAdjust="spacingAndGlyphs">2000</text>
<path d="M446.2 296h3.8l-1.9 2.5z" fill="#0a0a0a"/>
<rect x="273" y="320.5" width="250.5" height="68.80000000000001" fill="#262626"/>
<rect x="273" y="366.05" width="250.5" height="1" fill="#666666"/>
<rect x="273" y="343.30" width="250.5" height="1" fill="#666666"/>
<rect x="423.8" y="375.2" width="8.6" height="14.1" fill="url(#cb108)" stroke="#0c0c0c" stroke-width="0.8"/>
<rect x="449.2" y="386.6" width="8.2" height="2.7" fill="url(#cb109)" stroke="#0c0c0c" stroke-width="0.8"/>
<rect x="458.9" y="386.7" width="8.3" height="2.6" fill="url(#cb110)" stroke="#0c0c0c" stroke-width="0.8"/>
<rect x="468.5" y="385.7" width="8.3" height="3.6" fill="url(#cb111)" stroke="#0c0c0c" stroke-width="0.8"/>
<rect x="478.2" y="381.4" width="9.0" height="7.9" fill="url(#cb112)" stroke="#0c0c0c" stroke-width="0.8"/>
<rect x="488.2" y="385.0" width="8.1" height="4.3" fill="url(#cb113)" stroke="#0c0c0c" stroke-width="0.8"/>
<rect x="498.1" y="385.9" width="8.1" height="3.4" fill="url(#cb114)" stroke="#0c0c0c" stroke-width="0.8"/>
<path d="M273 389.3V320.5H523.5V389.3" fill="none" stroke="#828282" stroke-width="1"/>
<path d="M273 389.3H523.5" fill="none" stroke="#828282" stroke-width="1"/>
<text x="270.2" y="391.7" font-size="6.5" fill="#e6e6e6" text-anchor="end">0</text>
<rect x="270.5" y="388.80" width="2.6" height="1" fill="#828282"/>
<text x="270.2" y="368.95" font-size="6.5" fill="#e6e6e6" text-anchor="end">5</text>
<rect x="270.5" y="366.05" width="2.6" height="1" fill="#828282"/>
<text x="270.2" y="346.2" font-size="6.5" fill="#e6e6e6" text-anchor="end">10</text>
<rect x="270.5" y="343.30" width="2.6" height="1" fill="#828282"/>
<text x="270.2" y="323.45" font-size="6.5" fill="#e6e6e6" text-anchor="end">15</text>
<rect x="270.5" y="320.55" width="2.6" height="1" fill="#828282"/>
<rect x="272.50" y="389.3" width="1" height="2.4" fill="#828282"/>
<rect x="356.00" y="389.3" width="1" height="2.4" fill="#828282"/>
<rect x="439.50" y="389.3" width="1" height="2.4" fill="#828282"/>
<rect x="523.00" y="389.3" width="1" height="2.4" fill="#828282"/>
<text x="314.7" y="396.7" font-size="6.5" fill="#e6e6e6" text-anchor="middle">0</text>
<text x="398.4" y="396.7" font-size="6.5" fill="#e6e6e6" text-anchor="middle">100</text>
<text x="481.9" y="396.7" font-size="6.5" fill="#e6e6e6" text-anchor="middle">100%</text>
<text x="393.4" y="318" font-size="6.9" fill="#dcdcdc" text-anchor="middle" textLength="35.5" lengthAdjust="spacingAndGlyphs">DeltaE 2000</text>
<text x="272.8" y="320.1" font-size="6.9" fill="#f0f0f0" textLength="24" lengthAdjust="spacingAndGlyphs">Avg: 1.3</text>
<text x="523.5" y="320.1" font-size="6.9" fill="#f0f0f0" text-anchor="end" textLength="26" lengthAdjust="spacingAndGlyphs">Max: 3.2</text>
<rect x="550" y="81.5" width="187" height="171.3" fill="#262626"/>
<rect x="550" y="223.92" width="187" height="1" fill="#666666"/>
<rect x="550" y="195.54" width="187" height="1" fill="#666666"/>
<rect x="550" y="167.16" width="187" height="1" fill="#666666"/>
<rect x="550" y="138.78" width="187" height="1" fill="#666666"/>
<rect x="550" y="110.40" width="187" height="1" fill="#666666"/>
<polyline points="550.0,252.8 551.9,249.2 553.7,245.7 555.6,242.3 557.5,239.0 559.4,235.8 561.2,232.6 563.1,229.6 565.0,226.7 566.8,223.8 568.7,221.0 570.6,218.3 572.4,215.7 574.3,213.1 576.2,210.6 578.0,208.2 579.9,205.9 581.8,203.6 583.7,201.4 585.5,199.3 587.4,197.2 589.3,195.2 591.1,193.2 593.0,191.3 594.9,189.4 596.8,187.6 598.6,185.8 600.5,184.1 602.4,182.4 604.2,180.7 606.1,179.0 608.0,177.4 609.8,175.7 611.7,174.1 613.6,172.5 615.5,170.9 617.3,169.3 619.2,167.8 621.1,166.3 622.9,164.8 624.8,163.4 626.7,162.0 628.5,160.6 630.4,159.3 632.3,158.0 634.1,156.7 636.0,155.5 637.9,154.2 639.8,153.0 641.6,151.8 643.5,150.6 645.4,149.4 647.2,148.3 649.1,147.1 651.0,146.0 652.9,144.8 654.7,143.7 656.6,142.6 658.5,141.4 660.3,140.4 662.2,139.3 664.1,138.2 665.9,137.2 667.8,136.1 669.7,135.1 671.5,134.1 673.4,133.1 675.3,132.2 677.2,131.2 679.0,130.3 680.9,129.3 682.8,128.4 684.6,127.5 686.5,126.7 688.4,125.8 690.2,124.9 692.1,124.1 694.0,123.3 695.9,122.4 697.7,121.6 699.6,120.8 701.5,120.1 703.3,119.3 705.2,118.5 707.1,117.8 709.0,117.0 710.8,116.3 712.7,115.6 714.6,114.9 716.4,114.2 718.3,113.5 720.2,112.8 722.0,112.1 723.9,111.4 725.8,110.7 727.6,110.0 729.5,109.3 731.4,108.7 733.3,108.0 735.1,107.3 737.0,106.6" fill="none" stroke="#b4b468" stroke-width="1.3" stroke-linejoin="round" stroke-linecap="round"/>
<polyline points="550.0,252.8 551.9,249.2 553.7,245.7 555.6,242.3 557.5,239.0 559.4,235.8 561.2,232.6 563.1,229.6 565.0,226.7 566.8,223.8 568.7,221.0 570.6,218.3 572.4,215.7 574.3,213.1 576.2,210.6 578.0,208.2 579.9,205.9 581.8,203.6 583.7,201.4 585.5,199.3 587.4,197.2 589.3,195.2 591.1,193.2 593.0,191.3 594.9,189.4 596.8,187.6 598.6,185.8 600.5,184.1 602.4,182.4 604.2,180.7 606.1,179.0 608.0,177.4 609.8,175.7 611.7,174.1 613.6,172.5 615.5,170.9 617.3,169.3 619.2,167.8 621.1,166.3 622.9,164.8 624.8,163.4 626.7,162.0 628.5,160.6 630.4,159.3 632.3,158.0 634.1,156.7 636.0,155.5 637.9,154.2 639.8,153.0 641.6,151.8 643.5,150.6 645.4,149.4 647.2,148.3 649.1,147.1 651.0,146.0 652.9,144.8 654.7,143.7 656.6,142.6 658.5,141.4 660.3,140.4 662.2,139.3 664.1,138.2 665.9,137.2 667.8,136.1 669.7,135.1 671.5,134.1 673.4,133.1 675.3,132.2 677.2,131.2 679.0,130.3 680.9,129.3 682.8,128.4 684.6,127.5 686.5,126.7 688.4,125.8 690.2,124.9 692.1,124.1 694.0,123.3 695.9,122.4 697.7,121.6 699.6,120.8 701.5,120.1 703.3,119.3 705.2,118.5 707.1,117.8 709.0,117.0 710.8,116.3 712.7,115.6 714.6,114.9 716.4,114.2 718.3,113.5 720.2,112.8 722.0,112.1 723.9,111.4 725.8,110.7 727.6,110.0 729.5,109.3 731.4,108.7 733.3,108.0 735.1,107.3 737.0,106.6" fill="none" stroke="url(#eotfg)" stroke-width="2.0" stroke-linejoin="round" stroke-linecap="round"/>
<path d="M550 252.8V81.5H737V252.8" fill="none" stroke="#828282" stroke-width="1"/>
<path d="M550 252.8H737" fill="none" stroke="#828282" stroke-width="1"/>
<text x="547" y="255.2" font-size="6.5" fill="#e6e6e6" text-anchor="end">0</text>
<rect x="547.3" y="252.30" width="2.6" height="1" fill="#828282"/>
<text x="547" y="226.82" font-size="6.5" fill="#e6e6e6" text-anchor="end">0.1</text>
<rect x="547.3" y="223.92" width="2.6" height="1" fill="#828282"/>
<text x="547" y="198.44" font-size="6.5" fill="#e6e6e6" text-anchor="end">0.2</text>
<rect x="547.3" y="195.54" width="2.6" height="1" fill="#828282"/>
<text x="547" y="170.06" font-size="6.5" fill="#e6e6e6" text-anchor="end">0.3</text>
<rect x="547.3" y="167.16" width="2.6" height="1" fill="#828282"/>
<text x="547" y="141.68" font-size="6.5" fill="#e6e6e6" text-anchor="end">0.4</text>
<rect x="547.3" y="138.78" width="2.6" height="1" fill="#828282"/>
<text x="547" y="113.3" font-size="6.5" fill="#e6e6e6" text-anchor="end">0.5</text>
<rect x="547.3" y="110.40" width="2.6" height="1" fill="#828282"/>
<rect x="549.50" y="252.8" width="1" height="2.4" fill="#828282"/>
<rect x="586.90" y="252.8" width="1" height="2.4" fill="#828282"/>
<rect x="624.30" y="252.8" width="1" height="2.4" fill="#828282"/>
<rect x="661.70" y="252.8" width="1" height="2.4" fill="#828282"/>
<rect x="699.10" y="252.8" width="1" height="2.4" fill="#828282"/>
<rect x="736.50" y="252.8" width="1" height="2.4" fill="#828282"/>
<text x="550.0" y="262.6" font-size="6.5" fill="#e6e6e6" text-anchor="middle">0</text>
<text x="587.4" y="262.6" font-size="6.5" fill="#e6e6e6" text-anchor="middle">20</text>
<text x="624.8" y="262.6" font-size="6.5" fill="#e6e6e6" text-anchor="middle">40</text>
<text x="662.2" y="262.6" font-size="6.5" fill="#e6e6e6" text-anchor="middle">60</text>
<text x="699.6" y="262.6" font-size="6.5" fill="#e6e6e6" text-anchor="middle">80</text>
<text x="737.0" y="262.6" font-size="6.5" fill="#e6e6e6" text-anchor="middle">100</text>
<text x="638.2" y="79.2" font-size="6.9" fill="#dcdcdc" text-anchor="middle" textLength="15" lengthAdjust="spacingAndGlyphs">EOTF</text>
<rect x="551.6" y="283.8" width="185.79999999999995" height="103.0" fill="#262626"/>
<rect x="551.6" y="367.66" width="185.79999999999995" height="1" fill="#666666"/>
<rect x="551.6" y="349.02" width="185.79999999999995" height="1" fill="#666666"/>
<rect x="551.6" y="330.38" width="185.79999999999995" height="1" fill="#666666"/>
<rect x="551.6" y="311.74" width="185.79999999999995" height="1" fill="#666666"/>
<rect x="551.6" y="293.10" width="185.79999999999995" height="1" fill="#666666"/>
<polyline points="551.6,386.8 554.7,386.8 557.9,386.7 561.0,386.7 564.2,386.5 567.3,386.4 570.5,386.2 573.6,385.9 576.8,385.6 579.9,385.2 583.1,384.8 586.2,384.4 589.4,383.9 592.5,383.3 595.7,382.7 598.8,382.0 602.0,381.2 605.1,380.5 608.3,379.6 611.4,378.7 614.6,377.7 617.7,376.7 620.9,375.6 624.0,374.5 627.2,373.3 630.3,372.0 633.5,370.6 636.6,369.2 639.8,367.8 642.9,366.3 646.1,364.7 649.2,363.0 652.4,361.3 655.5,359.5 658.7,357.7 661.8,355.7 665.0,353.7 668.1,351.7 671.3,349.6 674.4,347.4 677.6,345.1 680.7,342.8 683.9,340.4 687.0,337.9 690.2,335.4 693.3,332.8 696.5,330.1 699.6,327.4 702.8,324.6 705.9,321.7 709.1,318.7 712.2,315.7 715.4,312.6 718.5,309.4 721.7,306.2 724.8,302.8 728.0,299.4 731.1,296.0 734.3,292.4 737.4,288.8" fill="none" stroke="#c0c04c" stroke-width="1.45" stroke-linejoin="round" stroke-linecap="round"/>
<path d="M551.6 386.8V283.8H737.4V386.8" fill="none" stroke="#828282" stroke-width="1"/>
<path d="M551.6 386.8H737.4" fill="none" stroke="#828282" stroke-width="1"/>
<text x="548.8" y="389.2" font-size="6.5" fill="#e6e6e6" text-anchor="end">0</text>
<rect x="549.0999999999999" y="386.30" width="2.6" height="1" fill="#828282"/>
<text x="548.8" y="370.56" font-size="6.5" fill="#e6e6e6" text-anchor="end">20</text>
<rect x="549.0999999999999" y="367.66" width="2.6" height="1" fill="#828282"/>
<text x="548.8" y="351.92" font-size="6.5" fill="#e6e6e6" text-anchor="end">40</text>
<rect x="549.0999999999999" y="349.02" width="2.6" height="1" fill="#828282"/>
<text x="548.8" y="333.28" font-size="6.5" fill="#e6e6e6" text-anchor="end">60</text>
<rect x="549.0999999999999" y="330.38" width="2.6" height="1" fill="#828282"/>
<text x="548.8" y="314.64" font-size="6.5" fill="#e6e6e6" text-anchor="end">80</text>
<rect x="549.0999999999999" y="311.74" width="2.6" height="1" fill="#828282"/>
<text x="548.8" y="296.0" font-size="6.5" fill="#e6e6e6" text-anchor="end">100</text>
<rect x="549.0999999999999" y="293.10" width="2.6" height="1" fill="#828282"/>
<rect x="551.10" y="386.8" width="1" height="2.4" fill="#828282"/>
<rect x="588.26" y="386.8" width="1" height="2.4" fill="#828282"/>
<rect x="625.42" y="386.8" width="1" height="2.4" fill="#828282"/>
<rect x="662.58" y="386.8" width="1" height="2.4" fill="#828282"/>
<rect x="699.74" y="386.8" width="1" height="2.4" fill="#828282"/>
<rect x="736.90" y="386.8" width="1" height="2.4" fill="#828282"/>
<text x="551.6" y="397" font-size="6.5" fill="#e6e6e6" text-anchor="middle">0</text>
<text x="588.76" y="397" font-size="6.5" fill="#e6e6e6" text-anchor="middle">20</text>
<text x="625.92" y="397" font-size="6.5" fill="#e6e6e6" text-anchor="middle">40</text>
<text x="663.08" y="397" font-size="6.5" fill="#e6e6e6" text-anchor="middle">60</text>
<text x="700.24" y="397" font-size="6.5" fill="#e6e6e6" text-anchor="middle">80</text>
<text x="737.4" y="397" font-size="6.5" fill="#e6e6e6" text-anchor="middle">100</text>
<text x="638" y="282" font-size="6.9" fill="#dcdcdc" text-anchor="middle" textLength="32" lengthAdjust="spacingAndGlyphs">Luminance</text>
<text x="551" y="282.9" font-size="6.9" fill="#f0f0f0" textLength="25.5" lengthAdjust="spacingAndGlyphs">Y Min: 0</text>
<text x="737.2" y="282.9" font-size="6.9" fill="#f0f0f0" text-anchor="end" textLength="51" lengthAdjust="spacingAndGlyphs">Y Max: 105.1443</text>
<rect x="0.90" y="416.3" width="55.45" height="25" rx="1.5" fill="url(#swg)"/>
<rect x="1.40" y="416.8" width="54.45" height="25" rx="1.5" fill="none" stroke="#969696" stroke-width="1.6"/>
<rect x="3.50" y="418.5" width="51.55" height="13.7" rx="1" fill="rgb(0,0,0)"/>
<text x="28.7" y="438.4" font-size="4.4" fill="#2e2e2e" text-anchor="middle" font-weight="bold">0</text>
<rect x="57.45" y="416.3" width="55.45" height="25" rx="1.5" fill="url(#swg)"/>
<rect x="57.95" y="416.8" width="54.45" height="25" rx="1.5" fill="none" stroke="#969696" stroke-width="1.6"/>
<rect x="60.05" y="418.5" width="51.55" height="13.7" rx="1" fill="rgb(26,26,26)"/>
<text x="85.2" y="438.4" font-size="4.4" fill="#2e2e2e" text-anchor="middle" font-weight="bold">10</text>
<rect x="114.00" y="416.3" width="55.45" height="25" rx="1.5" fill="url(#swg)"/>
<rect x="114.50" y="416.8" width="54.45" height="25" rx="1.5" fill="none" stroke="#969696" stroke-width="1.6"/>
<rect x="116.60" y="418.5" width="51.55" height="13.7" rx="1" fill="rgb(51,51,51)"/>
<text x="141.8" y="438.4" font-size="4.4" fill="#2e2e2e" text-anchor="middle" font-weight="bold">20</text>
<rect x="170.55" y="416.3" width="55.45" height="25" rx="1.5" fill="url(#swg)"/>
<rect x="171.05" y="416.8" width="54.45" height="25" rx="1.5" fill="none" stroke="#969696" stroke-width="1.6"/>
<rect x="173.15" y="418.5" width="51.55" height="13.7" rx="1" fill="rgb(76,76,76)"/>
<text x="198.3" y="438.4" font-size="4.4" fill="#2e2e2e" text-anchor="middle" font-weight="bold">30</text>
<rect x="227.10" y="416.3" width="55.45" height="25" rx="1.5" fill="url(#swg)"/>
<rect x="227.60" y="416.8" width="54.45" height="25" rx="1.5" fill="none" stroke="#969696" stroke-width="1.6"/>
<rect x="229.70" y="418.5" width="51.55" height="13.7" rx="1" fill="rgb(102,102,102)"/>
<text x="254.9" y="438.4" font-size="4.4" fill="#2e2e2e" text-anchor="middle" font-weight="bold">40</text>
<rect x="283.65" y="416.3" width="55.45" height="25" rx="1.5" fill="url(#swg)"/>
<rect x="284.15" y="416.8" width="54.45" height="25" rx="1.5" fill="none" stroke="#969696" stroke-width="1.6"/>
<rect x="286.25" y="418.5" width="51.55" height="13.7" rx="1" fill="rgb(128,128,128)"/>
<text x="311.4" y="438.4" font-size="4.4" fill="#2e2e2e" text-anchor="middle" font-weight="bold">50</text>
<rect x="340.20" y="416.3" width="55.45" height="25" rx="1.5" fill="url(#swg)"/>
<rect x="340.70" y="416.8" width="54.45" height="25" rx="1.5" fill="none" stroke="#969696" stroke-width="1.6"/>
<rect x="342.80" y="418.5" width="51.55" height="13.7" rx="1" fill="rgb(153,153,153)"/>
<text x="368.0" y="438.4" font-size="4.4" fill="#2e2e2e" text-anchor="middle" font-weight="bold">60</text>
<rect x="396.75" y="416.3" width="55.45" height="25" rx="1.5" fill="url(#swg)"/>
<rect x="397.25" y="416.8" width="54.45" height="25" rx="1.5" fill="none" stroke="#969696" stroke-width="1.6"/>
<rect x="399.35" y="418.5" width="51.55" height="13.7" rx="1" fill="rgb(178,178,178)"/>
<text x="424.5" y="438.4" font-size="4.4" fill="#2e2e2e" text-anchor="middle" font-weight="bold">70</text>
<rect x="453.30" y="416.3" width="55.45" height="25" rx="1.5" fill="url(#swg)"/>
<rect x="453.80" y="416.8" width="54.45" height="25" rx="1.5" fill="none" stroke="#969696" stroke-width="1.6"/>
<rect x="455.90" y="418.5" width="51.55" height="13.7" rx="1" fill="rgb(204,204,204)"/>
<text x="481.1" y="438.4" font-size="4.4" fill="#2e2e2e" text-anchor="middle" font-weight="bold">80</text>
<rect x="509.85" y="416.3" width="55.45" height="25" rx="1.5" fill="url(#swg)"/>
<rect x="510.35" y="416.8" width="54.45" height="25" rx="1.5" fill="none" stroke="#969696" stroke-width="1.6"/>
<rect x="512.45" y="418.5" width="51.55" height="13.7" rx="1" fill="rgb(230,230,230)"/>
<text x="537.6" y="438.4" font-size="4.4" fill="#2e2e2e" text-anchor="middle" font-weight="bold">90</text>
<rect x="566.40" y="416.3" width="55.45" height="25" rx="1.5" fill="#222"/>
<rect x="569.00" y="418.5" width="51.55" height="13.7" rx="1" fill="rgb(255,255,255)"/>
<text x="594.2" y="438.4" font-size="4.4" fill="#fff" text-anchor="middle" font-weight="bold">100</text>
<rect x="623.5" y="416" width="125.3" height="25" fill="#444"/>
<rect x="624" y="416.2" width="18.3" height="6.8" fill="url(#btg)" stroke="#4a4a4a" stroke-width="0.6"/>
<ellipse cx="633.2" cy="419.4" rx="2.2" ry="1.4" fill="#3a3a3a"/>
<rect x="624" y="423.4" width="18.3" height="17.6" fill="url(#btg)" stroke="#4a4a4a" stroke-width="0.6"/>
<rect x="627" y="426" width="12.2" height="11.4" rx="1" fill="#141414"/><rect x="628" y="427" width="10.2" height="4.6" fill="#2c2c2c"/>
<rect x="643.2" y="416.2" width="18.1" height="11.3" fill="url(#btg)" stroke="#4a4a4a" stroke-width="0.6"/>
<circle cx="652.2" cy="421.9" r="4.2" fill="#b0b0b0" fill-opacity="0.55"/>
<rect x="661.3" y="416.2" width="17.3" height="11.3" fill="url(#btg)" stroke="#4a4a4a" stroke-width="0.6"/>
<circle cx="670.0" cy="421.9" r="4.2" fill="#b0b0b0" fill-opacity="0.55"/>
<rect x="678.6" y="416.2" width="18.0" height="11.3" fill="url(#btg)" stroke="#4a4a4a" stroke-width="0.6"/>
<circle cx="687.6" cy="421.9" r="4.2" fill="#b0b0b0" fill-opacity="0.55"/>
<rect x="696.6" y="416.2" width="17.5" height="11.3" fill="url(#btg)" stroke="#4a4a4a" stroke-width="0.6"/>
<circle cx="705.4" cy="421.9" r="4.2" fill="#b0b0b0" fill-opacity="0.55"/>
<rect x="650.6" y="420.3" width="3.3" height="3.3" fill="#222"/>
<path d="M668.4 419.6L672.4 421.9L668.4 424.2Z" fill="#222"/>
<path d="M685.7 424.6V420.6Q685.7 418.6 687.6 418.6Q689.5 418.6 689.5 420.6V424.6" fill="none" stroke="#333" stroke-width="1"/>
<ellipse cx="705.3" cy="421.2" rx="2.8" ry="1.8" fill="#555"/>
<rect x="714.1" y="416.2" width="17.5" height="11.3" fill="#323232" stroke="#4a4a4a" stroke-width="0.6"/>
<circle cx="722.8" cy="421.9" r="2.3" fill="#1a1a1a"/>
<rect x="732.4" y="417" width="16.2" height="9.8" fill="#5c5c5c"/>
<text x="740.6" y="424.6" font-size="6.6" fill="#fff" text-anchor="middle" font-weight="bold" textLength="11.4" lengthAdjust="spacingAndGlyphs">123</text>
<rect x="643.2" y="428.2" width="53.4" height="13.3" fill="url(#btg)" stroke="#4a4a4a" stroke-width="0.6"/>
<rect x="697" y="428.2" width="51.6" height="13.3" fill="url(#btg)" stroke="#4a4a4a" stroke-width="0.6"/>
<circle cx="655.3" cy="434.6" r="4" fill="#b8b8b8" fill-opacity="0.6"/><path d="M657 432.6L653.6 434.6L657 436.6" fill="none" stroke="#555" stroke-width="1"/>
<circle cx="738.4" cy="434.6" r="4" fill="#b8b8b8" fill-opacity="0.6"/><path d="M736.8 432.6L740.2 434.6L736.8 436.6" fill="none" stroke="#555" stroke-width="1"/>
<text x="665.8" y="437.6" font-size="8.8" fill="#222" textLength="19.2" lengthAdjust="spacingAndGlyphs">Back</text>
<text x="707" y="437.6" font-size="8.8" fill="#222" textLength="19.8" lengthAdjust="spacingAndGlyphs">Next</text>
</svg>
</body></html>
